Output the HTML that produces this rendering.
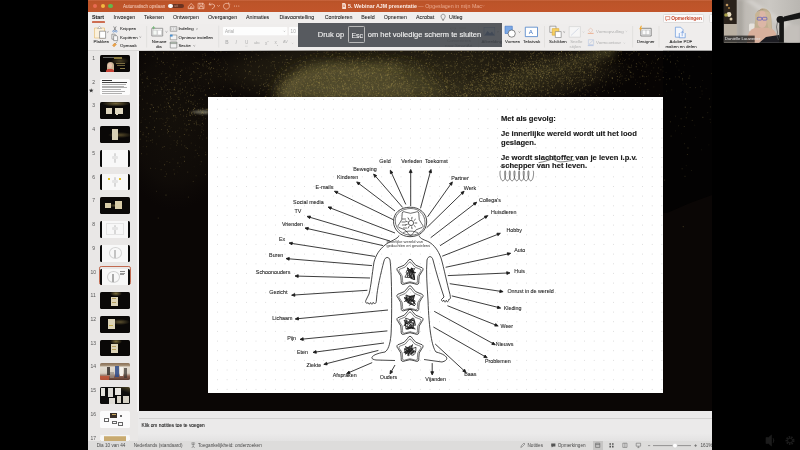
<!DOCTYPE html>
<html><head><meta charset="utf-8">
<style>
*{box-sizing:border-box;margin:0;padding:0}
html,body{width:800px;height:450px;overflow:hidden;background:#000;font-family:"Liberation Sans",sans-serif}
#root{position:absolute;left:0;top:0;width:800px;height:450px;overflow:hidden;will-change:transform;background:#000}
.a{position:absolute}
.t{position:absolute;white-space:nowrap;line-height:1}
svg{position:absolute;left:0;top:0;overflow:visible}
#title{left:88px;top:0;width:624px;height:12px;background:linear-gradient(#cd6a44 0,#b95328 1.3px,#bd5429 3px,#c1552b 100%)}
#tabs{left:88px;top:12px;width:624px;height:12px;background:#f0eeed}
#ribbon{left:88px;top:24px;width:624px;height:26.6px;background:#efedec;border-bottom:0.6px solid #d9d7d6}
#panel{left:88px;top:50.6px;width:49.5px;height:391px;background:#e9e7e6}
#canvas{left:139px;top:50.6px;width:573px;height:360.6px;background:#0a0605;overflow:hidden}
#notes{left:137.5px;top:411.2px;width:574.5px;height:30px;background:linear-gradient(#ebeaea 0,#ebeaea 75%,#e3e2e2 100%)}
#status{left:88px;top:441.2px;width:624px;height:8.8px;background:#dddcdb}
.tab{font-size:5.3px;color:#1c1c1c;top:15.3px;-webkit-text-stroke:0.06px #1c1c1c}
.rb{font-size:4.4px;color:#262626;-webkit-text-stroke:0.06px #262626}
.rg{font-size:4.4px;color:#b0b0b0}
.sb{font-size:4.65px;color:#4a4a4a;top:443.6px}
.thumb{position:absolute;left:100.2px;width:29.6px;height:16.8px;border-radius:1.6px;overflow:hidden}
.num{position:absolute;font-size:5px;color:#555}
</style></head><body><div id="root">
<!-- title bar -->
<div id="title" class="a"></div>
<div class="a" style="left:92.9px;top:3.8px;width:4.5px;height:4.5px;border-radius:50%;background:#e86b52"></div>
<div class="a" style="left:100.5px;top:3.8px;width:4.5px;height:4.5px;border-radius:50%;background:#f4b840"></div>
<div class="a" style="left:108.3px;top:3.8px;width:4.5px;height:4.5px;border-radius:50%;background:#62b84c"></div>
<div class="t" style="left:123px;top:5.1px;font-size:4.55px;color:#f6d2c2">Automatisch opslaan</div>
<div class="a" style="left:168px;top:3.7px;width:15.6px;height:4.8px;border-radius:2.4px;background:#6a3321"></div>
<div class="a" style="left:168.3px;top:3.95px;width:4.3px;height:4.3px;border-radius:50%;background:#fbfbfb"></div>
<div class="t" style="left:174.2px;top:4.7px;font-size:3.4px;color:#c89a88">uit</div>
<svg width="800" height="12" viewBox="0 0 800 12"><g fill="none" stroke="#f3c3ad" stroke-width="0.75" stroke-linejoin="round" stroke-linecap="round">
<path d="M188.6,6.3 L191.2,3.4 L193.8,6.3 L193.8,8.6 L188.6,8.6 Z M190.4,8.6 L190.4,6.9 Q191.2,6.2 192,6.9 L192,8.6"/>
<path d="M198.5,3.3 H203.3 L204,4 V8.7 H198.5 Z M199.8,3.3 V5.2 H202.5 V3.3 M199.6,8.7 V6.6 H203 V8.7"/>
<path d="M209.3,4.6 Q212.7,3 214.5,5 Q215.6,7.2 212.2,8.9 M209.3,4.6 L209.8,3.1 M209.3,4.6 L210.9,5"/>
<path d="M217.3,5.4 L218.5,6.4 L219.7,5.4" stroke-width="0.6"/>
<path d="M229.3,5.2 A3,3 0 1 1 228.4,3.9 M228.5,2.9 L228.6,4.1 L229.8,4.2"/>
</g><g fill="#f3c3ad"><circle cx="234.4" cy="6" r="0.55"/><circle cx="236.6" cy="6" r="0.55"/><circle cx="238.8" cy="6" r="0.55"/></g>
<path d="M342.2,3 H344.8 L346,4.2 V9 H342.2 Z" fill="#f6dccf"/><path d="M343,5.2 H345 M343,6.5 H345" stroke="#c65027" stroke-width="0.5"/>
</svg>
<div class="t" style="left:348px;top:4.2px;font-size:5.3px;color:#fbece6"><b>5. Webinar AJM presentatie</b><span style="color:#eaa98d"> — Opgeslagen in mijn Mac</span></div>
<svg width="800" height="12" viewBox="0 0 800 12"><path d="M482.3,5.3 L483.3,6.3 L484.3,5.3" fill="none" stroke="#e09a80" stroke-width="0.5"/></svg>

<!-- tabs -->
<div id="tabs" class="a"></div>
<div class="t tab" style="left:92px;font-weight:bold;color:#222">Start</div>
<div class="a" style="left:92px;top:21.4px;width:12.6px;height:1.2px;background:#cd6e52;border-radius:0.6px"></div>
<div class="t tab" style="left:113.5px">Invoegen</div>
<div class="t tab" style="left:144px">Tekenen</div>
<div class="t tab" style="left:173px">Ontwerpen</div>
<div class="t tab" style="left:208px">Overgangen</div>
<div class="t tab" style="left:246px">Animaties</div>
<div class="t tab" style="left:279.4px">Diavoorstelling</div>
<div class="t tab" style="left:324.7px">Controleren</div>
<div class="t tab" style="left:361.2px">Beeld</div>
<div class="t tab" style="left:383.7px">Opnemen</div>
<div class="t tab" style="left:416px">Acrobat</div>
<svg width="800" height="30" viewBox="0 0 800 30"><path d="M441.2,17.2 A2.1,2.1 0 1 1 445,17.2 Q444.3,18.3 444,19.4 H442.2 Q441.9,18.3 441.2,17.2 Z M442.3,20.3 H443.9" fill="none" stroke="#555" stroke-width="0.55"/></svg>
<div class="t tab" style="left:449px">Uitleg</div>
<div class="a" style="left:662.6px;top:14.2px;width:41.5px;height:8.4px;background:#fcfbfb;border:0.5px solid #dedcdb;border-radius:1.5px"></div>
<svg width="800" height="30" viewBox="0 0 800 30"><path d="M665.6,16.6 H669.8 V19.6 H667.5 L666.3,20.7 V19.6 H665.6 Z" fill="none" stroke="#c94a2c" stroke-width="0.55" stroke-linejoin="round"/></svg>
<div class="t" style="left:671.2px;top:16.8px;font-size:4.75px;color:#c64629;font-weight:bold">Opmerkingen</div>
<div class="a" style="left:708.6px;top:14.2px;width:5px;height:8.4px;background:#fcfbfb;border:0.5px solid #dedcdb;border-radius:1.5px"></div>

<!-- ribbon -->
<div id="ribbon" class="a"></div>
<svg width="800" height="52" viewBox="0 0 800 52">
<g stroke-width="0.6" stroke-linejoin="round">
<!-- paste -->
<path d="M94.5,28 H104.5 V38 H94.5 Z" fill="#fbf1dc" stroke="#e6b866"/>
<path d="M97.5,28.5 L99.5,26.3 L101.5,28.5 Z" fill="#fff" stroke="#999"/>
<path d="M99.6,31.2 H105.6 V38.3 H99.6 Z" fill="#fff" stroke="#6a6a6a"/>
<path d="M106.9,31.6 L107.8,32.4 L108.7,31.6" fill="none" stroke="#555" stroke-width="0.5"/>
<!-- scissors -->
<path d="M113.6,26.4 L115.9,30.5 M116.2,26.4 L113.9,30.5" fill="none" stroke="#555"/>
<circle cx="113.6" cy="31.3" r="0.9" fill="none" stroke="#4a7ec8"/><circle cx="116.2" cy="31.3" r="0.9" fill="none" stroke="#4a7ec8"/>
<!-- copy -->
<path d="M111.9,34.2 H115 L116,35.2 V39.2 H111.9 Z" fill="#f6f6f6" stroke="#6a6a6a"/>
<path d="M113.6,35.7 H116.6 L117.6,36.7 V40.6 H113.6 Z" fill="#f6f6f6" stroke="#6a6a6a"/>
<path d="M139.4,36.6 L140.3,37.4 L141.2,36.6" fill="none" stroke="#555" stroke-width="0.5"/>
<!-- brush -->
<path d="M112.6,45.3 L114.8,43 L116.3,44.5 L114,46.8 Z" fill="#eba447" stroke="#d98a30"/>
<path d="M115.3,43.5 L117.3,41.6" fill="none" stroke="#777"/>
<!-- separators -->
<path d="M146.6,26 V47.5 M218.7,25.7 V47.5 M544.5,26 V47.5 M632.6,26 V47.5 M659,26 V47.5" stroke="#d6d4d3" stroke-width="0.5"/>
<!-- nieuwe dia -->
<path d="M151.8,28.3 H162.7 V36 H151.8 Z" fill="#f5f5f5" stroke="#858585" stroke-width="0.8"/>
<path d="M153,30.2 H157 V35 H153 Z" fill="#f4f8f4" stroke="#aaa" stroke-width="0.4"/>
<path d="M157.6,30.2 H161.5 V35 H157.6 Z" fill="#fff" stroke="#aaa" stroke-width="0.4"/>
<path d="M153.6,26 V29.4 M152,27.7 H155.2" stroke="#67b36a" stroke-width="0.7"/>
<path d="M165.6,31.4 L166.5,32.2 L167.4,31.4" fill="none" stroke="#555" stroke-width="0.5"/>
<!-- indeling etc -->
<path d="M170.3,26.6 H176.8 V31.3 H170.3 Z" fill="#f4f4f4" stroke="#7a7a7a"/><path d="M171.4,27.8 H175.7 V30.2 H171.4 Z M173.5,27.8 V30.2" fill="none" stroke="#aaa" stroke-width="0.4"/>
<path d="M196,28.6 L196.9,29.4 L197.8,28.6" fill="none" stroke="#555" stroke-width="0.5"/>
<path d="M170.3,35 H176.8 V39.8 H170.3 Z" fill="#f4f4f4" stroke="#7a7a7a"/><path d="M170,34.6 H172.6 V36.6 H170 Z" fill="#4a90d0" stroke="none"/>
<path d="M170.3,42.2 H176.8 V48 H170.3 Z" fill="#f2f2f2" stroke="#7a7a7a"/><path d="M170.3,42.2 H176.8 V43.6 H170.3 Z" fill="#c6dcc3" stroke="#7a7a7a"/>
<path d="M193.4,45.4 L194.3,46.2 L195.2,45.4" fill="none" stroke="#555" stroke-width="0.5"/>
<!-- font -->
<rect x="223" y="27" width="64.3" height="8.2" rx="0.8" fill="#fdfdfd" stroke="none"/>
<rect x="288.9" y="27" width="10" height="8.2" rx="0.8" fill="#fdfdfd" stroke="none"/>
<path d="M283.6,30.8 L284.4,31.6 L285.2,30.8" fill="none" stroke="#999" stroke-width="0.5"/>
<path d="M291.8,42.8 L292.6,43.6 L293.4,42.8" fill="none" stroke="#bbb" stroke-width="0.5"/>
<path d="M245,46.2 H247.6" stroke="#bbb" stroke-width="0.4"/>
<!-- vormen -->
<path d="M505,26.2 H512.3 V33.5 H505 Z" fill="#7aa8e6" stroke="#3f74c4"/>
<circle cx="511.7" cy="33.6" r="3.6" fill="#fff" stroke="#555" stroke-width="0.7"/>
<path d="M518.6,31.6 L519.5,32.4 L520.4,31.6" fill="none" stroke="#555" stroke-width="0.5"/>
<path d="M525.3,27.2 H537.5 V36.6 H525.3 Z" fill="#fff" stroke="#4a80c8" stroke-width="0.8"/>
<!-- schikken -->
<path d="M549.8,26.2 H556 V32.4 H549.8 Z" fill="#f4f4f4" stroke="#777"/>
<path d="M552.2,28.6 H558.8 V35.2 H552.2 Z" fill="#f7cf60" stroke="#d6a838"/>
<path d="M555.3,31.6 H561.2 V37.5 H555.3 Z" fill="#fff" stroke="#777"/>
<path d="M563.3,31.6 L564.2,32.4 L565.1,31.6" fill="none" stroke="#555" stroke-width="0.5"/>
<path d="M569.2,26.6 H580.4 V37.2 H569.2 Z" fill="#f6f6f6" stroke="#cfcfcf"/>
<path d="M571,35.5 L578.6,28.4" stroke="#c8d0e0" stroke-width="0.7"/>
<path d="M582.6,31.6 L583.5,32.4 L584.4,31.6" fill="none" stroke="#c0c0c0" stroke-width="0.5"/>
<path d="M588.3,30.3 L590.6,28 L593,30.3 L590.6,32.6 Z" fill="none" stroke="#e4b09a" stroke-width="0.5"/>
<path d="M587.8,33.4 H593.6" stroke="#e8a27e" stroke-width="0.8"/>
<path d="M625.6,30.9 L626.4,31.6 L627.2,30.9 M623.6,42.7 L624.4,43.4 L625.2,42.7" fill="none" stroke="#c0c0c0" stroke-width="0.5"/>
<path d="M588.4,39.7 H593.6 V44.5 H588.4 Z" fill="none" stroke="#b0c0de" stroke-width="0.5"/>
<path d="M589.2,44 L593.2,40.2" stroke="#a8b8d8" stroke-width="0.5"/>
<path d="M587.8,45.6 H593.6" stroke="#a8bce0" stroke-width="0.8"/>
<!-- designer -->
<path d="M640.8,28.3 H651.2 V36 H640.8 Z" fill="#fafafa" stroke="#707070" stroke-width="0.8"/>
<path d="M642.2,30 H649.8 V34.6 H642.2 Z M646,30 V34.6" fill="none" stroke="#999" stroke-width="0.45"/>
<path d="M640.8,25.8 L639.2,29.2 L640.6,29.2 L639.6,31.6 L642.4,28 L641,28 L642,25.8 Z" fill="#f0a830" stroke="none"/>
<!-- adobe pdf -->
<path d="M675.4,27.2 H680.6 L683,29.6 V37.2 H675.4 Z" fill="#f4f7fd" stroke="#5d8fd8" stroke-width="0.65"/>
<path d="M679.3,33 V37.8 H685.2 V33" fill="#f4f7fd" stroke="#5d8fd8" stroke-width="0.65"/>
<path d="M682.2,36.2 V31.6 M680.9,32.8 L682.2,31.5 L683.5,32.8" fill="none" stroke="#5d8fd8" stroke-width="0.6"/>
</g></svg>
<div class="t rb" style="left:93.5px;top:39.8px">Plakken</div>
<div class="t rb" style="left:120px;top:27.2px">Knippen</div>
<div class="t rb" style="left:120px;top:35.8px">Kopiëren</div>
<div class="t rb" style="left:120px;top:44px">Opmaak</div>
<div class="t rb" style="left:151.8px;top:40.1px">Nieuwe</div>
<div class="t rb" style="left:155.9px;top:44.8px">dia</div>
<div class="t rb" style="left:178.4px;top:27.1px">Indeling</div>
<div class="t rb" style="left:178.4px;top:35.7px">Opnieuw instellen</div>
<div class="t rb" style="left:178.4px;top:44.1px">Sectie</div>
<div class="t rg" style="left:225px;top:29.7px;font-size:4.6px;color:#a8a8a8">Arial</div>
<div class="t rg" style="left:290.6px;top:29.7px;font-size:4.6px;color:#a8a8a8">10</div>
<div class="t rg" style="left:225.2px;top:41.3px;font-size:4.6px;font-weight:bold">B</div>
<div class="t rg" style="left:235.6px;top:41.3px;font-size:4.6px;font-style:italic">I</div>
<div class="t rg" style="left:245px;top:41.3px;font-size:4.6px">U</div>
<div class="t rg" style="left:254px;top:41.6px;font-size:3.8px">abc</div>
<div class="t rg" style="left:265px;top:41.3px;font-size:4.6px">x<sup style="font-size:2.5px">2</sup></div>
<div class="t rg" style="left:274.5px;top:41.3px;font-size:4.6px">x<sub style="font-size:2.5px">2</sub></div>
<div class="t rg" style="left:283px;top:41.3px;font-size:3.8px">AV</div>
<div class="t rb" style="left:505px;top:40.1px">Vormen</div>
<div class="t" style="left:528.8px;top:28.8px;font-size:6.2px;color:#3a70c0">A</div>
<div class="t rb" style="left:523px;top:40.1px">Tekstvak</div>
<div class="t rb" style="left:549px;top:40.1px">Schikken</div>
<div class="t rg" style="left:570.2px;top:40.1px">Snelle</div>
<div class="t rg" style="left:569.6px;top:44.8px">stijlen</div>
<div class="t rg" style="left:596px;top:29.6px">Vormopvulling</div>
<div class="t rg" style="left:596px;top:41.4px">Vormcontour</div>
<div class="t rb" style="left:637px;top:39.8px">Designer</div>
<div class="t rb" style="left:669.6px;top:39.8px">Adobe PDF</div>
<div class="t rb" style="left:665.4px;top:44.6px">maken en delen</div>

<!-- panel with thumbnails -->
<div id="panel" class="a"></div>
<div class="a" style="left:137.4px;top:50.6px;width:1.6px;height:361px;background:#f5f4f4"></div>
<div class="t num" style="left:92.3px;top:56.0px">1</div>
<div class="thumb" style="top:55.0px;height:16.8px;background:radial-gradient(ellipse 9px 4px at 20px 6px, rgba(150,130,70,0.45), rgba(0,0,0,0) 100%), #0a0807"><div class="a" style="left:2.5px;top:2.2px;width:11px;height:1.3px;background:#6a6a66"></div><div class="a" style="left:14px;top:2.2px;width:8px;height:1.6px;background:#8a7a40"></div><div class="a" style="left:6.5px;top:7px;width:7px;height:8.5px;border-radius:3.5px 3.5px 1px 1px;background:#c8b494"></div><div class="a" style="left:8px;top:8px;width:4px;height:5px;border-radius:2px;background:#e6c2ae"></div><div class="a" style="left:6px;top:14px;width:8px;height:2.8px;background:#c84438;border-radius:2.5px 2.5px 0 0"></div><div class="a" style="left:16px;top:7.5px;width:9px;height:0.8px;background:#7a6c40"></div><div class="a" style="left:17px;top:10px;width:8px;height:0.8px;background:#6a5e38"></div><div class="a" style="left:20px;top:12.5px;width:5px;height:0.8px;background:#8a7a48"></div></div>
<div class="t num" style="left:92.3px;top:79.7px">2</div>
<svg width="800" height="450" viewBox="0 0 800 450"><path d="M91.20,88.20 L91.79,89.79 L93.48,89.86 L92.15,90.91 L92.61,92.54 L91.20,91.60 L89.79,92.54 L90.25,90.91 L88.92,89.86 L90.61,89.79Z" fill="#333"/></svg>
<div class="thumb" style="top:78.7px;height:16.8px;background:#fcfcfc"><div class="a" style="left:2.2px;top:1.3px;width:10px;height:1.1px;background:#333"></div><div class="a" style="left:2.2px;top:3.2px;width:25px;height:1px;background:#444"></div><div class="a" style="left:2.2px;top:5.2px;width:24px;height:0.55px;background:#b0b0b0"></div><div class="a" style="left:2.2px;top:7.0px;width:22px;height:0.55px;background:#b0b0b0"></div><div class="a" style="left:2.2px;top:8.8px;width:25px;height:0.55px;background:#b0b0b0"></div><div class="a" style="left:2.2px;top:10.6px;width:19px;height:0.55px;background:#b0b0b0"></div><div class="a" style="left:2.2px;top:12.4px;width:23px;height:0.55px;background:#b0b0b0"></div><div class="a" style="left:2.2px;top:14.2px;width:20px;height:0.55px;background:#b0b0b0"></div></div>
<div class="t num" style="left:92.3px;top:103.4px">3</div>
<div class="thumb" style="top:102.4px;height:16.8px;background:radial-gradient(ellipse 14px 3px at 16px 1.5px, rgba(160,140,80,0.7), rgba(0,0,0,0) 100%), #0a0807"><div class="a" style="left:6px;top:5.5px;width:6px;height:6.5px;background:#ddd4bc"></div><div class="a" style="left:14.5px;top:6px;width:8px;height:5.5px;background:#e0d8c0"></div><div class="a" style="left:16px;top:11.5px;width:2px;height:1.5px;background:#e0d8c0"></div></div>
<div class="t num" style="left:92.3px;top:127.2px">4</div>
<div class="thumb" style="top:126.2px;height:16.8px;background:radial-gradient(ellipse 12px 3px at 20px 9px, rgba(150,130,70,0.55), rgba(0,0,0,0) 100%), #0a0807"><div class="a" style="left:12px;top:3px;width:6px;height:11px;background:#d8cfb4"></div></div>
<div class="t num" style="left:92.3px;top:150.9px">5</div>
<div class="thumb" style="top:149.9px;height:16.8px;background:#0a0a0a"><div class="a" style="left:2px;top:0;width:25.6px;height:16.8px;background:#f8f8f8"></div><div class="a" style="left:13.6px;top:3.5px;width:2.4px;height:10px;background:#d8d8d8;border-radius:1.2px"></div><div class="a" style="left:11.5px;top:6px;width:6.6px;height:3px;background:#e4e4e4;border-radius:1px"></div></div>
<div class="t num" style="left:92.3px;top:174.6px">6</div>
<div class="thumb" style="top:173.6px;height:16.8px;background:#0a0a0a"><div class="a" style="left:2px;top:0;width:25.6px;height:16.8px;background:#f8f8f8"></div><div class="a" style="left:13.6px;top:3.5px;width:2.4px;height:10px;background:#d8d8d8;border-radius:1.2px"></div><div class="a" style="left:11.5px;top:6px;width:6.6px;height:3px;background:#e4e4e4;border-radius:1px"></div><div class="a" style="left:8px;top:4px;width:2px;height:2px;background:#e0c030"></div><div class="a" style="left:19px;top:4px;width:2px;height:2px;background:#e0c030"></div></div>
<div class="t num" style="left:92.3px;top:198.3px">7</div>
<div class="thumb" style="top:197.3px;height:16.8px;background:radial-gradient(ellipse 8px 2px at 15px 8.5px, rgba(160,140,80,0.5), rgba(0,0,0,0) 100%), #0a0807"><div class="a" style="left:5px;top:5.5px;width:6px;height:5.5px;background:#d8cca8"></div><div class="a" style="left:15px;top:4px;width:7px;height:8px;background:#d8cca8"></div></div>
<div class="t num" style="left:92.3px;top:222.0px">8</div>
<div class="thumb" style="top:221.0px;height:16.8px;background:#0a0a0a"><div class="a" style="left:2px;top:0;width:25.6px;height:16.8px;background:#f8f8f8"></div><div class="a" style="left:13.6px;top:3.5px;width:2.4px;height:10px;background:#d8d8d8;border-radius:1.2px"></div><div class="a" style="left:11.5px;top:6px;width:6.6px;height:3px;background:#e4e4e4;border-radius:1px"></div><div class="a" style="left:6px;top:2px;width:18px;height:12px;border:0.5px solid #e4e4e4"></div></div>
<div class="t num" style="left:92.3px;top:245.8px">9</div>
<div class="thumb" style="top:244.8px;height:16.8px;background:#0a0a0a"><div class="a" style="left:2px;top:0;width:25.6px;height:16.8px;background:#f8f8f8"></div><div class="a" style="left:8.5px;top:2.5px;width:13px;height:12px;border-radius:50%;border:0.5px solid #d4d4d4"></div><div class="a" style="left:14.3px;top:5px;width:1.4px;height:8px;background:#c4c4c4"></div></div>
<div class="t num" style="left:90.6px;top:269.5px">10</div>
<div class="a" style="left:99px;top:266.3px;width:32px;height:19.2px;border:1.4px solid #c26a50;border-radius:2.2px"></div>
<div class="thumb" style="top:268.5px;height:16.8px;background:#0a0a0a"><div class="a" style="left:2px;top:0;width:25.6px;height:16.8px;background:#f8f8f8"></div><div class="a" style="left:6.5px;top:2.5px;width:13px;height:12px;border-radius:50%;border:0.5px solid #d0d0d0"></div><div class="a" style="left:12.3px;top:5px;width:1.3px;height:8px;background:#aaa"></div><div class="a" style="left:19.5px;top:2.5px;width:5px;height:0.8px;background:#888"></div><div class="a" style="left:19.5px;top:4px;width:5px;height:0.6px;background:#999"></div><div class="a" style="left:19.5px;top:5.3px;width:4px;height:0.6px;background:#999"></div></div>
<div class="t num" style="left:90.6px;top:293.2px">11</div>
<div class="thumb" style="top:292.2px;height:16.8px;background:radial-gradient(ellipse 6px 3px at 16px 1.5px, rgba(170,150,80,0.7), rgba(0,0,0,0) 100%), #0a0807"><div class="a" style="left:11px;top:4.5px;width:7px;height:9px;background:#ddd4b8"></div><div class="a" style="left:12px;top:6px;width:4px;height:0.8px;background:#b8a060"></div><div class="a" style="left:12px;top:9.5px;width:4px;height:0.8px;background:#b8a060"></div></div>
<div class="t num" style="left:90.6px;top:316.9px">12</div>
<div class="thumb" style="top:315.9px;height:16.8px;background:radial-gradient(ellipse 10px 3px at 20px 6px, rgba(160,140,80,0.55), rgba(0,0,0,0) 100%), #0a0807"><div class="a" style="left:8px;top:3px;width:7px;height:10px;background:#ddd4b8"></div><div class="a" style="left:9px;top:9px;width:4px;height:1px;background:#c8b050"></div></div>
<div class="t num" style="left:90.6px;top:340.6px">13</div>
<div class="thumb" style="top:339.6px;height:16.8px;background:radial-gradient(ellipse 6px 3px at 16px 1.5px, rgba(170,150,80,0.7), rgba(0,0,0,0) 100%), #0a0807"><div class="a" style="left:11px;top:4.5px;width:7px;height:9px;background:#ddd4b8"></div><div class="a" style="left:12px;top:6px;width:4px;height:0.8px;background:#b8a060"></div><div class="a" style="left:12px;top:9.5px;width:4px;height:0.8px;background:#b8a060"></div></div>
<div class="t num" style="left:90.6px;top:364.4px">14</div>
<div class="thumb" style="top:363.4px;height:16.8px;background:linear-gradient(180deg,#8a7058 0%,#a08a70 14%,#e4ddd2 24%,#d8d0c4 60%,#8a6050 78%,#5a3a30 100%)"><div class="a" style="left:7px;top:4px;width:3px;height:8px;background:#2a2420;opacity:0.8"></div><div class="a" style="left:15px;top:3px;width:4px;height:11px;background:#2e4a88;opacity:0.85"></div><div class="a" style="left:20px;top:4px;width:3px;height:9px;background:#f4f0ea"></div><div class="a" style="left:24px;top:5px;width:3px;height:10px;background:#3a3430;opacity:0.7"></div><div class="a" style="left:0;top:12.5px;width:9px;height:4.3px;background:#c8583a;opacity:0.8"></div><div class="a" style="left:10px;top:9px;width:4px;height:6px;background:#9a9088;opacity:0.7"></div></div>
<div class="t num" style="left:90.6px;top:388.1px">15</div>
<div class="thumb" style="top:387.1px;height:16.8px;background:linear-gradient(200deg,rgba(160,140,70,0.5) 0,rgba(0,0,0,0) 25%),#0c0c0c"><div class="a" style="left:0.5px;top:1px;width:4.5px;height:8px;background:#e4e2dc"></div><div class="a" style="left:8px;top:1px;width:4.5px;height:9px;background:#dcdad4"></div><div class="a" style="left:15px;top:1px;width:6px;height:6.5px;background:#e8e6e0"></div><div class="a" style="left:9px;top:11px;width:6px;height:5.5px;background:#e0ddd6"></div><div class="a" style="left:17px;top:9px;width:4px;height:7px;background:#d8d4c8"></div><div class="a" style="left:23px;top:9px;width:6px;height:7px;background:#d4d0c4"></div></div>
<div class="t num" style="left:90.6px;top:411.8px">16</div>
<div class="thumb" style="top:410.8px;height:16.8px;background:#fbfbfb"><div class="a" style="left:10px;top:2px;width:7px;height:5px;background:#3a3128"></div><div class="a" style="left:12px;top:3.5px;width:4px;height:1px;background:#c8a860"></div><div class="a" style="left:4px;top:7.5px;width:5px;height:4px;border:0.5px solid #666;background:#fff"></div><div class="a" style="left:12px;top:10px;width:5px;height:3px;border:0.5px solid #666"></div><div class="a" style="left:17.5px;top:11.5px;width:5px;height:3.5px;border:0.5px solid #666"></div><div class="a" style="left:20px;top:4px;width:2px;height:1.5px;border:0.5px solid #666"></div></div>
<div class="t num" style="left:90.6px;top:435.5px">17</div>
<div class="thumb" style="top:434.5px;height:6.7px;background:linear-gradient(180deg,#f4f4f4 0 12%,#d4bc8c 12% 30%,#e4d4b0 30% 40%,#c8aa70 40% 100%)"><div class="a" style="left:0;top:0;width:3.5px;height:17px;background:#f6f6f6"></div><div class="a" style="left:26px;top:0;width:3.6px;height:17px;background:#f6f6f6"></div></div>

<!-- canvas -->
<div id="canvas" class="a"></div>
<svg width="800" height="450" viewBox="0 0 800 450">
<defs>
<radialGradient id="gc"><stop offset="0" stop-color="#7a7048" stop-opacity="1"/><stop offset="0.78" stop-color="#645a3a" stop-opacity="0.95"/><stop offset="1" stop-color="#3a3320" stop-opacity="0"/></radialGradient>
<radialGradient id="gs"><stop offset="0" stop-color="#4e4830" stop-opacity="1"/><stop offset="1" stop-color="#3a3320" stop-opacity="0"/></radialGradient>
<radialGradient id="gb"><stop offset="0" stop-color="#2c2716" stop-opacity="1"/><stop offset="0.7" stop-color="#201b10" stop-opacity="0.8"/><stop offset="1" stop-color="#1a150c" stop-opacity="0"/></radialGradient>
<filter id="sb" x="-20%" y="-50%" width="140%" height="200%"><feGaussianBlur stdDeviation="0.8"/></filter>
<filter id="cb" x="-20%" y="-50%" width="140%" height="200%"><feGaussianBlur stdDeviation="7"/></filter>
<filter id="rb" x="-20%" y="-50%" width="140%" height="200%"><feGaussianBlur stdDeviation="4"/></filter>
<clipPath id="cc"><rect x="139" y="50.6" width="573" height="360.6"/></clipPath>
</defs>
<g clip-path="url(#cc)">
<path d="M663,50.6 H712 V195 L690,203 L667,213 H663 Z" fill="#030202"/><rect x="600" y="50.6" width="63" height="46.4" fill="#030202" opacity="0.5"/>
<ellipse cx="410" cy="72" rx="230" ry="38" fill="url(#gb)"/>
<ellipse cx="175" cy="120" rx="60" ry="90" fill="url(#gb)" opacity="0.3"/>
<ellipse cx="535" cy="72" rx="80" ry="16" fill="url(#gs)" transform="rotate(-14 535 72)" opacity="0.75"/>
<ellipse cx="470" cy="88" rx="55" ry="14" fill="url(#gs)" opacity="0.7"/>
<path d="M276,100 C278,80 292,66 322,64 L395,65 C425,67 438,82 446,100 Z" fill="#433c22" filter="url(#cb)"/>
<path d="M286,100 C290,82 302,70 330,68 L400,69" fill="none" stroke="#5a522e" stroke-width="8" filter="url(#rb)" opacity="0.8"/>
<path d="M455,92 C500,84 560,68 615,50" fill="none" stroke="#4e4828" stroke-width="10" filter="url(#rb)" opacity="0.8"/>
<ellipse cx="470" cy="96" rx="60" ry="9" fill="url(#gs)" opacity="0.6"/>
<ellipse cx="530" cy="80" rx="95" ry="24" fill="url(#gb)" transform="rotate(-10 530 80)" opacity="0.9"/>
<ellipse cx="345" cy="94" rx="80" ry="30" fill="url(#gc)" opacity="0.3"/>
<path d="M190,112 Q200,109.5 208.5,110.5 L208.5,114 Q200,114.5 190,112 Z" fill="#b0ae98" opacity="0.6" filter="url(#sb)"/>
<path d="M293.6 82.0h0M262.6 65.3h0M316.3 78.9h0M403.9 83.0h0M505.4 90.5h0M488.4 87.9h0M619.1 66.3h0M534.8 85.7h0M501.4 67.9h0M275.6 81.1h0M145.1 63.4h0M392.9 79.2h0M527.6 73.1h0M410.6 72.2h0M531.4 88.6h0M507.7 78.1h0M327.5 77.9h0M468.6 51.7h0M608.6 92.8h0M552.9 72.8h0M518.5 83.9h0M568.9 71.7h0M461.7 62.4h0M161.6 87.9h0M333.3 88.4h0M530.6 67.0h0M397.2 74.0h0M627.4 69.6h0M527.4 70.7h0M161.6 61.3h0M526.9 89.4h0M386.3 71.2h0M483.9 71.4h0M532.8 86.3h0M643.4 61.7h0M478.4 84.7h0M506.2 59.4h0M273.9 61.8h0M675.5 63.8h0M418.2 68.2h0M576.4 77.5h0M531.8 93.9h0M372.9 73.4h0M575.5 78.4h0M472.5 72.4h0M337.7 87.1h0M477.8 66.2h0M327.9 68.8h0M614.0 51.8h0M472.0 76.8h0M372.0 70.1h0M223.4 86.8h0M591.4 65.2h0M537.2 77.9h0M268.9 89.6h0M340.1 91.8h0M372.7 74.0h0M401.5 90.7h0M479.1 96.3h0M501.2 62.4h0M413.3 83.1h0M188.9 100.3h0M542.4 65.8h0M355.4 90.1h0M428.3 56.4h0M367.0 87.6h0M401.8 87.7h0M412.3 82.8h0M213.4 68.3h0M397.1 92.6h0M287.1 80.2h0M403.6 77.2h0M541.4 71.8h0M521.4 76.1h0M528.6 61.5h0M613.9 72.3h0M489.1 89.0h0M466.5 67.7h0M293.8 73.4h0M498.0 61.6h0M438.1 89.5h0M564.0 95.1h0M491.5 74.0h0M451.1 71.2h0M454.5 86.0h0M422.8 78.5h0M373.9 72.7h0M199.6 77.6h0M350.5 56.3h0M327.2 78.3h0M532.5 73.7h0M486.3 77.7h0M480.6 94.5h0M157.1 90.3h0M501.3 95.9h0M568.1 78.6h0M147.1 103.2h0M372.7 86.9h0M511.5 67.3h0M530.8 76.0h0M570.6 78.6h0M559.7 62.5h0M431.0 59.5h0M396.2 96.9h0M517.6 68.5h0M358.4 72.4h0M342.2 93.3h0M351.4 88.2h0M401.7 68.8h0M677.2 60.7h0M506.6 95.4h0M490.3 93.7h0M619.6 72.5h0M472.8 56.8h0M516.5 60.0h0M483.1 81.5h0M536.8 68.6h0M575.5 57.3h0M140.2 139.2h0M487.4 77.7h0M552.2 80.5h0M533.6 83.9h0M341.8 78.7h0M195.7 115.5h0M361.2 74.8h0M360.6 55.2h0M280.5 92.8h0M409.3 86.1h0M310.4 68.0h0M169.1 105.9h0M426.1 51.0h0M508.1 94.2h0M581.9 65.8h0M322.7 85.2h0M178.4 91.3h0M588.1 92.0h0M391.7 84.4h0M488.0 84.7h0M445.8 94.6h0M368.5 78.3h0M456.5 91.4h0M526.6 81.1h0M288.7 82.9h0M354.1 81.3h0M475.7 52.3h0M577.2 82.6h0M558.2 80.8h0M434.4 81.9h0M309.2 81.0h0M188.3 197.1h0M513.6 77.4h0M345.0 75.3h0M380.6 75.4h0M564.2 73.2h0M218.2 76.7h0M339.6 95.5h0M162.8 147.3h0M518.5 95.4h0M571.3 68.6h0M386.8 55.4h0M362.4 65.3h0M410.1 73.7h0M595.7 70.0h0M609.0 55.7h0M613.6 89.0h0M596.1 51.6h0M283.1 93.6h0M577.3 54.8h0M460.4 95.7h0M374.6 72.3h0M548.9 72.6h0M467.2 87.9h0M501.2 91.4h0M180.1 107.6h0M301.1 84.9h0M483.2 77.8h0M629.1 58.9h0M528.8 85.0h0M560.9 70.7h0M274.5 88.9h0M509.6 80.3h0M414.7 66.4h0M435.1 65.0h0M184.8 123.9h0M575.2 60.2h0M516.5 83.5h0M403.1 84.5h0M450.7 90.1h0M324.9 66.1h0M598.3 62.0h0M201.2 161.7h0M373.6 88.9h0M387.7 70.2h0M439.9 77.9h0M590.2 64.0h0M558.1 71.9h0M318.7 75.8h0M332.0 79.1h0M523.2 78.1h0M709.3 98.9h0M530.5 53.7h0M314.9 92.4h0M424.7 93.1h0M202.4 115.3h0M533.5 55.7h0M326.8 52.7h0M639.9 77.1h0M487.8 51.4h0M508.4 60.7h0M293.4 86.7h0M594.0 70.5h0M520.9 93.3h0M317.6 78.5h0M617.8 79.5h0M350.4 86.7h0M540.6 65.2h0M543.6 82.9h0M279.3 90.1h0M493.6 66.4h0M580.3 95.8h0M524.0 65.4h0M289.7 92.0h0M289.3 84.6h0M558.5 78.3h0M444.4 80.6h0M295.7 84.5h0M476.1 68.6h0M334.5 64.2h0M494.9 67.5h0M537.1 62.4h0M364.0 84.9h0M362.2 61.0h0M343.4 89.0h0M354.9 95.4h0M490.7 67.1h0M397.8 59.8h0M559.0 64.9h0M174.0 89.4h0M466.0 75.2h0M576.3 87.8h0M465.3 93.6h0M222.0 69.4h0M608.2 61.6h0M382.3 68.9h0M286.3 91.9h0M566.3 61.2h0M522.1 77.9h0M445.7 78.1h0M189.5 112.9h0M274.6 82.1h0M203.0 110.8h0M353.4 56.3h0M335.4 65.6h0M300.6 88.0h0M341.2 72.8h0M539.8 74.3h0M417.2 60.4h0M304.8 61.8h0M299.8 93.7h0M514.1 82.5h0M529.2 86.1h0M545.1 69.6h0M150.1 116.4h0M299.4 71.5h0M399.7 62.5h0M439.0 79.4h0M500.1 89.6h0M307.7 85.2h0M430.5 80.9h0M473.5 80.6h0M440.4 73.5h0M267.3 79.6h0M573.9 77.7h0M447.2 86.0h0M324.7 95.9h0M323.9 74.0h0M427.4 92.1h0M369.3 56.9h0M533.7 53.4h0M258.5 67.1h0M186.6 116.4h0M622.0 76.0h0M522.6 92.1h0M596.3 56.5h0M378.5 84.4h0M500.6 87.1h0M363.4 89.6h0M349.4 64.1h0M558.6 81.0h0M477.4 91.2h0M445.8 61.1h0M352.2 70.6h0M389.0 77.9h0M191.6 113.8h0M310.8 93.5h0M271.2 62.8h0M400.2 94.2h0M543.9 56.1h0M329.2 87.2h0M306.9 72.5h0M495.6 56.3h0M538.1 64.5h0M608.5 56.6h0M479.1 94.8h0M445.4 71.4h0M418.0 87.7h0M360.7 59.0h0M568.4 66.3h0M378.0 70.9h0M566.2 65.6h0M494.7 84.3h0M439.2 64.8h0M405.1 56.4h0M436.2 89.4h0M620.1 91.1h0M317.8 68.9h0M425.8 91.4h0M353.8 72.7h0M340.8 67.3h0M423.3 82.6h0M502.2 88.8h0M335.0 70.7h0M315.6 77.2h0M379.2 58.8h0M571.4 91.8h0M506.2 82.1h0M372.3 95.0h0M308.6 86.8h0M306.2 92.3h0M413.1 97.0h0M351.3 69.9h0M685.0 176.3h0M299.6 79.3h0M682.1 168.8h0M436.2 73.9h0M163.0 62.9h0M323.1 91.4h0M469.5 88.1h0M644.9 62.4h0M305.6 67.9h0M146.1 136.8h0M340.6 71.3h0M329.4 88.3h0M547.8 83.5h0M682.5 79.9h0M387.2 74.6h0M402.0 51.5h0M580.6 67.5h0M528.2 72.2h0M322.3 65.2h0M391.5 95.6h0M682.6 78.4h0M660.9 69.8h0M483.3 74.8h0M575.3 67.5h0M205.4 174.7h0M603.6 61.3h0M402.7 78.7h0M483.3 71.4h0M314.8 89.4h0M374.4 51.5h0M333.3 89.1h0M460.0 82.0h0M391.8 80.4h0M508.4 76.3h0M271.2 86.6h0M461.1 55.3h0M260.8 76.1h0M524.2 73.1h0M472.0 84.7h0M523.1 69.1h0M510.1 78.0h0M438.5 82.1h0M347.8 54.8h0M365.6 86.0h0M466.1 74.6h0M223.5 67.7h0M448.2 90.8h0M353.7 91.2h0M385.0 72.3h0M563.0 81.1h0M612.8 59.6h0M495.0 67.6h0M420.1 80.2h0M457.8 78.0h0M220.9 76.4h0M201.4 113.6h0M296.1 96.5h0M474.3 77.1h0M173.3 53.8h0M176.8 145.2h0M594.8 59.7h0M381.9 94.7h0M549.3 96.1h0M408.1 88.6h0M334.6 78.2h0M595.5 72.3h0M546.5 65.7h0M391.8 62.3h0M459.4 81.8h0M409.2 90.9h0M554.4 85.6h0M488.3 65.7h0M608.5 65.5h0M172.9 64.6h0M551.6 69.3h0M164.2 146.5h0M550.0 96.8h0M666.3 84.3h0M345.3 75.2h0M340.5 71.6h0M416.9 94.3h0M343.1 89.7h0M301.1 73.5h0M489.8 94.4h0M186.5 125.2h0M317.5 77.2h0M420.4 61.0h0M548.2 60.3h0M518.3 70.5h0M406.7 90.6h0M275.6 68.7h0M500.5 73.8h0M317.3 73.8h0M423.2 88.2h0M505.2 72.8h0M301.4 96.2h0M306.2 95.0h0M466.0 56.7h0M629.7 55.1h0M681.6 73.6h0M333.5 85.4h0M500.8 92.0h0M407.0 80.2h0M298.0 92.3h0M173.3 104.9h0M430.6 96.0h0M546.9 74.3h0M428.2 87.2h0M490.3 93.1h0M493.8 89.2h0M562.1 68.3h0M475.9 81.9h0M561.9 60.4h0M528.4 70.9h0M531.6 80.2h0M542.2 71.4h0M510.0 92.1h0M187.5 148.6h0M319.8 80.2h0M505.3 84.0h0M304.3 74.6h0M355.2 78.1h0M543.1 86.8h0M419.5 67.5h0M505.4 91.4h0M390.0 67.0h0M334.0 90.6h0M466.6 84.4h0M539.6 74.5h0M207.8 109.7h0M464.1 75.7h0M658.7 67.9h0M305.1 66.5h0M500.1 70.4h0M230.6 94.0h0M340.2 92.8h0M411.8 60.6h0M273.0 75.9h0M410.2 96.5h0M699.0 56.8h0M659.2 79.9h0M530.8 82.4h0M432.9 70.8h0M454.9 66.8h0M292.9 96.3h0M645.0 71.7h0M515.6 59.0h0M612.4 77.7h0M174.3 89.3h0M626.8 53.6h0M429.8 73.4h0M354.7 92.6h0M225.7 74.8h0M325.3 68.8h0M387.9 95.6h0M513.0 66.5h0M563.6 94.4h0M540.9 52.3h0M573.8 64.0h0M300.8 69.8h0M214.6 87.4h0M179.8 136.8h0M346.2 91.6h0M497.2 94.2h0M541.7 96.0h0M331.6 85.8h0M555.2 94.4h0M511.9 78.9h0M388.8 68.7h0M516.2 69.4h0M393.3 86.4h0M521.5 93.2h0M315.3 78.1h0M539.6 62.8h0M530.4 95.4h0M349.3 79.3h0M429.6 64.7h0M413.5 70.7h0M350.3 96.9h0M431.4 80.3h0M376.0 89.7h0M161.1 169.7h0M402.2 84.5h0M561.2 90.1h0M422.0 95.8h0M286.4 69.3h0M633.1 77.0h0M369.0 59.4h0M596.8 63.3h0M497.1 88.2h0M451.0 75.2h0M563.2 78.8h0M313.9 58.9h0M518.4 73.7h0M350.4 84.6h0M463.5 95.8h0M407.0 96.1h0M474.6 96.0h0M547.6 90.5h0M368.8 76.3h0M532.1 91.6h0M381.7 75.9h0M366.3 88.4h0M518.4 68.1h0M177.7 143.2h0M536.3 78.5h0M380.6 74.5h0M429.0 87.8h0M141.6 153.7h0M300.0 65.9h0M574.2 60.7h0M193.6 95.0h0M450.7 81.2h0M358.5 76.5h0M371.2 51.7h0M491.1 93.3h0M521.9 86.3h0M381.5 79.1h0M187.0 129.7h0M358.6 91.1h0M361.1 75.7h0M572.0 54.1h0M380.0 70.9h0M593.5 62.7h0M549.9 69.2h0M477.3 94.2h0M505.5 50.9h0M579.9 57.3h0M379.6 89.7h0M457.0 94.0h0M583.7 58.7h0M296.5 76.9h0M537.9 55.3h0M512.5 68.7h0M199.0 88.3h0M539.4 95.0h0M561.4 83.6h0M167.4 132.9h0M489.2 85.4h0M255.3 75.3h0M619.9 80.6h0M572.7 86.6h0M363.6 65.9h0M481.1 91.1h0M388.0 65.0h0M362.1 78.3h0M510.9 85.2h0M340.3 93.5h0M514.6 70.5h0M347.8 96.9h0M431.8 55.4h0M485.3 72.0h0M514.9 84.3h0M592.7 67.0h0M406.9 83.7h0M344.0 74.1h0M385.7 75.0h0M500.7 73.3h0M250.2 71.3h0M386.1 80.9h0M628.2 66.9h0M316.6 56.8h0M334.5 74.5h0M466.8 74.5h0M511.7 71.5h0M542.9 71.5h0M523.1 82.3h0M186.0 102.8h0M258.3 55.5h0M360.6 78.1h0M429.4 62.6h0M355.3 61.0h0M587.3 54.5h0M520.4 62.3h0M331.6 75.7h0M510.1 52.2h0M509.8 58.9h0M481.5 85.6h0M540.6 76.1h0M370.0 66.4h0M286.7 76.8h0M376.1 93.6h0M547.3 70.8h0M550.7 52.8h0M202.4 112.3h0M595.2 92.9h0M456.2 91.2h0M499.4 79.1h0M351.5 76.8h0M342.3 85.7h0M465.6 77.8h0M408.9 72.1h0M368.8 88.4h0M547.2 90.2h0M388.6 72.7h0M311.0 55.7h0M331.1 78.3h0M477.5 76.3h0M479.3 86.2h0M150.7 168.3h0M195.1 62.6h0M530.1 88.9h0M377.7 76.9h0M583.5 84.0h0M569.8 81.3h0M554.7 71.8h0M556.3 90.1h0M200.0 114.2h0M321.8 86.6h0M413.2 80.7h0M579.1 77.5h0M406.4 89.6h0M500.0 79.1h0M543.7 83.8h0M492.8 79.8h0M494.9 88.5h0M628.5 78.8h0M451.9 66.5h0M395.7 64.4h0M397.8 57.3h0M303.4 85.9h0M362.3 88.1h0M411.2 74.0h0M579.5 57.5h0M534.9 84.3h0M485.3 91.8h0M465.5 69.9h0M328.1 60.9h0M372.2 85.4h0M563.5 84.7h0M456.6 93.5h0M387.6 86.7h0M447.1 81.5h0M543.3 72.8h0M591.1 64.3h0M339.0 56.9h0M285.6 84.4h0M542.4 58.3h0M538.4 71.4h0M538.3 83.8h0M542.6 59.8h0M579.5 72.0h0M500.6 76.5h0M401.8 85.8h0M201.4 112.1h0M357.9 79.9h0M633.2 74.0h0M470.1 85.4h0M305.7 71.6h0M458.8 52.5h0M536.6 55.8h0M426.2 81.4h0M335.9 88.1h0M325.6 68.9h0M412.3 80.1h0M517.1 66.8h0M475.2 58.3h0M516.5 87.0h0M272.8 61.5h0M310.3 79.6h0M562.0 94.5h0M455.7 91.1h0M351.4 74.1h0M467.7 56.6h0M390.8 95.6h0M597.4 70.5h0M268.2 86.0h0M502.7 89.4h0M289.2 86.2h0M510.9 89.3h0M510.1 83.2h0M329.1 74.1h0M431.4 55.1h0M403.3 83.1h0M664.7 180.1h0M306.1 89.2h0M508.8 60.0h0M540.7 76.6h0M366.6 73.8h0M184.8 145.9h0M336.0 63.5h0M578.6 67.8h0M324.9 81.5h0M372.3 84.0h0M451.2 65.3h0M442.4 76.9h0M335.6 91.4h0M503.0 76.1h0M443.6 56.8h0M507.6 80.6h0M591.2 75.0h0M305.7 62.2h0M191.5 112.6h0M250.6 61.8h0M472.1 56.2h0M365.9 54.5h0M593.7 71.8h0M579.8 89.6h0M509.2 82.5h0M518.1 82.5h0M147.9 86.2h0M642.4 76.1h0M574.5 68.9h0M392.1 93.1h0M566.6 54.7h0M395.7 80.7h0M351.8 74.7h0M313.1 86.0h0M301.2 93.7h0M295.9 87.3h0M430.2 92.3h0M344.5 74.7h0M556.1 53.3h0M481.0 86.9h0M692.2 120.4h0M562.5 72.6h0M526.3 91.6h0M341.8 70.8h0M610.7 71.9h0M373.6 92.6h0M593.8 56.4h0M294.0 75.0h0M308.8 92.3h0M552.1 85.5h0M367.6 86.9h0M397.0 63.5h0M425.6 93.7h0M343.3 74.4h0M316.7 81.5h0M329.5 82.2h0M516.9 95.0h0M285.1 81.3h0M472.1 64.5h0M326.4 61.1h0M543.2 86.5h0M388.6 74.4h0M293.7 73.9h0M418.7 51.9h0M534.7 84.0h0M142.6 99.3h0M432.7 77.7h0M411.8 52.4h0M560.2 79.1h0M546.7 81.3h0M177.3 140.8h0M341.5 81.4h0M533.6 64.4h0M428.4 72.7h0M495.9 96.4h0M350.9 68.6h0M399.9 70.7h0M518.9 77.7h0M429.3 75.3h0M425.5 80.1h0M600.7 54.5h0M427.5 66.2h0M191.4 130.3h0M366.3 86.0h0M370.3 90.0h0M523.2 72.4h0M259.4 66.2h0M339.9 72.4h0M374.7 68.8h0M488.1 85.3h0M319.5 82.9h0M602.8 91.5h0M399.3 81.8h0M530.3 83.6h0M388.7 74.2h0M291.5 59.4h0M321.6 82.0h0M419.6 65.3h0M528.9 69.3h0M351.1 95.5h0M194.5 113.2h0M435.8 79.0h0M650.7 73.2h0M507.9 67.5h0M166.5 174.0h0M681.1 118.8h0M487.1 91.0h0M464.4 78.1h0M468.8 90.6h0M298.7 92.3h0M332.1 66.0h0M398.1 86.2h0M192.4 114.8h0M288.2 92.7h0M670.3 121.8h0M577.0 71.6h0M327.7 80.9h0M582.5 71.4h0M471.4 59.0h0M299.4 75.5h0M309.7 85.7h0" stroke="#a89654" stroke-opacity="0.5" stroke-width="0.7" stroke-linecap="round"/><path d="M360.3 77.4h0M491.9 77.3h0M428.9 57.5h0M452.9 78.1h0M565.9 64.7h0M429.7 95.5h0M687.5 59.3h0M373.3 81.9h0M500.9 57.0h0M446.4 61.6h0M403.7 74.7h0M173.5 64.3h0M547.8 53.4h0M320.1 70.5h0M638.5 55.5h0M414.4 87.7h0M519.0 72.2h0M510.7 79.2h0M485.7 87.7h0M389.1 77.9h0M227.5 68.0h0M629.5 70.7h0M235.7 90.3h0M387.0 94.2h0M349.0 72.3h0M579.4 63.7h0M357.0 67.7h0M326.1 85.7h0M320.3 62.2h0M563.1 61.6h0M514.6 96.0h0M502.4 73.7h0M417.6 68.4h0M686.2 165.7h0M326.2 80.5h0M412.2 67.4h0M519.9 87.1h0M456.4 86.8h0M378.3 78.3h0M386.9 90.7h0M459.9 75.6h0M520.7 81.5h0M486.5 77.8h0M513.9 91.7h0M452.9 54.7h0M691.4 170.5h0M580.7 60.6h0M474.5 81.9h0M313.3 92.6h0M382.4 76.3h0M475.6 95.9h0M532.1 68.4h0M552.3 79.6h0M474.6 93.7h0M161.2 73.5h0M352.4 69.7h0M516.4 89.0h0M287.9 80.0h0M519.0 64.2h0M410.6 64.5h0M508.1 88.0h0M455.1 67.3h0M479.7 92.9h0M535.9 74.3h0M541.6 58.4h0M333.7 88.3h0M527.1 73.3h0M461.4 95.7h0M442.3 94.1h0M472.4 90.7h0M513.9 87.2h0M507.0 78.6h0M296.9 86.0h0M399.6 72.9h0M484.4 67.4h0M310.4 66.8h0M700.2 57.7h0M423.2 77.3h0M367.4 68.5h0M391.5 85.1h0M528.5 67.4h0M583.9 80.0h0M330.9 74.6h0M571.7 67.1h0M170.5 68.3h0M346.8 80.1h0M369.6 65.5h0M403.7 82.9h0M367.9 88.7h0M333.8 81.1h0M429.0 91.7h0M498.8 77.6h0M361.0 88.4h0M392.7 58.8h0M312.1 57.7h0M357.7 86.4h0M499.4 81.9h0M470.4 53.5h0M329.6 67.9h0M486.5 79.7h0M414.2 77.8h0M439.4 89.6h0M191.0 74.5h0M655.5 80.5h0M242.3 81.9h0M162.0 50.8h0M287.4 94.4h0M531.1 73.6h0M425.4 93.5h0M360.5 77.7h0M252.1 51.5h0M332.9 93.7h0M480.4 85.2h0M202.2 120.6h0M262.9 90.5h0M154.0 111.9h0M298.2 81.1h0M585.2 92.6h0M424.9 93.2h0M309.2 94.6h0M586.4 56.9h0M508.7 89.5h0M203.4 117.8h0M220.2 62.6h0M280.9 95.0h0M617.6 80.6h0M524.0 88.0h0M548.7 59.5h0M506.9 71.1h0M304.0 91.6h0M430.8 57.7h0M611.4 67.1h0M505.3 64.8h0M417.1 73.8h0M582.7 68.8h0M573.3 64.2h0M586.3 57.4h0M490.9 95.4h0M463.1 71.4h0M420.1 87.6h0M390.9 85.3h0M445.6 76.4h0M604.5 74.3h0M441.1 82.1h0M501.4 76.3h0M386.6 70.5h0M275.3 88.9h0M371.3 75.5h0M387.7 93.2h0M323.7 67.7h0M343.6 89.1h0M548.1 81.4h0M368.2 85.3h0M626.7 75.5h0M590.6 58.7h0M299.2 72.6h0M341.7 62.8h0M430.1 63.5h0M464.0 96.0h0M318.9 86.5h0M380.7 68.6h0M366.6 57.5h0M478.8 82.6h0M263.4 85.1h0M374.7 94.3h0M567.0 57.9h0M393.9 54.5h0M653.9 86.9h0M532.7 64.2h0M513.0 63.4h0M401.6 83.5h0M608.5 77.1h0M502.1 67.9h0M552.0 91.7h0M492.1 54.5h0M508.0 73.3h0M565.6 52.4h0M356.5 54.3h0M250.9 62.1h0M374.9 72.4h0M482.6 75.8h0M410.3 67.3h0M190.2 75.6h0M395.3 57.4h0M258.5 72.1h0M615.2 63.6h0M394.7 66.6h0M521.3 94.0h0M585.1 95.1h0M362.2 67.9h0M302.6 72.3h0M320.1 74.6h0M686.5 84.4h0M558.4 92.4h0M340.3 82.0h0M496.5 78.8h0M368.9 87.0h0M678.2 61.4h0M212.8 59.3h0M354.5 72.7h0M163.2 123.7h0M527.2 85.0h0M380.5 63.9h0M619.7 86.2h0M551.2 77.6h0M234.1 66.0h0M403.0 75.4h0M370.7 90.2h0M311.5 60.1h0M332.0 83.7h0M226.2 52.6h0M467.1 51.7h0M407.2 80.6h0M385.2 71.9h0M472.8 66.3h0M444.2 92.0h0M569.0 69.3h0M599.5 67.2h0M414.7 58.7h0M663.0 71.1h0M472.3 60.7h0M414.4 85.5h0M541.0 75.5h0M416.4 96.3h0M508.2 96.4h0M398.7 77.0h0M361.5 65.2h0M409.1 67.4h0M412.6 95.0h0M414.1 77.2h0M369.8 63.2h0M589.9 59.6h0M349.2 94.9h0M555.9 83.4h0M471.7 83.3h0M518.8 90.4h0M553.4 73.5h0M595.5 88.8h0M326.6 88.3h0M575.6 67.8h0M375.5 61.7h0M493.3 79.5h0M483.7 71.3h0M639.7 62.8h0M380.9 58.2h0M266.8 59.4h0M513.6 67.8h0M432.8 83.6h0M317.0 68.8h0M398.3 61.3h0M294.3 62.2h0M509.0 54.6h0M490.8 81.4h0M348.6 89.8h0M536.4 76.0h0M568.8 94.0h0M505.6 84.2h0M155.3 168.6h0M567.1 67.0h0M358.0 55.8h0M156.0 66.0h0M431.7 51.0h0M666.1 72.6h0M437.8 51.1h0M389.8 85.2h0M468.2 83.0h0M373.2 86.4h0M351.3 73.2h0M248.3 72.2h0M516.3 68.7h0M336.4 82.1h0M343.6 70.8h0M516.2 96.2h0M484.0 81.4h0M558.6 71.7h0M509.3 90.6h0M518.3 54.5h0M571.8 69.8h0M510.5 95.2h0M401.0 87.8h0M418.6 72.4h0M419.1 91.5h0M512.1 71.3h0M174.1 140.5h0M301.5 81.3h0M510.7 86.0h0M339.1 71.2h0M360.9 83.9h0M523.0 84.8h0M646.0 67.0h0M261.4 84.0h0M314.3 76.9h0M432.3 62.4h0M403.7 79.9h0M391.7 61.1h0M351.2 86.1h0M489.1 59.1h0M583.8 76.8h0M630.5 54.3h0M450.2 94.2h0M348.2 60.4h0M549.9 70.7h0M675.7 130.9h0M488.9 85.8h0M381.1 62.4h0M578.1 59.4h0M304.6 77.4h0M581.1 65.1h0M389.7 87.7h0M491.6 84.9h0M332.1 61.0h0M345.4 66.9h0M207.0 72.3h0M554.9 52.2h0M531.8 64.9h0M345.1 94.5h0M334.0 87.0h0M531.3 87.1h0M594.1 57.8h0M513.3 67.3h0M526.3 69.5h0M433.4 66.5h0M471.2 73.7h0M281.3 75.0h0M372.8 96.1h0M448.1 87.7h0M483.9 55.5h0M347.8 69.7h0M170.1 148.2h0M304.0 81.0h0M451.6 95.8h0M388.2 71.6h0M532.4 77.0h0M337.1 70.1h0M572.8 92.9h0M177.2 65.2h0M301.5 92.7h0M552.6 67.8h0M518.4 67.8h0M216.5 61.8h0M499.6 57.9h0M384.6 89.9h0M532.1 70.3h0M412.7 63.0h0M497.4 81.1h0M141.0 122.7h0M274.7 67.8h0M169.9 74.8h0M572.0 71.3h0M502.2 78.6h0M575.1 68.3h0M513.4 64.1h0M290.9 76.1h0M218.0 63.5h0M500.5 66.8h0M208.6 83.8h0M252.4 61.2h0M469.0 88.5h0M316.0 78.1h0M538.7 87.2h0M568.4 74.8h0M503.2 91.2h0M470.9 71.1h0M333.2 67.1h0M526.3 69.1h0M176.8 117.8h0M518.0 53.4h0M168.1 51.9h0M441.0 88.2h0M686.7 56.0h0M486.4 72.5h0M481.8 82.4h0M431.4 82.8h0M520.1 66.7h0M538.3 63.2h0M562.5 79.2h0M509.3 94.6h0M422.9 93.1h0M538.5 80.3h0M510.6 75.2h0M454.8 68.9h0M528.4 50.9h0M531.9 74.3h0M567.3 69.9h0M415.1 76.1h0M182.0 82.5h0M493.3 87.2h0M414.8 72.2h0M530.9 76.0h0M412.4 96.1h0M589.6 72.5h0M451.2 80.0h0M378.1 56.8h0M519.2 96.6h0M493.5 73.7h0M476.5 79.8h0M231.5 75.5h0M479.0 73.2h0M380.9 73.7h0M317.6 66.5h0M402.1 66.9h0M542.7 59.0h0M430.4 93.4h0M205.5 152.3h0M388.3 94.8h0M679.0 70.1h0M427.6 71.1h0M364.1 61.5h0M542.0 54.8h0M450.4 61.4h0M336.1 52.1h0M392.4 58.4h0M320.0 73.0h0M296.1 81.9h0M574.8 58.8h0M153.1 112.0h0M401.6 68.2h0M442.8 86.5h0M577.8 62.9h0M580.1 88.5h0M427.7 72.4h0M432.5 81.1h0M309.5 90.7h0M569.5 80.9h0M471.3 60.8h0M519.2 70.4h0M200.0 85.8h0M590.5 77.9h0M339.1 86.0h0M478.7 82.1h0M164.9 102.0h0M677.5 57.3h0M557.4 58.8h0M534.9 68.6h0M541.0 92.1h0M502.3 83.8h0M353.4 65.2h0M431.8 88.2h0M335.2 88.7h0M503.3 86.1h0M486.8 76.3h0M396.7 74.5h0M334.6 81.2h0M559.8 80.5h0M421.4 92.5h0M457.8 87.1h0M373.1 71.6h0M204.3 74.4h0M581.3 72.0h0M504.2 91.8h0M559.4 93.3h0M507.6 73.3h0M421.7 93.5h0M440.1 68.6h0M351.8 91.5h0M543.3 70.4h0M327.1 71.7h0M385.4 86.5h0M310.7 94.9h0M314.2 68.8h0M564.5 93.4h0M164.6 64.5h0M576.1 80.1h0M530.7 82.4h0M452.6 95.5h0M528.9 59.1h0M562.4 69.7h0M313.7 67.8h0M569.6 64.4h0M340.0 65.1h0M539.8 88.8h0M288.2 63.1h0M446.2 91.1h0M540.6 70.6h0M535.9 70.2h0M154.6 120.9h0M343.7 63.5h0M439.9 96.2h0M329.7 91.1h0M532.5 71.1h0M542.7 85.7h0M361.8 82.2h0M648.3 75.9h0M410.1 88.1h0M540.2 69.7h0M667.1 59.9h0M511.2 89.4h0M531.7 76.7h0M327.7 65.7h0M501.8 56.5h0M488.7 89.0h0M198.4 63.1h0M357.8 93.5h0M338.8 78.6h0M521.3 71.0h0M558.6 74.4h0M345.3 90.7h0M200.3 90.1h0M637.2 82.5h0M507.6 68.0h0M400.1 76.0h0M590.6 60.5h0M353.8 80.6h0M516.0 59.8h0M381.5 84.2h0M560.4 67.9h0M378.2 93.2h0M564.1 76.5h0M533.7 91.0h0M518.7 59.9h0M538.7 70.7h0M506.1 83.2h0M580.8 69.5h0M355.6 65.4h0M585.9 65.5h0M162.0 73.3h0M541.8 69.8h0M523.5 87.1h0M298.4 81.4h0M280.6 85.0h0M563.3 50.8h0M601.4 68.7h0M336.2 61.6h0M355.9 94.5h0M371.7 77.1h0M609.8 53.6h0M286.8 75.4h0M487.1 96.7h0M516.2 75.7h0M407.9 87.5h0M486.3 81.0h0M522.0 96.9h0M567.2 60.6h0M345.8 83.7h0M529.2 72.9h0M499.1 89.4h0M552.9 82.5h0M297.5 87.0h0M418.9 77.1h0M243.6 87.6h0M356.4 66.7h0M311.9 70.1h0M373.7 84.6h0M526.7 68.2h0M531.2 84.4h0M315.9 55.7h0M477.6 81.8h0M652.2 61.1h0M553.9 78.5h0M576.9 63.7h0M493.0 93.8h0M519.0 78.1h0M536.4 72.1h0M495.6 76.3h0M179.2 97.7h0M637.8 69.5h0M392.1 76.0h0M513.5 76.4h0M275.8 83.5h0M516.8 93.0h0M694.8 125.2h0M522.4 67.6h0M378.8 82.0h0M326.5 68.9h0M550.1 70.3h0M467.9 87.9h0M363.5 75.1h0M679.5 77.5h0M349.4 89.0h0M362.4 79.0h0M578.0 60.2h0M522.6 67.5h0M487.4 88.4h0M314.1 65.6h0M379.6 64.3h0M554.0 74.9h0M573.7 84.4h0M376.2 64.0h0M196.1 150.1h0M412.1 86.0h0M308.1 74.0h0M290.1 88.6h0M597.7 67.6h0M383.3 94.0h0M407.4 93.8h0M529.5 95.8h0M439.3 90.7h0M464.2 56.5h0M345.6 64.4h0M495.7 87.4h0M177.8 130.7h0M371.4 75.6h0M439.0 84.5h0M308.2 83.3h0M623.6 67.0h0M197.0 106.7h0M549.6 72.1h0M641.1 58.5h0M323.5 82.6h0M395.0 64.5h0M159.2 118.9h0M560.5 69.6h0M579.6 80.1h0M162.3 111.6h0M311.4 91.1h0M287.1 73.3h0M515.9 82.3h0M152.6 142.3h0M300.0 87.5h0M158.1 77.4h0M334.6 75.1h0M175.7 60.3h0M514.1 77.1h0M193.1 104.3h0M410.6 70.1h0M506.2 92.0h0M575.9 61.9h0M441.1 66.2h0M557.9 68.4h0M622.7 60.8h0M301.1 83.0h0M359.1 74.0h0M646.5 54.2h0M567.7 87.7h0M554.3 64.0h0M501.6 71.4h0M336.1 59.8h0M467.3 96.1h0M426.6 63.3h0M390.9 84.2h0M388.9 83.7h0M426.7 51.6h0M282.8 61.3h0M320.7 74.6h0M364.4 92.5h0M410.8 92.9h0M438.3 82.0h0M710.7 122.3h0M230.3 79.7h0M274.3 61.6h0M408.8 58.1h0M596.0 63.3h0M396.0 86.8h0M170.0 75.9h0M283.6 74.2h0M572.0 57.7h0M574.1 64.3h0M388.0 64.2h0M469.2 65.8h0M289.4 82.9h0M489.6 78.1h0M512.9 82.4h0M514.7 79.9h0M407.7 69.5h0M508.1 88.2h0M501.2 68.7h0M378.7 86.6h0M559.6 61.0h0M514.3 94.8h0M395.9 77.0h0M530.8 83.8h0M203.8 104.7h0M318.0 87.6h0M325.1 68.4h0M369.4 83.6h0M490.0 64.7h0M175.4 120.0h0M366.4 92.1h0M483.9 93.4h0M416.9 88.5h0M239.1 76.9h0M553.0 80.7h0M330.3 57.0h0M522.5 66.5h0M393.4 73.4h0M521.3 69.6h0M369.2 65.8h0M537.3 58.3h0M202.1 115.6h0M169.7 66.9h0M567.1 83.5h0M600.0 54.4h0M408.4 92.0h0M363.5 86.1h0M480.7 71.1h0M541.3 58.6h0M446.5 86.9h0M183.1 156.4h0M211.1 80.7h0M330.3 61.0h0M440.6 93.7h0M448.4 86.9h0M558.0 65.8h0M210.2 62.4h0M413.9 93.8h0M568.2 62.9h0M341.6 57.6h0M613.1 51.1h0M467.0 81.1h0M315.9 76.4h0M287.4 96.1h0M353.7 94.3h0M503.1 95.1h0M479.4 85.0h0M511.2 72.2h0M615.1 59.9h0M470.4 85.3h0M244.3 64.5h0M174.4 87.9h0M512.5 67.5h0M571.6 66.4h0M529.7 70.5h0M525.5 62.1h0M410.7 71.1h0M384.7 82.3h0M477.2 81.0h0M216.8 72.3h0M174.4 60.4h0M501.0 88.1h0M660.5 79.8h0M610.9 60.7h0M416.5 87.5h0M580.0 62.5h0M503.6 77.5h0M162.9 119.2h0M438.9 73.0h0M374.2 96.5h0M593.4 51.6h0M332.8 93.1h0M314.7 95.3h0M419.2 85.6h0M516.4 60.6h0M527.3 60.8h0M575.7 71.6h0M379.8 83.8h0M518.6 55.5h0M439.6 73.5h0M360.9 85.7h0M350.4 84.3h0M527.3 85.1h0M466.2 93.9h0M356.3 79.0h0M480.3 86.8h0M346.9 94.6h0M482.2 58.6h0M327.4 88.9h0M424.1 88.4h0M287.8 86.0h0M272.1 81.1h0M194.8 92.2h0M460.6 96.5h0M532.2 71.6h0M413.5 96.3h0M516.7 63.3h0M210.9 57.8h0M398.0 58.4h0M347.0 84.4h0M604.1 72.9h0M179.2 128.0h0M517.5 83.5h0M559.1 79.6h0M198.2 135.4h0M567.6 73.2h0M556.9 52.2h0M481.8 90.1h0M188.4 135.2h0M194.2 114.4h0M386.2 77.9h0M308.7 93.4h0M484.6 68.6h0M452.7 92.6h0M462.7 69.3h0M299.1 88.5h0M294.3 76.6h0M539.8 71.9h0M235.5 69.4h0M197.5 80.1h0M471.4 87.9h0M504.1 87.9h0M350.9 96.4h0M511.9 92.5h0M378.1 93.5h0M455.3 68.4h0M551.0 62.6h0M200.9 91.5h0M526.7 53.9h0M167.3 120.6h0M602.2 80.4h0M583.6 59.2h0M252.9 75.3h0M180.1 83.0h0M266.9 76.2h0M353.5 73.8h0M444.3 93.2h0M265.5 96.1h0M202.3 56.2h0M687.8 92.5h0M502.1 89.6h0M344.2 72.2h0M532.0 63.3h0M510.1 51.1h0M258.5 60.2h0M438.7 87.2h0M405.5 81.3h0M616.4 84.9h0M166.2 112.2h0M163.6 91.5h0M455.8 87.7h0M406.7 92.4h0M477.2 96.5h0M560.8 55.9h0M329.6 94.6h0M427.5 59.1h0M438.2 93.2h0M532.7 79.3h0M644.6 76.8h0M372.8 62.6h0M386.4 78.0h0M393.0 94.9h0" stroke="#a89654" stroke-opacity="0.25" stroke-width="0.7" stroke-linecap="round"/><path d="M380.5 88.0h0M540.2 58.9h0M479.0 88.4h0M567.1 85.3h0M431.5 71.8h0M531.9 70.9h0M309.8 71.2h0M432.9 94.0h0M371.4 67.2h0M551.4 53.9h0M470.1 95.3h0M488.3 93.0h0M370.0 91.8h0M411.0 93.1h0M587.5 58.6h0M543.0 65.3h0M442.3 82.6h0M658.7 58.6h0M316.1 74.2h0M211.0 72.2h0M548.4 73.1h0M139.1 105.0h0M279.6 84.9h0M483.7 90.6h0M428.9 69.2h0M540.4 66.2h0M173.2 82.6h0M478.1 80.8h0M445.8 94.4h0M565.4 75.8h0M272.1 54.9h0M378.3 87.1h0M467.9 93.8h0M520.0 86.2h0M675.4 76.9h0M541.2 80.6h0M577.3 77.0h0M474.6 69.9h0M481.4 69.5h0M580.4 58.4h0M549.0 60.6h0M345.5 82.3h0M487.3 54.5h0M192.2 88.5h0M596.6 53.6h0M447.5 77.3h0M286.4 76.5h0M511.6 64.9h0M439.9 92.8h0M345.1 93.5h0M388.4 84.5h0M466.0 85.9h0M525.1 95.4h0M332.5 81.6h0M202.4 99.4h0M469.8 60.9h0M358.0 71.9h0M526.9 78.1h0M282.4 69.4h0M377.3 66.9h0M341.3 71.9h0M306.6 71.0h0M337.3 93.2h0M610.5 51.2h0M189.7 81.5h0M356.2 68.1h0M532.6 86.4h0M598.1 87.7h0M541.9 79.9h0M327.1 77.9h0M333.5 65.9h0M165.9 80.2h0M414.4 56.9h0M308.1 68.8h0M552.3 52.5h0M389.3 77.7h0M362.4 63.6h0M537.1 70.0h0M392.0 79.8h0M458.4 90.6h0M320.5 78.0h0M587.7 58.5h0M625.9 78.2h0M351.0 85.4h0M244.6 83.9h0M161.2 109.0h0M561.8 82.9h0M445.0 80.1h0M333.8 77.0h0M314.5 81.1h0M218.0 60.7h0M300.3 96.9h0M450.7 91.7h0M417.8 75.2h0M297.5 89.5h0M154.1 51.8h0M237.4 58.3h0M439.5 85.4h0M470.6 70.9h0M482.5 59.6h0M337.3 89.3h0M377.9 65.7h0M350.1 60.2h0M344.8 84.0h0M406.8 61.0h0M536.1 63.5h0M538.3 53.4h0M372.8 73.0h0M290.4 88.9h0M210.1 69.4h0M567.2 66.4h0M333.9 88.2h0M290.2 79.4h0M140.6 131.5h0M186.7 93.7h0M195.3 87.3h0M546.2 60.4h0M658.3 73.6h0M560.5 73.8h0M407.9 96.8h0M413.6 88.0h0M520.1 74.0h0M385.9 80.4h0M397.1 76.9h0M531.7 70.3h0M477.7 90.3h0M492.0 82.1h0M588.2 66.3h0M379.4 70.2h0M384.1 75.9h0M440.8 84.8h0M454.4 84.9h0M331.0 79.2h0M528.2 82.3h0M398.2 93.6h0M285.5 62.3h0M161.1 118.4h0M348.9 77.8h0M490.5 66.2h0M520.1 58.9h0M354.0 76.0h0M522.2 72.5h0M196.6 62.6h0M438.3 89.4h0M424.0 72.8h0M511.9 74.1h0M351.6 95.3h0M329.6 75.4h0M175.3 76.8h0M429.0 54.2h0M481.3 67.2h0M359.2 69.4h0M420.7 84.6h0M470.6 92.6h0M541.7 59.4h0M354.2 95.3h0M365.6 75.1h0M480.8 84.1h0M378.8 70.0h0M350.3 86.2h0M534.4 51.9h0M325.5 95.9h0M460.4 91.8h0M336.7 82.8h0M442.7 66.8h0M263.8 89.8h0M506.7 69.9h0M359.3 94.5h0M348.9 55.8h0M390.5 71.5h0M530.8 64.0h0M437.6 63.8h0M285.1 70.4h0M189.5 124.1h0M577.3 74.2h0M433.8 66.2h0M498.8 79.1h0M425.7 54.2h0M258.7 75.5h0M533.1 68.0h0M606.2 53.6h0M506.5 97.0h0M358.2 90.7h0M640.6 83.7h0M387.1 73.6h0M352.5 70.7h0M424.0 53.5h0M316.0 74.8h0M371.5 53.6h0M403.7 76.7h0M506.8 77.2h0M597.8 96.9h0M438.9 67.9h0M580.4 63.7h0M605.2 69.6h0M489.1 74.9h0M451.2 94.7h0M564.9 75.8h0M299.8 88.1h0M574.2 59.8h0M583.3 65.6h0M472.9 83.9h0M602.7 81.3h0M433.9 88.7h0M266.5 67.9h0M419.0 67.2h0M318.5 83.0h0M609.4 56.3h0M484.5 89.0h0M383.8 85.5h0M529.2 65.6h0M584.3 60.7h0M492.3 93.1h0M489.6 88.9h0M322.3 77.8h0M525.5 80.2h0M443.2 96.2h0M276.5 82.5h0M371.3 67.7h0M375.8 94.0h0M195.0 101.1h0M301.8 84.3h0M415.6 96.8h0M526.8 60.5h0M413.7 94.7h0M570.8 60.3h0M466.1 71.8h0M387.0 89.6h0M400.4 73.5h0M345.4 56.7h0M303.7 75.2h0M578.1 55.1h0M293.4 95.8h0M597.9 60.2h0M282.8 74.6h0M157.1 62.4h0M558.9 59.1h0M392.0 60.3h0M355.3 73.1h0M571.2 82.3h0M700.6 86.8h0M554.5 73.2h0M545.8 89.2h0M441.8 77.2h0M588.6 66.8h0M154.6 90.2h0M364.6 71.5h0M266.7 91.9h0M601.0 64.9h0M357.2 85.3h0M180.7 114.6h0M414.8 94.4h0M298.3 90.3h0M187.7 96.7h0M303.6 79.8h0M316.8 76.6h0M294.1 80.4h0M406.7 88.6h0M191.6 113.4h0M505.0 68.0h0M496.0 83.6h0M432.6 54.7h0M389.3 76.4h0M467.5 95.0h0M336.0 66.6h0M375.5 83.2h0M563.1 84.2h0M335.6 81.9h0M489.6 86.9h0M163.5 82.1h0M551.3 71.5h0M191.2 143.1h0M306.1 88.1h0M300.7 82.9h0M266.4 86.1h0M404.6 94.5h0M383.9 52.1h0M412.8 90.8h0M395.7 87.1h0M636.4 51.4h0M352.4 94.3h0M159.6 81.3h0M547.7 66.6h0M467.6 51.6h0M332.2 51.6h0M346.2 93.2h0M500.0 62.8h0M503.8 67.5h0M430.9 61.0h0M410.9 62.7h0M301.4 94.5h0M317.6 51.6h0M157.2 85.3h0M352.2 63.3h0M302.9 90.4h0M305.1 53.7h0M231.7 89.6h0M313.4 91.1h0M452.5 88.9h0M357.8 70.4h0M312.2 77.4h0M538.2 88.0h0M539.9 85.9h0M526.0 71.9h0M180.4 104.9h0M278.8 62.6h0M402.6 70.3h0M518.3 91.5h0M194.8 72.7h0M320.5 73.1h0M470.9 81.8h0M455.1 65.9h0M404.6 64.8h0M349.0 56.3h0M447.5 88.0h0M561.9 52.9h0M409.7 65.9h0M403.1 96.2h0M436.8 76.2h0M403.1 55.9h0M296.5 82.6h0M410.9 60.5h0M337.7 64.0h0M567.7 74.9h0M381.4 65.4h0M338.7 90.8h0M206.2 65.2h0M599.7 61.1h0M439.6 91.3h0M333.0 55.1h0M575.0 61.7h0M505.6 82.9h0M277.4 75.2h0M302.3 67.8h0M539.6 78.0h0M310.0 73.6h0M447.1 87.8h0M326.5 78.4h0M186.7 114.8h0M400.5 72.8h0M327.4 91.2h0M633.3 60.1h0M379.8 68.4h0M373.5 86.1h0M473.4 71.6h0M388.4 87.7h0M463.0 77.2h0M418.3 56.2h0M422.6 75.1h0M505.2 83.7h0M342.5 83.8h0M478.1 87.6h0M447.6 53.4h0M595.7 68.1h0M393.2 82.2h0M279.4 86.8h0M498.3 61.1h0M558.1 60.7h0M436.4 66.3h0M493.8 83.9h0M394.4 72.8h0M297.6 79.2h0M539.7 81.9h0M362.0 76.3h0M421.8 71.6h0M581.1 61.3h0M549.2 89.2h0M544.0 66.9h0M421.9 90.7h0M547.1 93.9h0M465.4 66.6h0M216.8 52.8h0M355.6 88.3h0M182.2 92.4h0M312.8 71.9h0M587.8 90.8h0M421.0 84.9h0M410.8 70.0h0M700.1 97.6h0M366.5 80.9h0M465.2 61.1h0M537.9 69.9h0M514.8 91.1h0M299.1 82.1h0M576.5 62.7h0M364.6 76.1h0M670.2 55.9h0M178.1 97.6h0M369.6 69.2h0M439.1 57.7h0M496.5 81.3h0M528.7 96.3h0M401.7 70.4h0M505.7 91.6h0M217.0 69.9h0M377.4 69.8h0M454.7 72.9h0M388.1 70.6h0M408.6 68.6h0M565.3 69.4h0M522.0 71.1h0M404.1 79.1h0M332.7 79.0h0M526.0 80.7h0M319.8 78.6h0M301.8 91.8h0M486.0 94.8h0M330.4 56.6h0M499.3 82.3h0M332.2 81.8h0M510.0 90.5h0M391.7 70.5h0M540.7 52.9h0M372.9 69.2h0M571.8 54.2h0M520.8 85.2h0M381.8 88.5h0M523.2 87.8h0M334.3 78.8h0M526.2 59.6h0M536.2 77.6h0M497.5 90.8h0M502.7 96.0h0M305.2 78.6h0M512.4 87.6h0M541.9 87.6h0M433.5 62.4h0M513.6 92.8h0M595.8 69.4h0M443.4 88.3h0M369.1 93.9h0M557.8 80.3h0M328.7 85.1h0M465.7 87.7h0M202.0 126.8h0M375.3 80.6h0M219.7 65.6h0M548.9 72.6h0M524.8 75.9h0M490.9 77.1h0M547.5 77.5h0M545.2 55.1h0M166.3 106.8h0M471.0 54.4h0M575.8 66.6h0M170.4 99.1h0M320.9 95.4h0M421.3 74.4h0M571.8 67.0h0M432.6 66.4h0M317.0 96.2h0M366.3 62.8h0M264.0 74.7h0M387.2 85.6h0M236.4 83.2h0M582.1 79.5h0M204.5 90.0h0M375.6 73.0h0M489.6 57.1h0M334.5 66.5h0M205.7 154.7h0M390.0 72.4h0M508.9 91.0h0M210.0 96.2h0M299.4 90.9h0M307.6 83.8h0M362.2 95.9h0M243.9 88.2h0M512.3 87.3h0M422.9 79.7h0M436.6 83.6h0M464.3 61.0h0M491.3 86.6h0M359.3 78.1h0M526.9 84.7h0M458.4 87.8h0M297.7 83.9h0M368.8 64.5h0M296.9 77.8h0M314.0 80.7h0M478.9 59.2h0M462.0 57.8h0M498.6 87.6h0M527.0 93.0h0M369.5 87.1h0M287.5 86.2h0M236.5 72.5h0M523.2 60.7h0M159.1 136.2h0M622.5 63.6h0M371.8 82.6h0M282.6 62.6h0M388.0 75.1h0M589.3 55.4h0M605.0 54.8h0M472.1 77.7h0M501.6 88.9h0M202.9 54.7h0M531.1 55.8h0M431.9 91.6h0M484.6 79.8h0M597.8 77.5h0M504.7 76.0h0M430.3 78.0h0M290.2 80.7h0M411.4 58.5h0M622.5 84.0h0M490.7 81.3h0M502.9 93.0h0M352.9 63.8h0M532.6 64.8h0M364.9 60.3h0M343.7 75.5h0M210.2 72.9h0M474.0 71.9h0M278.7 94.3h0M185.0 129.0h0M434.6 83.9h0M586.6 56.8h0M479.6 79.2h0M393.4 91.0h0M536.3 69.2h0M536.6 76.9h0M342.4 63.4h0M526.7 76.4h0M323.9 86.9h0M376.5 95.7h0M344.5 86.3h0M305.7 94.7h0M385.4 80.2h0M597.6 59.6h0M310.3 80.2h0M461.8 83.5h0M371.7 64.1h0M572.4 56.7h0M512.0 84.9h0M525.6 67.2h0M316.1 81.8h0M585.3 60.2h0M307.2 85.2h0M300.5 55.6h0M521.0 65.2h0M277.2 76.6h0M434.0 84.2h0M653.8 67.9h0M469.3 66.3h0M452.5 95.9h0M386.5 86.2h0M584.3 83.3h0M282.3 84.3h0M539.9 90.3h0M332.5 71.7h0M518.2 76.2h0M371.8 79.0h0M361.2 72.4h0M240.7 94.2h0M506.5 96.9h0M480.5 92.8h0M530.8 61.5h0M591.1 77.1h0M431.9 87.6h0M385.4 89.3h0M140.4 74.9h0M395.0 53.2h0M400.0 63.4h0M583.4 72.5h0M492.0 85.3h0M398.8 74.3h0M483.8 76.2h0M425.4 84.3h0M175.9 81.6h0M580.9 58.2h0M479.1 55.2h0M317.0 76.4h0M284.5 82.1h0M593.0 80.2h0M398.6 87.0h0M387.9 70.4h0M368.4 68.7h0M574.9 56.4h0M203.1 91.1h0M306.2 72.7h0M528.7 75.9h0M525.0 66.0h0M248.5 74.0h0M482.9 60.1h0M386.3 63.7h0M545.5 71.7h0M382.8 83.9h0M440.5 86.3h0M552.7 59.9h0M550.8 79.1h0M374.6 64.9h0M342.1 69.0h0M395.7 88.4h0M418.3 63.7h0M410.6 61.0h0M536.4 62.2h0M561.4 51.4h0M205.1 95.1h0M143.2 132.9h0M318.4 71.9h0M466.2 72.1h0M399.9 73.1h0M442.4 93.4h0M251.3 66.1h0M304.9 90.1h0M278.7 74.9h0M529.7 74.1h0M340.5 77.9h0M474.2 82.1h0M317.0 84.8h0M547.2 66.7h0M196.1 175.8h0M306.8 89.3h0M408.1 74.0h0M304.2 82.0h0M552.3 66.1h0M559.5 64.8h0M390.2 61.6h0M453.2 84.8h0M461.9 76.7h0M275.6 78.4h0M345.2 89.0h0M169.9 136.2h0M352.4 68.7h0M272.6 96.6h0M377.2 81.1h0M591.0 95.4h0M403.7 91.7h0M495.9 88.8h0M562.9 66.1h0M200.4 135.8h0M314.0 53.5h0M642.2 76.1h0M394.0 70.9h0M374.1 65.1h0M363.9 76.8h0M547.1 86.0h0M483.2 56.3h0M330.9 91.3h0M509.7 69.5h0M425.1 65.6h0M331.2 88.3h0M594.5 78.5h0M464.9 95.3h0M502.0 69.6h0M297.1 72.2h0M342.4 94.4h0M556.6 64.2h0M305.4 93.4h0M506.1 61.5h0M167.7 93.6h0M522.5 83.1h0M557.3 62.0h0M493.7 74.9h0M376.3 77.5h0M362.5 69.6h0M174.3 89.6h0M343.0 88.3h0M499.3 83.7h0M452.4 87.5h0M463.8 88.2h0M684.5 143.7h0M368.3 92.1h0M287.6 95.3h0M388.3 67.6h0M423.3 72.1h0M356.1 79.2h0M288.2 91.7h0M518.3 73.3h0M687.3 112.8h0M467.3 85.0h0M380.7 80.3h0M396.5 93.8h0M625.5 59.7h0M513.9 82.2h0M345.4 64.1h0M530.1 65.4h0M451.6 82.5h0M300.5 60.4h0M368.8 70.9h0M473.0 82.2h0M314.0 86.0h0M334.3 65.4h0M516.9 76.2h0M408.5 86.7h0M378.8 85.1h0M310.4 76.8h0M444.3 92.1h0M555.1 57.5h0M530.7 69.8h0M476.0 88.5h0M465.1 91.5h0M384.8 96.5h0M331.2 76.9h0M302.3 79.9h0M278.0 88.7h0M584.5 72.7h0M522.4 84.4h0M166.8 118.6h0M419.1 68.2h0M593.8 82.3h0M425.0 77.9h0M406.2 65.3h0M507.0 88.0h0M591.2 73.3h0M195.2 121.9h0M387.5 65.4h0M524.0 70.4h0M167.0 161.5h0M597.9 53.2h0M510.8 89.8h0M464.4 69.7h0M321.8 76.7h0M337.3 84.6h0M155.7 54.1h0M470.7 84.7h0M227.3 64.6h0M352.2 94.2h0M374.4 82.9h0M338.2 76.6h0M453.4 96.3h0M473.8 51.7h0M411.8 58.5h0M470.1 96.7h0M600.7 80.5h0M402.6 66.5h0M522.5 87.2h0M567.7 88.6h0M523.1 80.7h0M176.6 142.1h0M195.2 150.3h0M508.9 79.6h0M287.6 95.4h0M552.5 71.2h0M203.7 130.6h0M415.9 55.3h0M409.4 84.5h0M447.8 83.3h0M483.0 85.9h0M340.7 87.2h0M483.2 88.5h0M502.9 87.1h0M554.3 52.5h0M319.5 83.9h0M514.3 70.4h0M412.7 92.9h0M536.8 72.2h0M344.7 65.3h0M461.7 95.2h0M548.9 92.5h0M382.1 89.1h0M484.5 89.2h0M544.8 57.1h0M380.0 59.1h0M287.8 92.7h0M325.5 70.2h0M455.9 78.6h0M359.8 84.5h0M410.7 93.6h0M605.9 82.7h0M620.4 83.0h0M531.3 54.4h0M494.2 72.7h0M541.9 80.5h0M383.7 84.3h0M370.1 82.9h0M357.8 94.1h0M420.9 93.2h0M167.8 77.1h0M170.4 92.7h0M286.0 91.2h0M301.4 90.2h0M266.8 94.7h0M424.4 91.4h0M333.8 91.7h0M352.5 59.4h0M387.3 79.1h0M202.6 59.7h0M444.8 89.7h0M563.2 74.9h0M481.0 73.9h0M329.0 61.9h0M339.2 95.0h0M349.8 69.1h0M479.0 94.3h0M397.3 83.9h0M342.5 85.2h0M429.5 79.6h0M427.1 81.1h0M598.4 68.9h0M668.1 51.6h0M355.8 84.3h0M381.0 61.2h0M583.2 54.4h0M423.7 78.7h0M333.6 70.0h0M536.0 87.5h0M139.9 95.8h0M541.6 70.0h0M464.8 95.9h0M591.2 59.6h0M400.0 70.1h0M580.1 66.6h0M358.5 57.7h0M326.0 93.1h0M488.0 68.5h0M446.6 64.8h0M583.0 55.2h0M345.1 59.7h0M369.1 86.7h0M625.7 92.8h0M271.1 88.8h0M551.6 85.4h0M484.7 96.5h0M416.5 61.9h0M569.2 66.6h0M422.7 68.0h0M341.5 78.3h0M579.8 67.4h0M469.6 73.2h0M277.3 89.7h0M372.6 81.3h0M656.4 76.7h0M563.4 59.1h0M475.3 94.8h0M390.6 90.8h0M536.9 54.7h0M547.1 69.9h0M379.8 70.3h0M510.6 66.0h0M226.3 69.4h0M284.3 74.4h0M556.0 68.5h0M609.7 51.6h0M341.5 82.0h0M523.3 73.6h0M588.6 85.5h0M181.6 144.8h0M346.0 94.4h0M405.2 93.3h0M527.4 69.6h0M485.8 70.9h0M402.7 92.1h0M514.6 61.5h0M561.8 61.1h0M226.0 63.6h0M603.9 63.6h0M509.8 71.6h0" stroke="#a89654" stroke-opacity="0.35" stroke-width="0.7" stroke-linecap="round"/><path d="M316.8 82.2h0M583.4 78.0h0M542.4 86.8h0M211.2 73.4h0M418.8 94.0h0M162.8 71.5h0M340.0 80.1h0M401.7 73.3h0M201.2 88.6h0M480.3 78.9h0M527.4 79.1h0M187.3 83.8h0M375.7 52.5h0M342.9 56.4h0M293.3 90.5h0M367.9 51.0h0M547.2 92.5h0M503.4 70.3h0M432.1 83.7h0M343.5 89.0h0M394.9 70.5h0M291.1 72.2h0M388.7 92.2h0M388.6 95.2h0M514.4 54.7h0M589.7 60.5h0M371.2 91.2h0M447.0 86.8h0M479.8 62.7h0M546.5 61.0h0M474.3 82.3h0M342.4 59.4h0M628.6 54.9h0M567.3 65.8h0M471.6 71.7h0M635.6 79.9h0M332.9 75.3h0M512.4 79.7h0M383.6 78.5h0M459.0 86.1h0M427.9 59.3h0M515.7 65.5h0M143.1 146.4h0M374.4 81.8h0M399.8 94.4h0M683.0 83.9h0M305.1 91.5h0M356.0 82.1h0M520.6 75.4h0M356.1 85.7h0M375.0 61.1h0M483.4 60.3h0M436.4 95.9h0M430.7 95.7h0M311.4 80.3h0M295.1 90.5h0M307.4 88.3h0M500.0 72.8h0M373.3 65.9h0M155.1 85.2h0M481.8 91.5h0M182.6 80.2h0M418.4 68.8h0M455.4 95.7h0M341.1 71.2h0M198.7 82.9h0M206.8 61.8h0M555.3 81.2h0M488.2 56.0h0M169.7 126.5h0M497.1 79.1h0M544.5 67.2h0M424.3 90.6h0M191.6 88.4h0M504.4 68.2h0M325.2 89.1h0M571.4 68.4h0M532.2 65.1h0M385.6 94.4h0M294.7 83.6h0M329.7 62.9h0M631.4 67.5h0M542.8 62.1h0M472.6 69.2h0M404.2 78.0h0M306.8 85.9h0M370.1 55.5h0M359.3 83.9h0M178.9 108.9h0M327.6 90.6h0M523.2 83.9h0M334.7 76.6h0M621.7 53.2h0M378.4 82.8h0M525.6 82.5h0M427.4 80.6h0M441.1 90.3h0M579.2 86.0h0M171.4 98.5h0M598.8 54.3h0M609.9 60.1h0M314.0 87.6h0M591.5 50.8h0M489.4 62.7h0M537.1 70.2h0M235.0 86.0h0M569.8 87.6h0M583.5 69.4h0M600.1 64.2h0M244.5 69.7h0M320.8 85.6h0M365.5 96.7h0M368.5 55.2h0M322.8 87.1h0M176.2 67.2h0M438.2 92.6h0M384.0 93.7h0M514.3 57.8h0M593.7 64.6h0M532.6 87.0h0M666.3 91.1h0M365.1 65.4h0M142.7 117.6h0M493.0 76.8h0M562.1 92.4h0M611.5 60.3h0M160.7 86.9h0M378.9 80.6h0M462.0 78.2h0M207.4 111.1h0M196.8 90.4h0M317.5 81.6h0M464.6 63.1h0M541.1 62.1h0M524.7 59.9h0M369.7 53.4h0M366.6 63.2h0M487.7 50.8h0M372.7 73.7h0M203.5 134.3h0M189.8 67.9h0M501.0 78.6h0M526.3 65.1h0M537.7 96.2h0M337.1 78.0h0M450.0 86.9h0M517.6 72.5h0M511.4 83.5h0M542.9 69.0h0M658.5 76.3h0M376.1 62.2h0M523.1 85.7h0M336.9 90.6h0M318.1 68.9h0M298.1 81.5h0M408.4 84.5h0M619.0 86.9h0M352.8 62.6h0M595.0 55.5h0M492.3 82.5h0M500.1 76.6h0M554.8 58.7h0M590.1 57.5h0M475.6 79.9h0M359.0 60.6h0M569.4 75.8h0M626.9 64.2h0M375.0 72.6h0M321.6 66.7h0M523.4 51.0h0M409.2 64.3h0M390.6 73.2h0M540.8 76.5h0M438.4 72.3h0M557.5 64.9h0M168.9 118.5h0M367.1 67.8h0M199.4 147.1h0M301.8 83.7h0M507.0 86.5h0M387.5 79.7h0M582.6 63.1h0M567.6 65.4h0M181.8 57.1h0M156.5 89.8h0M494.0 77.7h0M515.8 74.5h0M421.8 66.1h0M365.2 74.9h0M564.0 64.3h0M521.4 84.9h0M490.9 77.7h0M477.9 73.7h0M547.5 74.5h0M463.5 86.1h0M631.7 66.4h0M401.9 72.9h0M603.7 73.5h0M345.4 63.8h0M397.4 94.3h0M536.5 60.1h0M303.5 69.3h0M684.7 65.2h0M593.6 79.8h0M199.9 103.6h0M201.1 110.9h0M639.6 87.2h0M573.0 77.3h0M561.2 72.0h0M480.0 74.6h0M449.6 97.0h0M317.7 86.9h0M430.8 90.9h0M566.2 59.1h0M387.7 77.4h0M521.8 73.6h0M544.5 80.0h0M586.2 66.5h0M321.6 88.3h0M445.4 68.4h0M363.0 56.6h0M367.6 85.1h0M442.6 72.6h0M225.1 79.1h0M409.8 86.2h0M398.8 55.7h0M555.4 67.9h0M282.6 81.2h0M559.5 53.7h0M436.5 96.9h0M286.3 89.2h0M167.1 62.5h0M319.0 81.9h0M426.3 79.9h0M546.8 69.1h0M498.2 78.9h0M349.5 78.2h0M497.0 68.8h0M457.4 63.8h0M160.5 105.3h0M524.5 69.8h0M358.2 76.4h0M484.9 90.4h0M266.9 66.9h0M418.6 51.7h0M399.5 56.3h0M463.6 61.8h0M424.5 92.3h0M468.3 93.0h0M378.8 76.9h0M300.8 61.7h0M437.0 88.5h0M193.6 90.4h0M445.4 81.2h0M399.1 84.1h0M422.1 58.1h0M434.1 73.9h0M322.4 63.3h0M520.0 74.9h0M485.2 91.4h0M383.7 71.3h0M552.3 72.3h0M389.5 76.5h0M449.7 62.9h0M573.9 91.0h0M619.7 69.6h0M525.3 52.6h0M293.2 85.4h0M608.1 68.3h0M522.6 79.0h0M256.9 78.1h0M348.7 94.5h0M275.1 82.3h0M581.0 64.9h0M408.0 95.9h0M602.9 85.2h0M352.8 89.6h0M286.7 75.2h0M410.1 64.5h0M510.0 74.2h0M469.3 88.7h0M314.0 77.9h0M437.4 66.5h0M523.1 69.2h0M589.3 53.0h0M474.8 87.8h0M538.6 73.4h0M224.3 60.0h0M310.7 74.8h0M370.0 95.1h0M457.3 76.0h0M506.6 76.3h0M388.7 66.9h0M364.8 77.8h0M170.0 128.9h0M180.3 157.2h0M573.2 64.6h0M146.9 154.1h0M548.5 93.3h0M559.6 63.8h0M456.6 78.3h0M501.4 68.4h0M145.2 119.3h0M311.9 95.2h0M625.8 78.9h0M573.7 68.4h0M364.9 80.1h0M432.2 71.8h0M380.7 87.6h0M284.3 73.1h0M564.9 56.9h0M638.8 62.0h0M569.7 54.3h0M465.6 71.1h0M589.5 65.2h0M541.9 89.1h0M438.4 78.0h0M329.0 83.1h0M388.3 94.2h0M424.1 89.5h0M529.0 69.4h0M512.9 73.2h0M496.8 83.2h0M281.0 67.1h0M495.1 91.7h0M500.5 59.0h0M264.1 52.7h0M456.3 81.4h0M347.4 74.3h0M376.3 94.4h0M369.6 91.4h0M510.8 66.8h0M380.1 63.0h0M506.6 75.4h0M388.0 87.2h0M434.1 80.7h0M569.4 63.0h0M373.8 91.6h0M273.6 95.4h0M469.0 81.8h0M478.8 68.7h0M564.7 58.9h0M304.3 90.7h0M268.0 89.5h0M511.5 86.1h0M468.7 71.6h0M503.5 53.4h0M666.8 79.3h0M708.9 144.9h0M618.4 52.7h0M303.3 57.1h0M264.9 96.5h0M580.5 75.8h0M302.2 76.6h0M378.4 74.1h0M455.2 56.2h0M370.9 94.1h0M397.8 83.3h0M318.2 61.5h0M525.8 77.9h0M432.3 87.9h0M264.4 72.3h0M471.8 94.7h0M421.3 92.5h0M337.5 94.9h0M298.1 88.3h0M203.7 113.2h0M393.2 94.2h0M406.6 88.7h0M488.5 82.3h0M526.5 87.1h0M503.7 92.1h0M295.3 95.0h0M156.5 79.7h0M362.9 87.1h0M519.6 68.3h0M246.9 85.2h0M406.6 86.1h0M165.1 125.7h0M393.8 88.0h0M532.8 67.9h0M370.4 92.6h0M369.0 70.5h0M546.0 84.0h0M600.5 61.0h0M499.5 96.0h0M244.4 96.3h0M357.1 61.2h0M491.4 91.7h0M580.6 67.7h0M538.7 60.6h0M381.5 69.4h0M332.0 61.7h0M222.0 89.2h0M508.0 78.2h0M428.9 74.6h0M599.6 83.5h0M377.7 95.6h0M407.1 86.7h0M149.5 122.8h0M397.6 74.8h0M172.4 113.9h0M541.0 68.3h0M547.5 72.2h0M371.3 93.1h0M251.0 72.5h0M547.7 77.4h0M167.8 119.1h0M293.4 74.8h0M695.5 137.4h0M376.7 56.7h0M389.8 79.3h0M393.8 93.8h0M532.3 82.4h0M488.8 61.2h0M436.3 61.5h0M592.3 60.7h0M486.5 53.2h0M408.6 70.4h0M624.6 78.7h0M492.6 85.4h0M328.6 80.5h0M152.7 94.8h0M272.8 64.3h0M284.0 71.7h0M406.4 57.6h0M599.0 68.9h0M471.4 79.2h0M391.3 71.1h0M487.1 82.1h0M467.6 87.3h0M144.6 87.2h0M338.1 94.8h0M176.9 74.3h0M549.4 75.7h0M335.0 96.3h0M590.4 67.7h0M403.9 58.7h0M375.6 69.9h0M623.2 58.4h0M291.6 91.0h0M342.5 85.2h0M554.3 86.5h0M314.4 76.3h0M331.3 91.6h0M338.8 87.4h0M435.2 90.0h0M589.3 80.8h0M318.8 95.8h0M554.4 69.5h0M569.4 63.3h0M497.3 83.0h0M407.7 67.0h0M449.9 68.1h0M265.7 92.1h0M502.9 57.4h0M194.9 157.0h0M444.3 89.5h0M281.4 92.0h0M431.8 56.7h0M214.3 71.4h0M482.7 74.6h0M514.8 73.5h0M470.7 63.8h0M331.4 80.7h0M275.2 68.9h0M374.9 82.6h0M544.4 70.6h0M628.1 66.0h0M454.9 75.1h0M346.4 76.5h0M510.3 91.4h0M201.1 97.9h0M532.1 82.1h0M185.5 68.2h0M559.7 63.0h0M461.6 94.0h0M701.6 149.8h0M284.7 79.0h0M686.1 83.6h0M362.7 95.6h0M517.7 94.6h0M397.0 61.0h0M241.4 84.9h0M614.2 69.2h0M292.5 83.1h0M463.7 72.8h0M616.5 51.8h0M153.1 78.4h0M387.3 93.9h0M325.6 82.1h0M607.5 69.6h0M173.0 159.0h0M655.1 77.1h0M306.0 77.7h0M574.0 73.0h0M467.4 95.1h0M544.1 69.5h0M165.0 95.3h0M546.0 91.4h0M290.8 68.4h0M416.2 64.0h0M567.1 87.9h0M610.7 55.0h0M501.4 59.4h0M673.3 54.0h0M194.9 130.2h0M517.5 61.5h0M368.5 73.9h0M341.8 69.5h0M561.7 51.4h0M488.7 62.0h0M434.4 64.1h0M339.6 78.0h0M499.3 83.0h0M313.3 90.8h0M567.0 50.7h0M206.7 66.9h0M516.8 75.5h0M589.0 63.1h0M514.1 62.9h0M706.1 88.7h0M516.9 67.6h0M438.7 82.7h0M584.1 75.4h0M396.2 62.2h0M300.3 62.6h0M337.1 57.5h0M515.6 68.2h0M320.3 87.5h0M207.5 66.5h0M290.6 95.6h0M378.5 93.9h0M141.2 120.9h0M515.5 56.9h0M207.6 112.1h0M160.7 104.6h0M553.7 72.6h0M462.3 80.8h0M555.0 79.5h0M186.7 72.5h0M537.1 55.6h0M150.4 109.8h0M491.2 77.6h0M413.6 82.1h0M446.8 71.0h0M401.3 77.9h0M504.7 68.5h0M161.5 74.2h0M378.2 56.5h0M412.0 54.4h0M344.7 89.7h0M444.9 92.1h0M542.3 78.6h0M426.6 83.8h0M426.8 84.7h0M375.3 58.5h0M302.5 62.6h0M545.6 67.3h0M454.4 89.6h0M159.3 64.4h0M150.4 116.4h0M561.9 53.8h0M337.4 92.2h0M166.2 104.0h0M423.4 87.3h0M405.9 86.3h0M203.9 86.7h0M451.9 92.4h0M249.8 90.2h0M525.4 80.6h0M644.1 63.8h0M252.3 88.4h0M178.6 108.3h0M467.1 92.3h0M382.0 87.7h0M392.2 63.0h0M485.3 70.6h0M561.5 62.4h0M354.3 67.7h0M189.8 135.1h0M368.7 81.4h0M527.3 56.2h0M533.3 83.9h0M403.9 77.5h0M403.2 71.7h0M520.4 57.8h0M190.5 91.7h0M538.8 65.2h0M245.5 62.2h0M298.0 82.3h0M541.2 65.6h0M420.1 89.8h0M317.4 88.3h0M394.1 95.5h0M486.7 73.0h0M492.8 61.3h0M313.0 94.5h0M560.9 74.1h0M481.3 75.5h0M323.1 57.6h0M653.2 62.7h0M551.2 68.5h0M510.7 78.4h0M159.4 79.5h0M507.9 81.7h0M404.3 56.7h0M189.5 120.7h0M367.5 84.4h0M382.8 85.5h0M326.1 51.6h0M686.4 91.7h0M333.6 78.2h0M363.2 56.8h0M570.9 69.9h0M571.9 52.3h0M475.4 92.5h0M386.0 66.5h0M305.7 61.5h0M378.2 81.3h0M515.1 90.3h0M492.0 83.3h0M501.9 95.2h0M197.3 85.1h0M416.4 54.9h0M321.2 87.4h0M505.1 72.9h0M355.0 94.4h0M478.7 78.6h0M326.7 85.9h0M529.6 94.1h0M269.0 79.2h0M430.6 96.0h0M365.0 65.6h0M581.0 91.5h0M153.1 118.1h0M175.5 117.2h0M529.9 64.2h0M323.3 75.3h0M382.7 94.6h0M530.8 70.4h0M513.7 88.3h0M500.8 71.2h0M422.0 79.1h0M445.3 78.9h0M306.4 73.5h0M391.3 84.7h0M167.2 117.4h0M294.1 91.3h0M295.1 71.9h0M393.4 90.3h0M292.0 93.8h0M475.0 83.8h0M387.8 81.9h0M500.8 66.0h0M271.9 89.5h0M576.4 90.0h0M243.5 96.0h0M413.8 89.0h0M585.1 79.9h0M400.2 80.8h0M334.9 73.6h0M455.0 88.9h0M610.2 80.9h0M554.4 55.3h0M436.7 64.5h0M509.6 78.9h0M583.2 77.4h0M581.4 58.6h0M359.7 88.7h0M522.9 96.6h0M201.4 75.8h0M498.3 83.2h0M305.6 90.3h0M547.3 59.0h0M377.0 61.6h0M572.9 74.3h0M314.1 92.8h0M385.2 82.4h0M408.5 89.8h0M321.9 74.9h0M421.3 59.5h0M364.7 74.5h0M385.1 69.2h0M338.4 90.4h0M570.6 62.4h0M340.6 76.2h0M401.8 83.4h0M536.6 63.0h0M357.9 66.1h0M335.2 81.2h0M545.5 61.6h0M487.6 88.5h0M608.4 55.7h0M195.5 145.3h0M531.0 78.3h0M534.1 52.3h0M538.9 74.7h0M435.8 65.2h0M536.1 57.0h0M228.5 76.2h0M404.9 83.8h0M197.0 113.0h0M324.6 78.0h0M443.8 90.1h0M365.3 89.3h0M169.1 100.5h0M329.1 84.0h0M420.8 95.3h0M570.0 95.9h0M382.9 72.2h0M496.6 85.7h0M394.6 91.2h0M350.4 77.2h0M177.8 73.3h0M429.4 84.1h0M540.2 65.0h0M302.2 77.2h0M508.1 82.0h0M572.2 58.8h0M413.3 86.5h0M511.3 90.9h0M382.7 56.8h0M559.0 73.9h0M192.5 63.5h0M424.4 65.5h0M569.1 77.8h0M148.8 141.1h0M536.5 68.9h0M544.3 58.4h0M517.8 84.5h0M589.1 57.6h0M257.0 55.1h0M194.4 57.7h0M288.5 74.8h0M564.9 77.2h0M543.0 73.2h0M405.8 95.9h0M535.6 61.9h0M220.8 89.6h0M448.4 62.0h0M609.6 72.4h0M532.3 69.7h0M477.1 78.9h0M600.8 63.7h0M318.1 89.5h0M493.7 90.9h0M428.3 63.7h0M597.4 70.3h0M439.3 71.7h0M534.2 74.2h0M524.4 87.0h0M347.1 67.8h0M333.2 66.8h0M258.3 94.8h0M336.9 50.6h0M226.9 95.5h0M447.2 93.5h0M324.6 93.9h0M478.8 82.9h0M440.2 68.7h0M333.2 66.6h0M527.2 55.9h0M494.3 74.0h0M483.7 89.3h0M621.5 51.9h0M702.3 80.6h0M202.4 139.2h0M517.6 66.0h0M542.5 62.2h0M660.3 57.3h0M391.3 57.1h0M410.8 85.3h0M354.6 95.1h0M496.7 93.3h0M541.8 67.4h0M487.5 95.8h0M600.9 89.1h0M617.6 81.5h0M355.4 88.8h0M193.0 121.8h0M511.1 79.2h0M550.9 78.4h0M250.7 74.5h0M549.7 70.2h0M646.5 65.9h0M555.3 67.5h0M310.2 85.8h0M347.5 80.1h0M311.1 81.1h0M481.7 72.7h0M557.3 73.5h0M377.5 84.3h0M595.4 73.9h0M203.9 59.5h0M546.5 67.4h0M676.8 66.9h0M273.6 94.4h0M398.5 92.8h0M484.9 89.0h0M397.5 88.3h0M423.3 91.3h0M156.7 143.7h0M328.3 79.0h0M629.1 79.3h0M194.2 85.2h0M293.5 83.8h0M489.4 77.0h0M395.4 53.0h0M604.5 51.3h0M564.5 67.2h0M489.1 80.7h0M408.9 82.4h0M590.5 90.6h0M189.7 111.4h0M461.8 74.3h0M200.5 107.9h0M435.4 81.8h0M323.5 80.0h0M344.8 90.0h0M497.7 54.7h0M500.1 76.7h0M702.1 94.1h0M335.4 86.0h0M394.9 92.1h0M540.4 78.9h0" stroke="#a89654" stroke-opacity="0.15" stroke-width="1.0" stroke-linecap="round"/><path d="M362.6 82.3h0M531.6 57.0h0M646.7 76.6h0M547.7 93.3h0M564.1 80.7h0M366.1 83.2h0M578.0 71.1h0M150.8 140.6h0M586.1 89.9h0M513.5 85.6h0M266.0 96.5h0M369.3 82.7h0M521.3 84.9h0M350.8 64.4h0M576.1 56.9h0M486.8 65.1h0M456.8 54.0h0M205.7 112.9h0M472.6 90.0h0M208.6 63.5h0M388.6 86.6h0M501.4 77.2h0M466.3 95.0h0M387.9 82.3h0M201.3 132.1h0M364.1 91.3h0M596.4 62.3h0M536.5 68.6h0M472.0 84.4h0M330.9 76.2h0M248.1 88.0h0M453.2 83.7h0M535.8 89.1h0M342.3 86.8h0M505.2 87.6h0M342.4 86.3h0M519.6 87.4h0M446.1 96.7h0M206.8 138.0h0M199.4 64.4h0M468.1 59.6h0M357.8 67.6h0M555.3 71.5h0M469.2 58.4h0M420.5 72.0h0M497.9 52.2h0M285.5 82.2h0M510.0 76.8h0M193.6 64.1h0M259.3 91.3h0M324.8 74.9h0M174.5 174.0h0M399.8 68.5h0M360.6 72.4h0M498.5 89.4h0M539.1 86.7h0M506.7 77.1h0M531.3 74.7h0M552.0 92.3h0M559.7 78.7h0M368.1 56.9h0M497.2 54.0h0M490.3 75.6h0M198.1 110.1h0M548.0 70.8h0M615.8 71.1h0M368.0 92.2h0M476.8 86.3h0M328.5 79.9h0M320.1 67.5h0M383.8 58.2h0M517.2 75.1h0M562.3 76.5h0M538.5 65.9h0M530.6 74.1h0M318.5 75.8h0M561.2 68.2h0M405.2 70.8h0M577.6 52.9h0M506.7 96.9h0M344.3 94.8h0M387.0 85.4h0M332.6 76.5h0M416.2 84.7h0M429.1 96.3h0M391.5 58.8h0M303.5 86.4h0M390.9 94.8h0M446.8 79.5h0M164.7 107.3h0M665.0 56.0h0M331.6 90.1h0M575.1 59.8h0M345.4 92.5h0M460.9 54.6h0M461.5 51.5h0M314.9 93.4h0M475.0 86.6h0M286.8 88.4h0M358.6 70.1h0M562.2 68.1h0M309.5 66.8h0M279.3 80.5h0M559.4 66.6h0M403.8 90.2h0M180.7 71.5h0M493.5 93.1h0M255.4 61.7h0M434.6 83.2h0M557.3 63.6h0M514.6 62.2h0M396.4 65.9h0M446.3 67.5h0M334.8 81.2h0M578.7 62.0h0M381.2 78.0h0M534.4 67.0h0M594.8 92.4h0M690.1 87.5h0M406.2 92.5h0M455.1 63.8h0M333.5 81.6h0M391.8 96.1h0M465.8 86.0h0M345.0 68.1h0M446.6 94.2h0M497.4 75.3h0M500.9 87.2h0M289.1 63.5h0M585.6 57.7h0M511.0 75.7h0M442.8 90.2h0M416.7 83.1h0M533.8 63.6h0M374.7 96.8h0M382.3 91.8h0M349.6 67.5h0M296.1 65.6h0M611.2 61.8h0M397.6 84.4h0M600.9 71.4h0M278.5 89.8h0M509.2 76.6h0M582.9 93.8h0M314.6 94.7h0M200.0 125.1h0M513.8 89.1h0M671.1 136.1h0M357.0 63.0h0M686.2 117.8h0M405.1 77.4h0M419.0 67.1h0M412.2 91.9h0M363.3 84.9h0M176.1 94.4h0M327.4 95.2h0M513.2 77.0h0M301.0 71.3h0M341.5 65.8h0M310.1 82.6h0M689.8 75.9h0M314.3 92.1h0M466.4 79.5h0M316.6 93.2h0M539.3 60.3h0M180.1 84.1h0M534.4 86.8h0M520.9 68.4h0M363.2 67.9h0M442.4 89.5h0M631.1 77.1h0M464.2 89.0h0M284.2 77.3h0M165.9 73.4h0M447.2 80.7h0M516.9 89.5h0M563.9 66.1h0M163.3 62.4h0M403.2 69.8h0M309.6 93.2h0M340.9 72.3h0M282.8 50.6h0M529.0 88.4h0M585.6 64.4h0M371.8 72.9h0M499.6 76.4h0M430.3 90.4h0M349.9 89.1h0M493.6 69.2h0M482.2 83.1h0M380.1 62.5h0M501.9 80.6h0M460.8 92.6h0M156.4 118.7h0M484.1 96.8h0M314.6 85.0h0M604.1 90.5h0M293.3 74.0h0M570.3 72.1h0M403.7 78.3h0M353.8 70.6h0M606.9 55.4h0M510.5 73.2h0M492.6 74.8h0M376.3 91.5h0M317.9 53.6h0M513.4 92.2h0M327.9 52.0h0M519.6 86.2h0M687.3 154.5h0M300.8 92.1h0M422.3 65.8h0M290.8 67.2h0M311.8 84.4h0M200.9 72.8h0M574.9 62.3h0M457.2 80.1h0M451.0 84.6h0M398.3 68.5h0M269.6 74.9h0M491.4 76.8h0M588.1 77.8h0M313.4 82.8h0M259.4 93.8h0M517.1 88.7h0M451.6 84.6h0M198.9 155.6h0M573.7 91.8h0M284.2 89.9h0M155.4 131.9h0M292.3 84.2h0M357.1 60.4h0M453.5 80.5h0M300.2 90.3h0M710.3 106.9h0M425.9 60.1h0M368.8 58.6h0M513.4 95.9h0M536.8 72.7h0M358.6 58.5h0M365.4 82.2h0M568.6 52.9h0M190.9 78.8h0M402.0 57.3h0M502.5 80.5h0M499.1 83.5h0M584.8 64.4h0M319.3 78.6h0M440.8 69.8h0M322.6 65.7h0M492.2 80.5h0M589.9 66.2h0M510.6 75.5h0M359.5 52.8h0M534.3 86.2h0M191.9 78.4h0M591.0 67.1h0M396.5 68.7h0M285.5 56.0h0M536.0 75.6h0M540.1 70.2h0M225.6 80.0h0M203.2 66.0h0M504.0 94.0h0M527.3 76.1h0M519.8 86.6h0M331.7 64.9h0M328.4 67.9h0M564.3 72.7h0M277.6 94.2h0M305.7 64.0h0M500.9 55.9h0M435.5 83.7h0M385.2 75.7h0M599.6 52.1h0M375.6 77.8h0M283.3 82.4h0M316.3 75.4h0M381.9 95.3h0M372.0 67.8h0M319.1 77.9h0M436.7 72.9h0M464.5 86.8h0M288.6 73.7h0M311.9 84.9h0M273.1 71.6h0M504.6 67.8h0M157.1 111.7h0M545.9 59.7h0M409.2 92.7h0M431.4 91.1h0M480.8 95.2h0M479.4 89.4h0M455.2 73.7h0M401.8 84.6h0M546.7 78.5h0M482.1 73.2h0M323.5 87.7h0M307.0 88.4h0M492.9 74.8h0M453.1 79.9h0M463.8 89.6h0M288.4 93.8h0M382.9 91.0h0M515.9 74.7h0M210.7 79.2h0M505.1 91.8h0M449.7 75.1h0M367.5 82.0h0M298.2 61.6h0M445.8 79.1h0M280.4 55.5h0M423.1 77.2h0M354.8 82.6h0M283.3 84.8h0M339.1 78.3h0M447.5 82.3h0M365.6 75.9h0M192.2 112.1h0M390.8 74.7h0M493.5 74.7h0M544.2 65.6h0M514.2 74.2h0M455.4 50.7h0M369.8 69.6h0M265.5 96.4h0M373.6 70.6h0M175.3 94.6h0M425.9 55.6h0M667.3 59.2h0M286.2 88.5h0M572.3 72.5h0M295.2 87.1h0M499.9 85.0h0M554.1 93.2h0M532.3 86.5h0M295.4 95.9h0M500.9 65.9h0M388.4 59.5h0M421.2 75.4h0M483.3 77.9h0M180.0 77.4h0M362.0 72.1h0M582.2 60.2h0M353.7 83.3h0M276.2 86.1h0M465.7 83.2h0M657.6 73.1h0M474.3 66.3h0M537.9 57.9h0M549.3 64.9h0M363.8 90.8h0M528.1 72.7h0M472.6 87.9h0M152.3 139.9h0M597.0 90.2h0M285.2 96.8h0M454.7 54.2h0M412.7 67.6h0M394.2 86.9h0M391.3 64.4h0M210.7 68.8h0M285.4 85.0h0M277.9 87.9h0M473.3 61.6h0M635.5 84.5h0M613.5 88.4h0M362.8 89.9h0M632.1 53.3h0M586.0 73.5h0M509.8 74.8h0M531.4 58.5h0M426.0 87.5h0M560.3 93.6h0M388.3 87.6h0M510.8 70.6h0M343.0 63.8h0M338.6 86.2h0M679.1 76.7h0M570.6 55.7h0M573.3 71.2h0M643.3 95.4h0M502.5 90.4h0M543.7 67.8h0M316.0 96.0h0M522.4 94.9h0M190.5 120.4h0M480.0 75.9h0M385.6 63.4h0M500.5 78.4h0M408.6 69.6h0M276.1 92.3h0M453.4 92.7h0M620.9 63.7h0M348.0 89.2h0M265.0 83.4h0M321.5 78.8h0M294.4 92.5h0M562.9 78.4h0M480.4 73.0h0M420.7 69.5h0M334.0 66.0h0M557.2 71.5h0M464.0 76.7h0M458.3 71.3h0M203.0 64.0h0M570.0 51.4h0M165.1 176.6h0M577.3 56.9h0M547.1 55.8h0M522.6 83.0h0M522.0 86.8h0M393.9 90.3h0M524.5 65.4h0M300.4 64.8h0M343.7 80.4h0M378.7 85.5h0M197.2 63.2h0M359.9 83.4h0M412.9 91.6h0M443.0 91.0h0M559.0 64.2h0M557.1 74.8h0M572.2 80.1h0M503.2 64.9h0M566.5 79.8h0M617.3 76.6h0M394.7 89.2h0M529.1 58.5h0M363.3 84.6h0M451.9 87.7h0M312.5 65.0h0M531.2 70.8h0M584.6 86.3h0M391.4 74.0h0M432.5 94.5h0M540.4 74.2h0M492.4 77.5h0M481.9 60.3h0M326.3 76.1h0M466.4 88.5h0M526.3 67.4h0M496.8 75.2h0M642.4 66.2h0M347.7 75.2h0M488.4 64.7h0M423.7 90.1h0M431.9 88.6h0M308.6 78.4h0M358.1 72.0h0M495.2 68.8h0M498.0 93.7h0M515.6 87.0h0M610.4 64.0h0M556.6 64.8h0M357.4 63.4h0M472.0 90.5h0M362.2 83.9h0M293.9 74.3h0M421.9 53.7h0M528.5 74.0h0M558.4 82.0h0M294.0 72.8h0M435.2 56.3h0M198.0 68.5h0M460.6 67.3h0M593.5 54.9h0M502.2 63.5h0M386.6 62.3h0M508.7 67.5h0M639.0 53.5h0M431.1 89.2h0M326.3 65.5h0M530.7 56.6h0M330.9 88.3h0M421.6 92.5h0M204.7 61.9h0M503.9 79.3h0M469.9 93.5h0M300.4 91.5h0M556.1 83.0h0M522.6 75.9h0M586.9 67.8h0M366.4 58.0h0M596.3 95.4h0M266.2 82.3h0M391.4 84.9h0M176.3 83.2h0M241.8 86.3h0M337.3 71.2h0M503.8 84.3h0M358.5 73.8h0M183.3 62.3h0M595.2 70.0h0M562.1 63.0h0M472.7 74.0h0M324.2 78.2h0M220.9 51.8h0M519.1 95.1h0M291.6 82.0h0M196.6 124.8h0M362.3 87.6h0M584.5 61.6h0M198.7 109.7h0M526.6 89.4h0M557.7 70.7h0M494.3 87.2h0M372.9 58.5h0M547.5 89.1h0M576.0 61.2h0M454.1 88.7h0M347.7 77.8h0M467.2 86.7h0M533.2 72.4h0M284.5 64.3h0M317.3 96.3h0M570.1 80.6h0M513.4 84.7h0M546.5 67.2h0M496.8 77.9h0M528.7 89.9h0M158.2 218.1h0M339.7 87.2h0M377.1 56.0h0M595.2 76.9h0M487.9 65.3h0M323.3 71.0h0M165.1 125.6h0M421.9 89.8h0M316.0 71.7h0M514.3 76.1h0M529.2 51.2h0M369.6 92.8h0M493.8 73.9h0M538.9 75.0h0M354.1 78.7h0M484.3 57.8h0M189.6 115.0h0M480.3 60.1h0M440.4 86.4h0M423.3 87.3h0M526.7 84.2h0M324.0 74.1h0M289.8 79.6h0M569.1 69.8h0M362.7 94.9h0M663.5 58.4h0M324.2 69.4h0M395.0 94.6h0M466.6 59.7h0M589.0 62.1h0M401.5 76.9h0M431.2 67.9h0M283.7 91.3h0M341.3 75.0h0M587.8 61.5h0M297.5 74.6h0M304.9 66.5h0M507.0 93.4h0M197.5 103.8h0M431.0 51.5h0M605.7 85.0h0M545.4 77.8h0M421.1 70.5h0M403.8 81.3h0M554.1 58.6h0M462.5 75.0h0M359.3 81.9h0M519.6 82.4h0M382.9 95.7h0M344.7 81.9h0M383.0 55.3h0M176.3 102.5h0M193.2 181.4h0M245.7 55.3h0M556.3 76.7h0M348.5 70.3h0M422.3 81.8h0M572.1 55.0h0M354.7 67.2h0M550.5 88.0h0M295.8 78.6h0M434.4 65.0h0M168.0 102.4h0M509.1 92.6h0M349.1 62.7h0M336.0 52.9h0M388.4 64.6h0M570.4 67.8h0M561.7 81.0h0M395.6 76.2h0M472.8 70.0h0M146.7 146.7h0M519.8 83.4h0M393.7 77.2h0M590.9 75.7h0M684.2 126.5h0M486.4 90.3h0M488.0 82.3h0M282.7 83.5h0M337.6 68.1h0M526.2 71.5h0M405.1 61.5h0M407.6 56.9h0M545.5 60.4h0M434.6 73.0h0M193.0 104.3h0M430.2 71.4h0M165.9 122.6h0M508.7 91.3h0M237.2 66.6h0M306.4 87.0h0M590.5 85.0h0M523.3 77.1h0M543.2 86.5h0M390.5 63.9h0M167.7 89.5h0M152.9 56.4h0M532.9 87.8h0M391.9 69.1h0M440.8 73.9h0M312.8 60.3h0M514.9 76.9h0M388.2 55.9h0M322.0 83.3h0M351.3 63.8h0M521.9 68.1h0M301.6 90.9h0M412.5 83.2h0M585.5 64.0h0M361.5 75.6h0M365.0 80.5h0M520.1 80.5h0M659.6 94.6h0M352.2 60.5h0M536.0 82.9h0M522.4 79.1h0M530.4 56.9h0M295.5 89.0h0M559.4 63.6h0M360.7 74.1h0M481.4 64.7h0M185.6 87.1h0M600.2 79.5h0M393.4 85.5h0M326.2 61.4h0M239.1 96.9h0M331.8 71.1h0M365.8 59.8h0M509.5 83.5h0M426.2 53.2h0M567.2 63.8h0M529.7 74.7h0M413.1 67.9h0M200.8 77.4h0M303.7 74.0h0M539.2 69.3h0M359.2 82.3h0M518.9 82.1h0M406.2 79.4h0M468.1 70.7h0M522.3 69.9h0M381.5 70.6h0M490.8 53.6h0M307.9 92.2h0M484.9 77.3h0M366.5 83.0h0M376.8 83.8h0M514.4 62.5h0M350.0 52.6h0M295.5 89.1h0M296.7 80.1h0M447.1 64.9h0M468.0 89.0h0M481.3 85.3h0M582.2 88.3h0M318.5 82.5h0M356.2 82.5h0M631.6 65.2h0M482.8 81.6h0M356.9 72.5h0M430.0 95.1h0M500.5 64.0h0M571.1 60.2h0M581.3 77.4h0M482.4 52.6h0M219.0 74.4h0M286.2 59.7h0M440.6 94.8h0M542.5 63.7h0M158.1 106.7h0M188.7 120.5h0M414.2 60.9h0M564.8 66.0h0M554.8 79.8h0M326.7 65.9h0M541.9 71.2h0M380.3 58.3h0M425.6 83.7h0M450.2 77.6h0M595.2 66.5h0M431.0 77.3h0M274.4 65.0h0M431.1 88.7h0M344.3 84.6h0M421.4 65.7h0M560.5 81.1h0M184.6 157.0h0M380.1 54.8h0M310.8 55.0h0M166.4 77.6h0M552.5 87.2h0M638.9 54.7h0M422.7 88.2h0M334.8 94.1h0M462.9 69.1h0M239.8 53.6h0M195.6 105.6h0M457.8 93.8h0M568.3 63.9h0M612.7 58.1h0M150.6 83.4h0M180.1 90.9h0M529.0 63.3h0M477.0 95.3h0M283.5 85.0h0M516.5 86.8h0M352.9 76.7h0M541.4 91.7h0M486.5 71.6h0M286.3 70.4h0M584.9 79.5h0M348.2 90.5h0M333.5 73.3h0M169.2 126.3h0M538.2 85.6h0M294.1 78.1h0M457.8 57.8h0M302.7 90.4h0M258.5 71.2h0M522.5 88.6h0M620.1 76.2h0M430.7 88.7h0M542.2 77.6h0M422.4 87.1h0M342.5 75.3h0M526.4 87.7h0M561.6 56.4h0M424.6 67.8h0M582.6 87.3h0M324.1 52.3h0M401.2 83.2h0M244.5 78.7h0M647.9 89.7h0M513.1 80.4h0M315.0 82.0h0M695.7 87.7h0M380.8 74.2h0M399.0 75.9h0M245.3 77.6h0M175.2 115.8h0M481.1 85.0h0M558.0 57.1h0M571.8 80.7h0M183.7 116.1h0M305.7 83.6h0M520.1 57.4h0M427.7 92.4h0M549.5 55.0h0M378.1 93.4h0M463.7 82.6h0M146.8 140.9h0M176.6 72.9h0M588.4 75.2h0M187.8 172.1h0M533.8 52.7h0M547.7 81.6h0M505.5 84.2h0M559.9 61.5h0M466.6 88.5h0M512.5 81.0h0M408.7 65.9h0M555.5 84.2h0M402.1 77.2h0" stroke="#a89654" stroke-opacity="0.35" stroke-width="1.0" stroke-linecap="round"/><path d="M338.7 80.4h0M534.9 74.4h0M501.4 83.0h0M383.5 83.2h0M428.0 84.7h0M284.0 93.3h0M166.0 195.1h0M514.6 61.1h0M511.1 93.5h0M365.3 63.7h0M502.1 72.5h0M470.5 89.1h0M202.7 112.3h0M388.9 68.5h0M636.3 63.7h0M278.7 96.1h0M388.8 86.1h0M477.6 88.8h0M181.9 70.2h0M376.8 95.6h0M323.2 84.2h0M564.5 63.3h0M187.6 110.3h0M506.3 81.6h0M572.4 59.4h0M245.6 71.0h0M407.6 83.4h0M485.6 80.3h0M539.4 80.2h0M251.4 57.1h0M429.1 54.4h0M172.1 109.8h0M326.1 64.7h0M570.2 77.7h0M338.3 75.3h0M471.3 94.4h0M515.2 69.7h0M386.1 75.1h0M320.2 96.9h0M322.9 69.3h0M309.2 88.9h0M611.2 62.6h0M561.4 51.6h0M556.2 94.0h0M565.6 53.8h0M365.0 91.7h0M318.8 82.8h0M510.6 65.6h0M169.7 106.5h0M426.7 63.2h0M260.0 85.4h0M523.1 69.6h0M308.1 85.5h0M407.5 81.5h0M319.2 76.3h0M527.5 76.9h0M326.1 71.1h0M394.6 84.9h0M446.5 65.4h0M513.8 67.5h0M272.2 75.3h0M454.6 72.2h0M585.1 94.8h0M345.3 94.1h0M468.8 56.5h0M388.3 68.1h0M350.9 70.7h0M566.6 77.3h0M322.5 91.2h0M382.0 61.2h0M192.3 95.5h0M398.5 95.1h0M476.1 89.5h0M415.0 51.8h0M407.7 74.1h0M461.1 51.0h0M483.7 87.9h0M525.5 89.7h0M346.7 75.1h0M506.3 84.6h0M284.8 83.1h0M490.3 90.0h0M391.8 68.6h0M589.9 64.6h0M322.1 89.4h0M393.7 59.7h0M601.4 77.7h0M594.9 66.8h0M303.8 61.5h0M487.6 71.7h0M389.0 87.0h0M552.8 87.8h0M433.7 75.3h0M457.2 59.2h0M670.6 62.0h0M417.1 80.3h0M506.2 72.2h0M590.2 65.8h0M231.4 95.9h0M392.6 91.4h0M336.7 91.7h0M153.6 107.5h0M463.8 80.8h0M509.4 52.1h0M401.8 72.6h0M196.5 123.0h0M393.9 82.2h0M401.2 96.5h0M494.6 94.6h0M626.1 80.5h0M321.6 69.5h0M200.4 110.2h0M494.3 78.8h0M278.1 77.1h0M331.0 95.5h0M392.4 83.5h0M442.3 75.2h0M506.4 88.6h0M170.1 107.7h0M528.4 87.9h0M264.8 86.4h0M499.3 75.2h0M553.9 61.1h0M209.8 64.0h0M412.4 90.7h0M511.8 81.6h0M318.3 72.5h0M381.8 80.2h0M291.9 81.4h0M369.9 72.2h0M298.3 79.6h0M340.7 71.4h0M526.3 90.3h0M205.7 55.2h0M491.9 94.7h0M323.1 68.8h0M400.9 51.6h0M179.8 111.2h0M311.3 90.3h0M388.4 63.6h0M349.6 73.3h0M468.5 84.4h0M431.8 89.6h0M205.5 73.7h0M381.7 77.0h0M207.2 109.1h0M526.8 70.7h0M522.5 62.8h0M326.0 71.6h0M491.6 81.8h0M472.1 55.3h0M592.6 78.5h0M440.9 72.5h0M480.9 61.7h0M546.9 74.7h0M514.9 67.8h0M530.2 89.7h0M629.2 67.3h0M169.9 89.7h0M511.3 73.9h0M365.3 85.4h0M442.8 91.8h0M483.2 70.3h0M164.7 164.8h0M497.9 73.8h0M404.6 90.9h0M222.3 97.0h0M465.0 96.7h0M513.6 92.9h0M585.7 84.1h0M313.6 76.7h0M395.3 80.8h0M549.1 69.9h0M324.1 56.1h0M345.9 85.0h0M529.3 62.1h0M588.5 75.3h0M545.5 94.9h0M565.2 67.9h0M445.5 86.4h0M444.5 55.9h0M257.0 92.8h0M378.5 57.7h0M339.0 94.3h0M401.5 63.9h0M353.2 69.4h0M362.2 91.0h0M407.1 85.5h0M372.6 89.2h0M356.3 67.7h0M285.3 70.1h0M512.1 69.0h0M381.8 77.6h0M147.2 78.7h0M457.8 72.7h0M142.7 82.7h0M685.2 107.2h0M584.1 73.8h0M485.0 78.0h0M345.4 66.9h0M371.9 86.6h0M318.0 87.4h0M328.0 95.0h0M366.4 64.7h0M414.3 80.9h0M689.0 78.2h0M313.3 79.8h0M482.3 87.3h0M301.5 96.2h0M487.5 95.1h0M310.5 90.8h0M352.8 62.1h0M513.9 84.5h0M620.9 51.1h0M532.7 78.4h0M492.4 82.1h0M483.1 75.3h0M191.0 101.6h0M583.7 67.1h0M429.9 75.9h0M277.2 86.2h0M389.9 87.8h0M451.0 89.7h0M572.6 80.0h0M309.1 77.3h0M569.5 83.7h0M542.5 78.0h0M497.9 91.3h0M421.9 80.7h0M342.2 68.6h0M281.3 92.7h0M368.5 94.9h0M346.2 96.2h0M554.2 75.3h0M332.0 55.6h0M592.3 79.6h0M483.9 79.2h0M569.3 54.5h0M517.9 76.9h0M582.1 80.3h0M186.1 147.8h0M332.7 54.4h0M475.5 65.9h0M372.7 87.5h0M337.3 85.7h0M362.1 92.3h0M447.8 67.4h0M494.0 89.2h0M206.2 109.3h0M384.7 96.2h0M526.1 68.6h0M364.1 79.8h0M385.3 84.9h0M343.9 94.0h0M334.0 71.8h0M490.0 88.0h0M333.1 96.1h0M480.7 89.7h0M446.5 89.8h0M570.7 58.0h0M540.0 72.3h0M559.6 68.3h0M445.4 72.5h0M361.8 94.2h0M548.5 74.1h0M495.1 74.0h0M502.8 78.5h0M354.8 84.5h0M471.6 89.2h0M560.0 78.0h0M594.1 66.0h0M254.3 85.9h0M396.3 76.4h0M415.0 87.6h0M297.2 67.9h0M290.9 94.9h0M556.5 75.0h0M657.6 59.8h0M516.1 54.0h0M544.6 60.7h0M424.0 95.3h0M339.2 53.6h0M504.9 87.4h0M246.5 58.9h0M448.9 95.5h0M300.6 93.1h0M327.4 69.9h0M292.0 67.9h0M341.2 96.2h0M495.0 81.6h0M628.9 79.7h0M539.4 67.7h0M561.8 86.1h0M630.1 72.0h0M330.2 93.1h0M285.8 91.0h0M543.4 75.4h0M422.7 77.8h0M495.6 80.8h0M485.4 71.0h0M358.3 70.6h0M432.1 94.0h0M423.9 52.6h0M495.2 86.7h0M619.5 61.4h0M185.1 81.4h0M357.5 58.3h0M543.0 90.4h0M283.8 74.7h0M590.8 72.2h0M505.7 90.6h0M371.3 84.7h0M574.4 83.4h0M456.7 65.4h0M546.6 71.9h0M230.2 88.7h0M502.7 73.6h0M155.6 111.2h0M341.1 96.6h0M521.3 87.1h0M183.3 110.6h0M541.1 90.4h0M602.4 87.1h0M429.3 87.8h0M179.0 99.4h0M584.1 71.6h0M683.2 226.7h0M244.5 59.1h0M339.8 78.3h0M447.0 78.0h0M569.8 63.8h0M573.1 61.9h0M464.8 89.9h0M347.0 87.9h0M514.1 74.3h0M372.8 73.4h0M359.4 74.9h0M575.5 88.4h0M431.1 73.0h0M296.0 94.8h0M323.0 84.5h0M466.7 95.4h0M397.0 90.1h0M184.4 161.3h0M391.3 83.6h0M512.9 86.5h0M513.5 64.6h0M273.7 95.2h0M418.1 61.9h0M388.9 58.3h0M343.4 88.2h0M168.4 131.4h0M574.9 90.3h0M618.4 55.7h0M367.9 79.4h0M329.3 73.1h0M486.3 57.9h0M447.9 80.3h0M567.4 83.4h0M391.4 85.1h0M505.1 90.5h0M368.9 93.3h0M194.2 123.7h0M362.6 85.9h0M396.6 60.2h0M513.8 83.3h0M493.0 59.8h0M345.3 53.8h0M150.2 108.6h0M396.0 65.6h0M549.4 72.6h0M549.1 67.9h0M535.5 68.6h0M542.9 73.5h0M478.0 88.4h0M583.3 81.0h0M348.6 87.3h0M268.8 85.2h0M495.1 74.1h0M491.9 89.7h0M417.7 80.1h0M563.4 71.5h0M163.7 52.9h0M512.1 63.5h0M373.9 67.6h0M596.8 67.6h0M468.5 65.8h0M354.5 73.8h0M355.7 80.4h0M386.1 79.5h0M355.2 90.1h0M496.3 77.3h0M332.2 95.8h0M591.0 64.2h0M368.1 61.5h0M612.0 70.9h0M466.3 94.9h0M386.9 92.2h0M425.0 96.3h0M301.8 65.1h0M495.9 90.2h0M344.6 83.9h0M356.0 92.2h0M410.0 88.7h0M534.5 66.6h0M188.9 124.3h0M359.5 91.5h0M457.6 95.4h0M496.0 80.2h0M446.9 88.2h0M453.7 86.1h0M533.6 64.6h0M466.5 96.8h0M530.3 64.4h0M379.7 62.1h0M451.3 53.4h0M319.9 90.9h0M148.7 133.8h0M403.9 88.6h0M314.9 60.6h0M530.9 73.3h0M513.2 81.8h0M384.0 88.7h0M511.1 87.2h0M471.7 51.8h0M327.5 64.9h0M290.5 59.6h0M395.9 71.8h0M424.0 78.6h0M363.7 89.8h0M433.0 79.5h0M496.8 88.9h0M193.6 109.5h0M366.7 74.9h0M507.6 84.1h0M518.4 70.9h0M372.8 87.4h0M190.3 115.4h0M378.5 89.0h0M647.6 54.5h0M432.3 78.0h0M484.8 74.3h0M419.6 72.4h0M335.3 89.2h0M571.1 74.8h0M361.9 61.4h0M509.8 95.8h0M333.6 91.1h0M202.8 108.7h0M446.6 86.5h0M194.4 108.3h0M502.7 57.3h0M487.9 69.1h0M569.1 79.7h0M605.5 62.8h0M330.8 84.7h0M399.4 83.6h0M562.1 69.4h0M344.5 59.4h0M464.2 93.6h0M471.1 85.0h0M170.4 96.9h0M389.2 78.8h0M501.2 85.3h0M438.0 82.1h0M367.9 82.2h0M597.6 55.1h0M516.4 80.1h0M411.8 68.8h0M319.1 85.5h0M373.0 58.8h0M549.4 61.3h0M340.5 62.2h0M636.2 66.7h0M542.1 53.0h0M391.2 86.3h0M470.3 82.0h0M497.8 64.5h0M395.3 83.7h0M446.3 82.2h0M428.4 73.6h0M426.3 50.7h0M415.3 96.0h0M585.9 85.4h0M349.3 80.6h0M505.4 80.6h0M535.8 92.7h0M387.2 75.4h0M315.4 85.3h0M575.0 74.0h0M433.0 69.8h0M408.8 90.7h0M558.5 94.7h0M526.9 67.9h0M446.3 87.6h0M473.0 80.7h0M210.8 62.7h0M355.7 68.7h0M345.8 88.1h0M311.1 80.9h0M533.3 71.9h0M290.1 75.5h0M363.2 72.2h0M634.0 51.4h0M423.1 71.3h0M529.8 91.7h0M560.2 70.7h0M443.2 62.3h0M482.1 61.1h0M326.3 96.4h0M348.1 88.6h0M390.5 67.8h0M566.4 55.6h0M206.6 61.4h0M344.0 71.1h0M176.1 79.8h0M524.1 62.1h0M253.0 79.9h0M543.4 55.0h0M492.5 88.6h0M167.4 129.9h0M444.7 81.4h0M532.9 61.6h0M312.3 84.6h0M188.5 101.7h0M328.1 54.4h0M326.7 87.3h0M663.2 77.6h0M669.8 78.8h0M552.3 73.1h0M566.2 58.2h0M434.0 72.2h0M327.0 76.4h0M365.8 70.9h0M343.6 58.1h0M214.0 94.4h0M528.2 67.0h0M356.8 75.1h0M307.6 83.2h0M413.1 89.7h0M323.8 93.2h0M205.9 95.0h0M572.0 71.6h0M395.1 72.4h0M477.1 74.4h0M536.0 82.5h0M314.5 79.4h0M387.0 88.6h0M382.3 94.8h0M306.7 58.1h0M409.6 62.0h0M547.3 66.1h0M145.0 72.0h0M285.8 80.3h0M576.8 63.3h0M168.6 103.4h0M545.4 62.2h0M480.4 90.3h0M410.5 74.9h0M433.4 81.9h0M426.0 63.6h0M475.8 77.2h0M577.0 67.0h0M485.2 72.9h0M422.8 94.0h0M456.7 61.6h0M424.3 51.4h0M509.7 92.9h0M319.5 82.9h0M386.7 93.8h0M354.7 68.1h0M584.2 72.1h0M279.4 76.0h0M492.7 58.9h0M275.0 80.2h0M534.2 87.8h0M562.6 83.1h0M352.1 81.7h0M474.6 90.4h0M465.1 93.5h0M571.7 84.1h0M480.6 80.5h0M579.9 90.3h0M177.9 163.0h0M368.6 77.3h0M216.4 93.6h0M605.6 52.4h0M539.1 53.9h0M291.2 57.2h0M146.3 127.7h0M567.9 65.0h0M154.5 127.3h0M448.3 72.6h0M324.4 87.6h0M339.1 58.3h0M462.9 94.3h0M208.5 83.1h0M192.5 80.8h0M522.0 68.8h0M416.4 64.1h0M286.7 66.3h0M387.8 75.8h0M580.1 71.2h0M404.8 81.8h0M520.6 84.5h0M340.5 73.6h0M384.0 88.0h0M297.8 66.9h0M368.7 74.3h0M523.9 94.9h0M509.0 73.3h0M357.3 66.7h0M378.7 93.1h0M536.3 89.3h0M372.6 67.9h0M440.9 90.5h0M232.6 91.7h0M567.3 62.8h0M511.3 84.7h0M568.2 77.1h0M487.3 78.4h0M532.2 53.7h0M400.4 87.7h0M486.6 78.8h0M327.2 87.1h0M324.1 88.6h0M282.1 87.3h0M334.0 77.7h0M493.5 79.2h0M507.9 94.4h0M354.3 65.9h0M287.2 62.5h0M591.6 80.7h0M352.8 84.1h0M558.4 58.7h0M405.8 71.8h0M531.6 77.3h0M279.1 88.3h0M330.2 73.8h0M442.0 89.2h0M511.3 75.1h0M507.1 78.6h0M313.4 70.2h0M658.4 58.8h0M193.8 71.7h0M151.2 104.7h0M202.3 123.3h0M536.8 69.9h0M400.8 85.9h0M510.7 63.0h0M439.2 74.9h0M612.5 78.6h0M327.3 89.0h0M606.2 81.6h0M352.5 61.3h0M450.2 65.9h0M488.1 78.3h0M516.0 64.3h0M316.6 69.8h0M398.0 92.2h0M548.1 85.2h0M331.4 73.1h0M364.3 75.1h0M514.8 68.4h0M493.4 96.3h0M608.6 75.2h0M552.4 69.4h0M540.9 76.6h0M525.6 92.1h0M173.8 115.6h0M162.0 89.4h0M415.8 87.6h0M323.0 66.1h0M394.0 81.3h0M365.5 69.8h0M157.3 59.0h0M472.3 85.2h0M267.3 84.9h0M532.8 68.3h0M525.8 84.3h0M166.9 98.8h0M287.1 59.6h0M357.2 93.5h0M346.3 94.9h0M579.9 59.3h0M543.6 66.3h0M464.7 85.5h0M211.4 67.7h0M294.3 93.6h0M486.9 85.6h0M339.0 70.0h0M281.6 74.2h0M577.4 56.1h0M249.8 89.8h0M319.6 92.3h0M153.1 129.6h0M372.6 89.0h0M385.3 53.7h0M371.0 65.2h0M332.4 87.5h0M294.5 93.4h0M297.4 95.3h0M368.2 95.0h0M489.1 90.3h0M182.4 89.2h0M402.3 77.3h0M249.4 71.6h0M310.3 64.7h0M500.3 66.9h0M614.8 91.5h0M579.2 51.4h0M509.5 78.1h0M397.7 93.6h0M180.7 75.5h0M492.9 68.2h0M630.9 72.5h0M381.9 60.2h0M380.0 80.1h0M518.3 92.5h0M315.7 75.2h0M419.0 94.8h0M536.4 72.2h0M296.4 82.9h0M389.7 69.0h0M283.8 89.4h0M248.0 65.0h0M279.3 72.2h0M549.4 76.2h0M377.4 86.9h0M376.9 68.5h0M488.6 63.2h0M341.2 58.9h0M453.4 73.6h0M483.8 51.3h0M544.2 73.7h0M482.4 89.2h0M208.9 68.2h0M573.5 64.0h0M486.8 69.2h0M376.7 78.8h0M171.6 82.4h0M190.6 95.0h0M353.3 69.3h0M399.1 78.6h0M437.2 84.0h0M486.8 81.5h0M576.5 54.9h0M596.0 59.2h0M325.5 73.5h0M542.1 77.7h0M688.0 148.0h0M547.9 66.1h0M345.4 83.6h0M357.2 82.3h0M612.0 78.0h0M466.9 95.9h0M558.4 54.3h0M492.8 60.2h0M209.5 88.4h0M175.7 132.0h0M188.4 108.3h0M263.6 84.3h0M280.7 81.0h0M214.4 59.2h0M523.6 70.8h0M302.8 84.7h0M548.1 93.0h0M459.8 95.5h0M320.3 77.8h0M305.0 78.0h0M298.7 72.5h0M145.3 54.7h0M383.8 85.4h0M184.3 134.5h0M525.3 62.8h0M155.1 78.5h0M594.9 69.0h0M143.0 134.7h0M360.9 77.1h0M493.5 76.8h0M359.0 73.8h0M354.7 88.8h0M463.9 94.5h0M438.0 65.7h0M343.7 86.1h0M597.6 57.4h0M335.1 79.4h0M376.8 79.2h0M411.5 56.7h0M439.7 91.7h0M348.6 80.8h0M491.9 96.4h0M515.6 92.9h0M359.8 70.2h0M555.4 60.2h0M558.9 53.3h0M702.9 117.3h0M279.2 78.0h0M580.7 69.2h0M490.0 94.4h0M472.8 85.2h0M645.7 83.8h0M183.5 109.8h0M299.0 96.3h0M327.8 72.8h0M563.0 73.8h0M553.5 71.7h0M407.7 95.7h0M559.8 53.1h0" stroke="#a89654" stroke-opacity="0.5" stroke-width="1.0" stroke-linecap="round"/><path d="M619.5 77.4h0M382.2 78.2h0M368.5 69.3h0M174.9 87.3h0M191.9 102.9h0M560.1 58.8h0M678.7 125.8h0M474.6 75.6h0M374.3 76.8h0M334.0 91.4h0M321.2 83.9h0M335.2 83.3h0M357.6 80.2h0M376.2 91.7h0M343.1 86.4h0M477.5 78.4h0M402.7 79.1h0M308.5 87.9h0M186.4 100.3h0M392.0 75.2h0M433.3 90.3h0M561.5 60.2h0M431.5 94.7h0M330.9 69.1h0M488.0 92.2h0M607.8 91.0h0M597.7 67.8h0M524.7 67.5h0M539.5 85.3h0M544.1 83.1h0M589.1 67.9h0M506.2 89.8h0M439.7 57.5h0M675.4 116.2h0M335.1 92.4h0M414.1 71.8h0M358.9 51.4h0M401.1 78.5h0M373.0 66.9h0M197.6 153.4h0M526.3 77.9h0M570.6 82.3h0M546.8 76.7h0M436.0 61.1h0M515.3 78.4h0M410.7 93.6h0M545.7 80.5h0M459.5 89.0h0M539.2 82.7h0M559.8 56.8h0M587.0 61.0h0M429.6 86.1h0M355.6 64.5h0M296.4 82.4h0M584.6 72.5h0M385.1 68.8h0M521.2 64.3h0M529.7 78.8h0M548.7 90.7h0M586.4 50.9h0M499.3 73.3h0M509.7 60.8h0M546.3 68.5h0M354.3 74.4h0M447.3 91.6h0M410.5 75.3h0M291.2 92.7h0M457.5 63.6h0M205.0 53.7h0M395.3 67.6h0M551.6 61.7h0M291.8 83.0h0M326.9 96.1h0M603.3 57.6h0M400.0 70.3h0M536.3 62.5h0M276.5 70.5h0M496.3 90.3h0M287.7 84.5h0M202.0 129.2h0M499.9 82.5h0M288.7 75.3h0M494.5 84.3h0M407.7 89.3h0M166.1 85.4h0M520.6 77.5h0M471.6 64.9h0M294.6 90.6h0M316.7 55.5h0M225.2 73.7h0M342.3 76.7h0M548.7 82.5h0M472.7 87.4h0M592.7 69.5h0M449.2 81.0h0M526.6 76.1h0M464.5 52.2h0M349.4 60.2h0M305.5 77.0h0M184.8 90.8h0M379.7 92.7h0M182.9 51.1h0M299.6 60.7h0M498.1 88.6h0M575.4 65.6h0M582.8 58.2h0M393.7 74.7h0M582.0 63.4h0M592.9 67.5h0M478.9 52.0h0M509.7 62.9h0M651.4 63.3h0M365.7 76.5h0M213.8 68.4h0M323.9 70.0h0M583.6 79.5h0M579.7 74.6h0M325.7 96.3h0M186.1 55.2h0M371.3 80.2h0M339.8 92.9h0M296.4 92.9h0M644.7 83.8h0M584.2 54.7h0M510.9 88.5h0M324.0 73.0h0M397.6 91.3h0M165.5 78.0h0M339.5 73.7h0M172.3 131.6h0M543.8 62.3h0M293.5 84.7h0M454.3 82.9h0M203.2 113.0h0M344.9 93.8h0M358.1 67.7h0M173.3 65.8h0M380.0 73.7h0M156.6 191.3h0M343.4 80.9h0M586.2 77.0h0M630.3 67.6h0M527.4 76.8h0M191.3 74.0h0M571.7 81.6h0M306.1 90.8h0M345.9 52.8h0M655.6 63.3h0M385.2 66.0h0M503.6 54.4h0M203.3 124.7h0M591.2 69.1h0M327.2 81.8h0M362.7 53.2h0M168.9 82.0h0M331.9 84.6h0M480.4 91.3h0M596.9 59.4h0M384.2 66.8h0M438.0 92.1h0M307.7 86.0h0M203.7 113.3h0M399.7 67.3h0M462.1 74.4h0M332.9 59.8h0M420.5 93.7h0M260.5 88.5h0M306.6 70.9h0M226.9 73.9h0M559.8 69.2h0M416.2 96.6h0M516.1 81.0h0M476.2 79.1h0M512.1 77.8h0M319.4 84.1h0M409.8 95.0h0M578.1 77.9h0M559.9 74.2h0M543.8 71.4h0M513.2 92.9h0M429.9 96.9h0M564.6 78.0h0M405.4 65.9h0M489.9 95.0h0M410.6 77.1h0M351.1 87.3h0M420.1 77.3h0M356.3 94.3h0M274.8 66.5h0M527.0 62.4h0M346.5 77.9h0M589.5 85.2h0M446.8 53.6h0M521.2 67.8h0M533.9 82.1h0M539.2 79.4h0M277.5 92.4h0M466.9 67.2h0M420.1 68.5h0M532.9 68.9h0M364.6 88.3h0M482.2 85.7h0M436.5 80.4h0M378.7 69.0h0M556.6 56.0h0M437.8 70.5h0M548.9 86.7h0M541.6 81.0h0M424.5 87.4h0M201.1 75.8h0M175.8 57.5h0M412.0 91.1h0M155.2 93.6h0M424.5 84.3h0M327.2 87.1h0M376.2 65.8h0M390.8 61.7h0M513.2 92.0h0M617.2 76.5h0M296.0 72.4h0M407.6 90.9h0M386.3 92.2h0M380.1 90.7h0M567.5 89.5h0M558.0 81.3h0M435.2 87.3h0M384.3 64.0h0M568.3 82.0h0M711.6 73.6h0M377.9 75.1h0M364.5 76.6h0M567.0 76.6h0M456.6 54.6h0M416.6 75.8h0M542.7 84.0h0M306.3 95.1h0M336.7 67.5h0M209.5 67.2h0M483.0 79.8h0M525.0 88.4h0M395.0 74.3h0M559.2 80.2h0M281.9 88.6h0M193.6 111.2h0M376.2 83.6h0M559.2 56.0h0M340.0 83.4h0M436.2 79.7h0M428.6 69.0h0M351.1 74.3h0M202.9 110.6h0M366.1 77.6h0M411.8 95.7h0M334.5 95.1h0M331.4 86.7h0M541.5 53.5h0M595.2 72.3h0M497.8 58.5h0M368.8 59.7h0M324.3 95.4h0M202.8 108.0h0M557.6 61.4h0M142.3 73.4h0M539.7 84.2h0M152.6 105.0h0M377.0 77.3h0M387.5 74.3h0M520.7 74.2h0M449.5 80.9h0M442.3 68.2h0M600.3 72.1h0M596.4 64.6h0M428.7 88.9h0M483.4 59.3h0M438.5 91.9h0M516.0 70.9h0M256.1 54.1h0M440.8 80.4h0M643.1 76.1h0M507.2 86.3h0M392.9 85.0h0M335.1 95.3h0M555.1 76.3h0M578.9 71.5h0M326.1 53.3h0M595.7 65.4h0M329.0 95.4h0M489.5 74.2h0M468.3 92.2h0M588.5 72.2h0M360.7 87.1h0M561.1 60.7h0M552.8 68.5h0M335.7 72.6h0M619.4 51.4h0M526.8 85.6h0M455.2 62.9h0M338.8 61.2h0M359.7 83.2h0M414.5 62.4h0M266.8 74.4h0M576.1 64.9h0M169.8 162.5h0M293.5 96.3h0M306.0 56.3h0M184.8 97.9h0M491.9 90.7h0M523.6 83.3h0M306.4 73.2h0M356.9 59.6h0M516.0 72.3h0M306.2 76.7h0M502.6 91.1h0M386.6 82.8h0M410.4 83.8h0M363.2 85.3h0M335.3 90.9h0M509.3 83.6h0M525.3 64.7h0M567.6 93.9h0M531.3 58.4h0M516.7 83.3h0M181.3 141.0h0M369.7 53.8h0M512.4 96.1h0M314.1 86.6h0M393.6 81.1h0M165.2 84.9h0M339.8 56.2h0M193.8 103.0h0M465.8 92.5h0M512.1 74.8h0M397.2 58.8h0M551.0 76.0h0M395.0 57.5h0M491.7 83.2h0M405.1 88.6h0M519.0 76.3h0M285.9 82.4h0M575.9 57.3h0M422.8 68.8h0M519.3 90.7h0M427.3 94.4h0M488.4 54.4h0M314.1 89.9h0M455.3 85.4h0M422.2 84.8h0M194.9 108.3h0M646.6 64.7h0M225.8 62.0h0M584.0 76.9h0M358.0 71.2h0M545.2 89.0h0M541.1 61.9h0M397.3 72.2h0M390.1 86.5h0M534.1 90.3h0M391.0 88.1h0M472.9 72.1h0M544.8 59.8h0M317.6 93.4h0M641.5 70.6h0M329.3 66.5h0M524.2 63.1h0M690.8 107.7h0M214.8 51.5h0M433.2 83.9h0M561.5 66.6h0M556.3 59.1h0M513.8 59.4h0M317.8 82.2h0M471.3 83.7h0M533.9 80.4h0M524.7 81.3h0M493.7 73.9h0M187.2 92.6h0M425.5 96.2h0M462.9 63.5h0M528.9 64.3h0M556.9 73.8h0M510.9 94.0h0M279.7 82.8h0M333.9 70.9h0M561.3 69.5h0M199.8 138.1h0M515.8 73.3h0M510.0 95.1h0M304.2 69.7h0M520.4 86.1h0M463.6 71.9h0M581.8 64.2h0M498.9 62.8h0M387.1 87.8h0M578.6 65.3h0M447.6 95.3h0M526.3 65.9h0M580.5 73.3h0M394.2 59.2h0M422.6 89.7h0M445.1 83.6h0M574.9 61.0h0M400.5 86.4h0M486.8 93.8h0M483.9 71.6h0M513.9 97.0h0M281.2 78.2h0M304.0 81.3h0M386.6 87.9h0M525.9 88.5h0M333.1 90.7h0M212.6 82.0h0M158.6 107.6h0M640.8 63.8h0M433.9 95.7h0M341.6 81.3h0M534.0 58.8h0M375.0 75.2h0M485.2 71.0h0M399.7 85.1h0M387.5 59.3h0M604.3 63.9h0M206.0 79.6h0M584.7 64.7h0M466.7 71.0h0M531.5 72.5h0M550.4 69.9h0M516.9 64.7h0M548.6 78.9h0M312.2 83.4h0M197.7 68.3h0M518.7 95.4h0M333.7 87.7h0M525.2 96.5h0M475.8 86.9h0M265.9 80.1h0M572.4 69.3h0M484.2 73.3h0M493.3 83.0h0M507.6 96.9h0M477.7 89.9h0M428.7 84.3h0M583.0 61.0h0M329.1 92.7h0M281.4 68.4h0M492.6 53.6h0M211.6 75.6h0M421.5 65.3h0M624.4 60.6h0M281.4 76.3h0M394.8 92.5h0M332.4 93.8h0M524.5 91.9h0M481.9 88.3h0M382.4 89.9h0M422.5 75.2h0M198.8 111.3h0M544.4 52.3h0M374.5 69.3h0M370.1 75.7h0M225.5 70.6h0M337.6 56.4h0M574.8 74.6h0M521.4 76.7h0M218.6 59.3h0M320.1 81.9h0M566.9 77.9h0M585.6 58.9h0M493.6 83.4h0M541.2 74.9h0M273.7 91.8h0M367.0 74.4h0M474.7 91.2h0M369.6 73.6h0M535.1 61.6h0M465.5 88.1h0M477.3 89.8h0M305.2 91.8h0M538.2 94.8h0M356.4 75.3h0M363.3 87.4h0M518.6 92.1h0M313.4 79.4h0M413.8 69.7h0M591.5 70.0h0M269.9 76.7h0M498.9 92.9h0M384.7 68.4h0M305.1 63.1h0M702.0 91.0h0M442.9 73.7h0M551.9 64.6h0M426.2 80.4h0M205.6 94.7h0M683.8 72.0h0M516.3 84.6h0M334.6 95.8h0M530.9 78.3h0M147.4 127.9h0M319.6 82.2h0M563.3 67.5h0M405.7 74.3h0M333.8 58.7h0M431.0 86.8h0M530.0 72.5h0M426.4 95.3h0M335.5 92.8h0M485.5 65.0h0M362.3 61.6h0M303.9 74.5h0M482.7 69.5h0M513.2 85.1h0M372.3 72.2h0M529.7 72.3h0M463.2 88.2h0M401.5 78.2h0M540.3 61.4h0M164.3 86.9h0M457.3 71.9h0M618.6 60.3h0M445.7 86.7h0M326.3 92.8h0M567.6 87.7h0M299.4 64.7h0M558.6 58.9h0M457.6 64.9h0M550.8 81.5h0M414.6 69.3h0M378.5 69.8h0M399.0 86.0h0M582.3 69.7h0M630.8 75.7h0M535.1 77.8h0M413.7 73.9h0M663.0 67.1h0M495.3 95.7h0M367.8 90.4h0M533.2 74.5h0M507.3 87.2h0M313.7 93.8h0M345.0 89.4h0M453.8 83.4h0M309.7 85.1h0M654.9 50.7h0M420.1 50.8h0M425.3 76.5h0M439.9 94.4h0M518.4 91.3h0M358.4 96.9h0M437.5 96.8h0M333.1 78.2h0M358.2 80.5h0M400.6 62.7h0M179.7 166.6h0M548.3 83.3h0M388.4 70.4h0M571.2 54.8h0M174.9 90.2h0M598.2 61.8h0M377.3 51.9h0M442.4 79.6h0M433.0 68.8h0M375.6 81.4h0M411.2 57.8h0M552.1 87.0h0M189.9 79.8h0M475.0 71.5h0M549.3 86.9h0M202.4 65.1h0M579.5 67.8h0M207.5 73.7h0M442.9 79.2h0M601.9 68.9h0M143.7 109.2h0M332.2 93.0h0M416.9 65.7h0M404.7 72.8h0M301.1 96.0h0M291.6 96.7h0M399.4 78.7h0M522.0 84.0h0M408.8 85.2h0M342.7 57.6h0M578.5 82.4h0M364.7 60.7h0M469.9 91.7h0M536.8 92.7h0M590.4 75.1h0M385.2 84.1h0M518.4 64.3h0M510.5 87.5h0M362.9 63.5h0M352.5 91.2h0M428.7 84.5h0M279.8 88.9h0M452.1 74.5h0M259.7 93.2h0M354.6 75.9h0M428.5 53.7h0M381.4 77.0h0M373.3 67.5h0M538.8 70.3h0M268.9 83.4h0M685.6 98.9h0M186.2 130.8h0M368.1 74.0h0M337.5 81.5h0M570.2 92.5h0M366.9 64.1h0M376.7 73.4h0M194.6 87.0h0M387.2 74.7h0M235.0 91.5h0M405.0 64.9h0M491.4 85.5h0M444.3 65.0h0M393.1 68.8h0M400.1 83.3h0M395.3 84.9h0M339.0 78.0h0M536.1 70.4h0M381.1 80.9h0M411.2 85.9h0M406.3 77.4h0M478.6 91.6h0M543.7 76.9h0M614.6 61.1h0M389.3 81.9h0M554.5 57.9h0M600.3 57.0h0M710.1 119.3h0M305.5 76.6h0M542.3 96.7h0M436.0 65.9h0M312.8 64.1h0M342.7 72.0h0M463.2 65.2h0M370.2 94.0h0M412.0 92.1h0M411.9 86.9h0M546.6 78.7h0M339.8 78.7h0M592.9 57.4h0M306.2 70.6h0M518.9 87.0h0M281.8 85.9h0M526.9 75.9h0M619.0 63.7h0M362.4 96.1h0M578.5 68.8h0M519.6 83.0h0M620.3 59.2h0M166.7 109.7h0M621.6 54.5h0M301.0 77.3h0M499.2 94.7h0M291.8 84.5h0M544.6 73.0h0M358.8 58.8h0M157.3 58.0h0M572.0 65.1h0M561.5 78.1h0M566.8 78.8h0M395.0 85.1h0M515.7 88.2h0M515.3 77.3h0M493.0 64.6h0M552.9 83.7h0M341.1 89.7h0M339.1 64.0h0M503.7 72.3h0M445.3 65.0h0M546.7 60.7h0M540.5 65.1h0M261.1 78.5h0M553.1 64.4h0M329.0 81.1h0M199.3 99.6h0M514.2 80.3h0M366.8 82.6h0M458.4 91.4h0M616.5 73.4h0M412.1 95.4h0M373.1 76.7h0M557.7 81.3h0M173.6 104.7h0M479.1 82.6h0M180.0 88.9h0M456.0 86.7h0M442.5 96.1h0M496.2 67.6h0M142.0 79.3h0M281.6 81.0h0M261.6 59.3h0M389.8 74.3h0M275.3 57.6h0M388.7 94.7h0M526.5 56.8h0M282.7 89.6h0M580.9 70.2h0M303.9 81.0h0M422.1 87.1h0M320.1 59.9h0M504.7 96.0h0M551.5 60.1h0M260.6 50.8h0M469.8 66.6h0M575.1 63.6h0M472.9 93.3h0M374.2 79.3h0M481.1 93.3h0M180.7 93.8h0M370.0 76.2h0M454.3 61.7h0M559.1 93.1h0M347.8 76.1h0M511.4 81.1h0M431.0 92.1h0M198.0 124.5h0M508.7 81.9h0M480.1 55.8h0M144.6 91.2h0M496.1 73.5h0M305.4 88.1h0M515.1 82.5h0M321.6 84.6h0M318.9 63.5h0M337.4 87.0h0M456.2 69.9h0M205.9 154.8h0M655.6 55.9h0M436.6 80.6h0M414.2 65.1h0M370.4 89.8h0M511.8 96.2h0M161.5 129.5h0M454.8 87.5h0M354.8 62.1h0M256.1 79.8h0M620.7 74.4h0M510.9 84.7h0M427.1 59.5h0M465.9 96.9h0M325.8 57.3h0M591.9 65.1h0M479.8 84.7h0M394.4 77.3h0M571.9 62.2h0M528.3 67.8h0M387.1 75.2h0M173.4 116.1h0M173.9 169.8h0M291.4 91.6h0M536.6 60.3h0M356.0 86.4h0M516.1 91.0h0M437.9 59.7h0M331.0 67.9h0M338.7 64.9h0M431.2 94.5h0M525.2 67.7h0M571.8 55.1h0M337.1 58.0h0M707.8 112.7h0M502.5 78.1h0M354.7 72.2h0M540.3 50.6h0M472.1 82.7h0M452.2 84.7h0M518.4 77.9h0M415.0 90.7h0M311.6 85.1h0M338.2 60.7h0M574.3 66.0h0M399.4 78.6h0M285.0 92.6h0M502.0 94.2h0M671.8 89.9h0M538.6 72.1h0M585.8 79.9h0M329.9 85.9h0M356.9 79.4h0M582.4 57.9h0M580.0 70.5h0M146.7 78.1h0M602.5 75.7h0M313.4 83.7h0M300.9 74.2h0M558.4 67.4h0M518.5 94.9h0M526.0 64.4h0M455.1 66.8h0M205.4 118.7h0M473.8 81.9h0M612.4 83.0h0M578.7 95.0h0M340.9 56.6h0M536.8 83.1h0M404.9 81.4h0M592.6 69.6h0M147.5 76.9h0M380.2 93.8h0M569.3 73.0h0M367.5 86.5h0M271.0 65.9h0M536.0 74.5h0M392.7 84.0h0M327.1 63.0h0M358.3 73.7h0M479.5 71.6h0M358.9 76.7h0M346.9 88.5h0M484.8 88.1h0M428.8 81.9h0M196.5 121.0h0M366.1 96.8h0M516.4 63.4h0M301.8 69.0h0M387.7 66.1h0" stroke="#a89654" stroke-opacity="0.25" stroke-width="1.0" stroke-linecap="round"/><path d="M389.3 93.1h0M550.7 67.6h0M476.0 94.6h0M340.0 74.8h0M411.8 87.0h0M529.5 66.7h0M321.8 82.1h0M294.7 81.1h0M444.1 87.7h0M516.0 85.4h0M622.5 57.7h0M401.0 79.2h0M482.1 79.3h0M259.5 89.7h0M349.5 78.1h0M651.4 70.6h0M376.6 72.5h0M321.9 96.4h0M468.7 94.1h0M544.1 65.0h0M542.9 68.2h0M486.1 64.5h0M319.8 66.7h0M411.9 77.0h0M624.1 72.3h0M552.0 56.6h0M253.9 76.0h0M446.2 77.6h0M506.5 80.2h0M499.2 81.1h0M566.3 70.5h0M477.8 66.1h0M375.1 62.2h0M148.7 137.5h0M507.4 92.9h0M510.3 81.9h0M475.5 61.4h0M593.0 81.9h0M622.8 70.5h0M394.9 92.7h0M447.4 61.6h0M541.5 86.5h0M398.5 85.6h0M648.0 65.5h0M564.2 65.7h0M379.9 96.9h0M552.1 75.3h0M497.8 75.4h0M560.7 82.5h0M562.6 62.6h0M545.0 53.4h0M328.1 86.3h0M444.2 83.7h0M556.4 60.7h0M515.5 60.0h0M321.6 56.2h0M478.6 80.0h0M361.3 72.3h0M267.5 52.7h0M197.0 74.3h0M186.4 92.9h0M558.7 96.7h0M197.7 79.3h0M508.0 85.7h0M390.2 86.6h0M686.8 114.8h0M448.0 64.4h0M603.6 52.2h0M374.0 79.6h0M525.9 76.8h0M334.9 93.6h0M299.9 90.8h0M193.3 56.4h0M408.4 95.3h0M350.0 70.1h0M385.1 73.4h0M190.3 82.2h0M321.0 86.8h0M250.7 65.7h0M187.7 70.9h0M548.5 70.8h0M644.0 57.9h0M345.0 88.9h0M481.1 76.9h0M253.2 50.8h0M341.3 78.6h0M460.9 59.3h0M467.4 91.9h0M518.4 90.4h0M297.6 58.7h0M557.7 68.8h0M547.2 73.0h0M414.2 55.1h0M472.2 96.3h0M340.0 88.2h0M371.8 60.7h0M513.8 85.7h0M469.0 62.1h0M182.9 72.9h0M223.0 58.9h0M536.8 78.2h0M572.2 71.1h0M500.0 51.7h0M518.3 61.9h0M327.7 63.3h0M358.4 80.3h0M409.0 80.1h0M551.5 77.6h0M343.5 67.1h0M416.8 69.8h0M390.4 85.4h0M332.3 71.9h0M276.9 78.4h0M316.3 69.5h0M166.3 121.8h0M396.0 84.8h0M542.0 86.0h0M381.3 90.0h0M577.5 62.6h0M411.8 94.7h0M141.2 122.6h0M560.5 87.5h0M535.2 67.7h0M373.9 70.3h0M274.9 64.8h0M388.8 75.8h0M372.2 79.8h0M447.8 80.1h0M284.9 78.8h0M631.3 53.1h0M555.6 68.0h0M259.7 93.6h0M386.4 62.8h0M156.5 144.7h0M544.7 54.4h0M604.4 89.1h0M457.3 70.0h0M369.1 87.6h0M495.8 87.5h0M361.1 72.0h0M334.3 73.7h0M531.1 64.3h0M441.2 92.5h0M285.2 82.6h0M383.1 74.5h0M473.8 93.7h0M623.2 54.8h0M324.2 75.2h0M166.2 53.8h0M281.6 73.5h0M455.7 76.2h0M140.4 90.6h0M203.5 115.8h0M305.5 91.5h0M167.6 54.2h0M201.4 115.8h0M440.6 70.1h0M540.5 64.8h0M562.7 80.8h0M347.4 68.3h0M401.3 61.0h0M463.8 57.1h0M465.0 81.1h0M353.6 58.4h0M528.7 66.9h0M313.0 68.1h0M385.1 95.6h0M308.0 77.9h0M222.3 57.1h0M476.6 86.7h0M559.6 59.8h0M500.6 81.5h0M312.9 85.9h0M401.4 91.4h0M286.2 89.1h0M311.9 62.9h0M306.5 80.1h0M331.8 95.1h0M430.6 72.7h0M483.9 70.6h0M526.1 74.8h0M375.1 81.8h0M431.9 83.9h0M417.7 78.4h0M336.2 90.3h0M321.1 93.6h0M567.1 56.0h0M329.1 59.6h0M549.4 59.0h0M621.5 79.1h0M205.6 108.0h0M562.7 96.8h0M389.7 90.9h0M556.4 68.6h0M463.9 79.5h0M409.0 93.5h0M199.1 118.2h0M437.0 86.8h0M275.4 87.4h0M316.9 63.3h0M522.1 82.7h0M354.2 82.7h0M547.4 89.7h0M196.1 69.0h0M552.8 75.5h0M375.4 91.9h0M502.5 63.3h0M534.7 66.7h0M357.4 71.9h0M532.5 55.0h0M354.8 70.7h0M182.7 107.2h0M640.2 56.4h0M492.3 83.4h0M411.6 75.6h0M611.8 60.7h0M297.5 81.1h0M431.2 96.9h0M382.8 81.1h0M522.2 80.9h0M539.4 76.3h0M431.4 88.1h0M531.3 81.8h0M396.7 83.1h0M522.5 86.6h0M325.3 75.3h0M174.4 94.9h0M575.5 65.2h0M491.0 89.8h0M607.7 70.4h0M404.1 67.0h0M330.9 70.0h0M439.7 95.5h0M453.6 61.3h0M577.3 65.3h0M362.7 96.6h0M364.2 78.8h0M387.4 68.8h0M365.7 72.0h0M171.1 127.6h0M399.5 76.9h0M323.3 56.3h0M424.3 91.5h0M397.7 62.5h0M338.4 69.9h0M579.9 76.2h0M407.4 86.4h0M526.5 79.5h0M493.2 95.1h0M648.7 79.8h0M468.9 94.0h0M582.4 79.3h0M561.8 69.0h0M392.6 70.0h0M562.5 87.9h0M311.7 87.1h0M429.6 84.0h0M297.6 84.9h0M390.4 87.6h0M294.5 86.1h0M268.8 61.2h0M390.3 74.4h0M326.3 80.9h0M414.3 72.4h0M528.1 73.8h0M525.1 83.9h0M501.1 71.1h0M351.8 57.9h0M325.2 88.0h0M400.8 96.6h0M402.0 65.1h0M357.0 90.1h0M503.2 68.7h0M510.0 96.7h0M391.8 78.8h0M576.1 93.0h0M512.5 79.7h0M449.5 85.8h0M354.9 78.5h0M288.3 78.8h0M392.8 62.5h0M152.1 106.1h0M512.5 90.6h0M531.3 78.5h0M468.5 92.1h0M534.0 81.4h0M342.2 90.0h0M512.1 55.9h0M359.1 83.7h0M200.2 164.5h0M169.1 109.7h0M309.3 73.2h0M146.1 126.3h0M468.8 51.9h0M342.6 96.4h0M162.6 95.3h0M630.8 76.8h0M394.5 90.6h0M403.0 70.1h0M423.7 96.6h0M507.7 91.7h0M307.1 94.1h0M611.7 59.4h0M185.2 118.4h0M335.0 82.6h0M454.6 87.7h0M578.1 60.9h0M365.9 91.4h0M324.9 88.7h0M161.8 149.2h0M379.2 59.7h0M476.7 74.6h0M412.1 94.4h0M349.6 84.0h0M389.8 62.7h0M176.5 96.2h0M377.9 56.1h0M148.3 79.4h0M177.0 166.8h0M383.4 53.6h0M434.0 60.0h0M542.9 95.0h0M373.5 90.8h0M579.1 62.7h0M341.8 79.5h0M489.8 80.0h0M467.2 69.2h0M194.7 111.8h0M535.4 65.4h0M166.9 124.6h0M217.1 92.0h0M559.2 81.7h0M277.4 89.6h0M432.4 58.6h0M527.3 72.4h0M570.3 66.5h0M524.9 53.2h0M203.6 119.2h0M366.9 89.6h0M519.1 52.1h0M358.8 72.2h0M363.7 60.7h0M420.9 81.4h0M339.6 70.5h0M262.4 90.0h0M425.5 85.0h0M706.9 54.8h0M412.8 94.2h0M407.9 78.0h0M296.3 87.4h0M595.1 65.5h0M478.5 95.8h0M315.9 70.5h0M505.0 60.6h0M187.5 92.2h0M486.3 64.2h0M274.2 57.2h0M520.1 63.5h0M337.9 59.1h0M507.6 69.3h0M466.7 78.3h0M401.5 89.6h0M353.6 64.4h0M561.2 59.2h0M353.7 74.7h0M401.8 94.6h0M193.9 107.6h0M497.7 77.0h0M401.4 80.1h0M540.7 73.7h0M286.7 78.3h0M351.0 91.7h0M555.3 92.9h0M552.2 70.3h0M189.9 69.2h0M470.3 90.4h0M491.1 74.4h0M501.0 89.7h0M328.4 72.9h0M200.8 98.1h0M545.9 51.1h0M474.8 78.0h0M385.1 90.9h0M190.2 116.1h0M350.8 67.9h0M367.4 87.0h0M397.4 90.5h0M400.7 71.2h0M612.0 51.0h0M392.6 94.0h0M578.8 93.9h0M389.4 93.8h0M443.5 82.4h0M286.8 64.2h0M379.2 74.0h0M181.8 128.8h0M344.6 72.0h0M349.3 62.5h0M407.0 82.9h0M593.7 60.5h0M523.6 72.3h0M395.2 87.0h0M406.7 78.1h0M305.9 64.4h0M567.2 58.3h0M483.8 69.6h0M446.2 85.5h0M624.5 90.4h0M425.5 93.6h0M332.8 66.4h0M460.0 91.3h0M476.2 54.9h0M323.5 85.8h0M353.2 92.5h0M455.0 96.2h0M501.5 93.3h0M414.2 64.7h0M427.7 66.3h0M554.9 74.7h0M362.9 70.2h0M369.7 87.8h0M548.2 69.4h0M276.0 76.7h0M466.5 86.5h0M426.4 70.0h0M190.1 127.4h0M375.4 84.3h0M493.7 79.3h0M537.4 83.4h0M539.8 86.9h0M478.7 81.4h0M353.2 77.2h0M561.9 54.5h0M580.2 79.6h0M464.2 89.3h0M519.0 92.2h0M521.5 80.4h0M361.0 87.3h0M482.9 52.5h0M669.6 56.5h0M554.6 87.9h0M567.0 65.6h0M602.1 68.3h0M375.0 93.8h0M408.0 62.3h0M560.3 57.3h0M520.8 63.4h0M342.5 88.9h0M418.0 67.0h0M644.1 86.0h0M476.9 78.5h0M520.1 93.9h0M476.5 76.4h0M556.7 72.3h0M558.0 60.4h0M292.5 55.3h0M445.0 60.2h0M354.2 79.5h0M460.3 72.5h0M428.4 83.5h0M552.6 64.7h0M187.8 114.0h0M643.4 76.2h0M493.5 73.2h0M591.0 67.8h0M618.9 57.7h0M519.9 71.3h0M569.5 70.5h0M554.6 64.3h0M496.5 86.8h0M398.7 77.2h0M476.7 76.5h0M402.9 77.5h0M514.5 82.9h0M573.8 64.2h0M516.9 77.2h0M454.9 65.1h0M328.8 83.9h0M193.2 83.8h0M346.6 85.2h0M335.6 66.1h0M168.6 126.4h0M632.5 61.7h0M288.1 62.2h0M351.0 84.8h0M493.0 93.0h0M573.2 75.5h0M489.9 95.3h0M502.9 52.9h0M445.2 81.2h0M374.1 88.7h0M556.4 91.8h0M372.1 76.6h0M490.2 76.3h0M284.0 59.4h0M595.6 71.5h0M579.6 66.9h0M353.7 57.6h0M443.6 92.6h0M628.8 65.1h0M512.1 58.7h0M522.0 53.0h0M190.8 111.5h0M648.5 81.7h0M571.8 83.8h0M202.0 147.9h0M543.2 72.1h0M383.0 78.1h0M425.4 83.7h0M501.4 81.0h0M349.6 57.2h0M479.1 59.2h0M315.0 71.8h0M355.8 64.5h0M415.1 57.3h0M621.2 73.7h0M509.3 90.7h0M398.5 94.8h0M427.1 66.7h0M470.8 87.1h0M323.1 95.8h0M159.1 74.8h0M271.8 95.4h0M515.2 85.7h0M505.2 87.3h0M340.8 64.3h0M504.2 80.5h0M510.4 91.6h0M560.4 53.4h0M356.9 64.6h0M468.4 67.8h0M505.8 59.7h0M472.4 80.4h0M282.9 92.8h0M475.2 87.2h0M177.9 57.1h0M445.8 84.3h0M478.4 75.8h0M504.6 81.5h0M475.5 89.3h0M615.8 83.7h0M547.9 77.9h0M334.4 70.6h0M479.9 51.8h0M397.5 54.7h0M328.3 87.5h0M476.2 79.6h0M517.0 74.3h0M513.3 80.5h0M501.6 60.4h0M601.2 56.6h0M583.5 75.6h0M540.2 89.1h0M579.3 91.3h0M387.4 87.9h0M390.7 86.0h0M514.3 95.0h0M370.1 52.2h0M194.6 111.8h0M388.2 73.8h0M333.2 91.1h0M574.7 93.2h0M342.6 69.0h0M602.0 79.7h0M598.5 57.0h0M323.0 80.4h0M396.9 62.3h0M588.4 69.1h0M524.5 63.2h0M266.2 86.8h0M381.3 77.4h0M314.9 92.7h0M178.2 96.9h0M616.1 69.7h0M337.1 59.0h0M387.9 80.9h0M193.1 108.0h0M337.5 92.5h0M397.3 63.4h0M458.3 89.9h0M513.1 92.8h0M190.5 103.4h0M430.4 59.6h0M376.7 68.8h0M541.5 69.8h0M163.8 107.8h0M411.3 93.6h0M346.5 74.8h0M314.8 71.3h0M173.4 121.2h0M344.5 74.6h0M332.3 73.4h0M569.3 81.0h0M422.8 95.7h0M482.4 53.5h0M553.0 88.6h0M311.7 74.5h0M440.8 55.7h0M408.0 88.8h0M416.3 77.9h0M348.6 91.8h0M547.5 56.9h0M321.3 76.3h0M181.6 163.1h0M420.1 68.2h0M550.1 65.8h0M550.3 90.9h0M230.8 77.9h0M376.6 69.5h0M295.1 69.7h0M568.4 96.8h0M285.8 79.8h0M338.6 67.0h0M392.4 70.4h0M343.7 54.4h0M681.6 133.7h0M536.3 55.1h0M356.7 96.4h0M338.5 64.3h0M486.9 83.0h0M240.2 94.1h0M378.1 82.7h0M180.5 53.0h0M362.5 72.6h0M542.0 93.1h0M386.5 72.4h0M503.0 93.2h0M528.3 96.2h0M368.2 87.5h0M561.5 76.4h0M350.9 60.1h0M294.7 74.0h0M325.5 75.8h0M424.6 88.5h0M492.6 76.7h0M383.5 74.4h0M444.9 91.8h0M325.7 96.5h0M410.9 85.1h0M326.2 93.4h0M534.4 70.7h0M492.4 87.4h0M364.0 78.7h0M330.6 66.0h0M594.4 69.1h0M435.5 87.9h0M395.1 95.3h0M584.2 61.2h0M410.1 71.8h0M502.0 95.7h0M620.9 52.4h0M171.0 144.5h0M693.0 66.2h0M369.3 90.0h0M284.5 62.5h0M313.6 93.2h0M605.5 70.6h0M385.0 55.3h0M596.5 77.2h0M460.7 82.6h0M475.7 93.1h0M476.1 74.3h0M518.1 57.2h0M276.6 95.5h0M284.7 81.6h0M274.7 87.0h0M447.3 88.0h0M391.2 73.5h0M344.5 64.3h0M552.5 77.6h0M386.8 88.3h0M500.8 89.4h0M445.4 70.6h0M517.7 73.0h0M298.9 96.3h0M575.7 71.4h0M601.6 74.6h0M322.6 97.0h0M473.6 71.7h0M422.6 79.5h0M194.1 166.8h0M306.9 76.1h0M502.0 52.6h0M183.3 120.4h0M330.8 57.5h0M175.9 151.4h0M409.7 91.6h0M369.2 94.7h0M563.0 86.8h0M540.6 73.7h0M426.9 66.6h0M363.6 96.3h0M352.6 64.0h0M564.0 64.5h0M354.4 65.4h0M570.3 73.3h0M163.1 134.2h0M159.9 161.2h0M236.2 54.3h0M290.1 86.0h0M564.2 69.8h0M463.8 74.4h0M460.1 60.6h0M365.0 70.6h0M536.3 51.6h0M342.9 81.8h0M411.3 70.5h0M464.4 57.1h0M440.9 70.7h0M550.6 65.0h0M278.9 88.0h0M363.7 70.7h0M340.4 96.6h0M304.1 91.4h0M583.1 86.4h0M399.9 86.9h0M578.5 80.5h0M518.8 67.3h0M278.6 93.6h0M566.4 77.8h0M279.5 67.0h0M480.2 69.5h0M563.4 62.0h0M564.4 70.6h0M450.0 73.0h0M537.0 64.5h0M355.1 72.0h0M418.9 85.5h0M428.0 67.5h0M193.9 72.8h0M504.7 50.8h0M516.2 66.5h0M177.9 172.1h0M436.3 62.0h0M173.9 99.3h0M542.0 74.9h0M438.9 92.1h0M558.6 65.7h0M378.7 87.8h0M195.3 67.2h0M296.1 69.1h0M198.8 118.1h0M461.1 88.4h0M467.8 85.0h0M436.9 73.9h0M369.5 69.4h0M313.1 73.1h0M316.5 80.3h0M358.3 73.0h0M165.7 171.4h0M637.0 64.5h0M335.7 94.2h0M604.2 61.2h0M328.5 67.8h0M509.1 77.8h0M470.3 56.5h0M604.3 77.2h0M383.8 85.9h0M362.2 80.7h0M571.1 59.5h0M485.5 64.4h0M428.6 84.8h0M369.7 66.6h0M446.8 92.7h0M511.6 68.5h0M465.3 79.5h0M359.2 96.2h0M536.8 67.7h0" stroke="#a89654" stroke-opacity="0.15" stroke-width="0.7" stroke-linecap="round"/>
</g>
</svg>
<div class="a" style="left:208.2px;top:97px;width:454.8px;height:296px;background:#fff"></div>
<svg width="800" height="450" viewBox="0 0 800 450">
<path d="M217.4,99.5h0.01 M217.4,109.2h0.01 M217.4,118.8h0.01 M217.4,128.5h0.01 M217.4,138.1h0.01 M217.4,147.8h0.01 M217.4,157.5h0.01 M217.4,167.1h0.01 M217.4,176.8h0.01 M217.4,186.5h0.01 M217.4,196.1h0.01 M217.4,205.8h0.01 M217.4,215.4h0.01 M217.4,225.1h0.01 M217.4,234.8h0.01 M217.4,244.4h0.01 M217.4,254.1h0.01 M217.4,263.8h0.01 M217.4,273.4h0.01 M217.4,283.1h0.01 M217.4,292.7h0.01 M217.4,302.4h0.01 M217.4,312.1h0.01 M217.4,321.7h0.01 M217.4,331.4h0.01 M217.4,341.1h0.01 M217.4,350.7h0.01 M217.4,360.4h0.01 M217.4,370.0h0.01 M217.4,379.7h0.01 M217.4,389.4h0.01 M227.1,99.5h0.01 M227.1,109.2h0.01 M227.1,118.8h0.01 M227.1,128.5h0.01 M227.1,138.1h0.01 M227.1,147.8h0.01 M227.1,157.5h0.01 M227.1,167.1h0.01 M227.1,176.8h0.01 M227.1,186.5h0.01 M227.1,196.1h0.01 M227.1,205.8h0.01 M227.1,215.4h0.01 M227.1,225.1h0.01 M227.1,234.8h0.01 M227.1,244.4h0.01 M227.1,254.1h0.01 M227.1,263.8h0.01 M227.1,273.4h0.01 M227.1,283.1h0.01 M227.1,292.7h0.01 M227.1,302.4h0.01 M227.1,312.1h0.01 M227.1,321.7h0.01 M227.1,331.4h0.01 M227.1,341.1h0.01 M227.1,350.7h0.01 M227.1,360.4h0.01 M227.1,370.0h0.01 M227.1,379.7h0.01 M227.1,389.4h0.01 M236.7,99.5h0.01 M236.7,109.2h0.01 M236.7,118.8h0.01 M236.7,128.5h0.01 M236.7,138.1h0.01 M236.7,147.8h0.01 M236.7,157.5h0.01 M236.7,167.1h0.01 M236.7,176.8h0.01 M236.7,186.5h0.01 M236.7,196.1h0.01 M236.7,205.8h0.01 M236.7,215.4h0.01 M236.7,225.1h0.01 M236.7,234.8h0.01 M236.7,244.4h0.01 M236.7,254.1h0.01 M236.7,263.8h0.01 M236.7,273.4h0.01 M236.7,283.1h0.01 M236.7,292.7h0.01 M236.7,302.4h0.01 M236.7,312.1h0.01 M236.7,321.7h0.01 M236.7,331.4h0.01 M236.7,341.1h0.01 M236.7,350.7h0.01 M236.7,360.4h0.01 M236.7,370.0h0.01 M236.7,379.7h0.01 M236.7,389.4h0.01 M246.4,99.5h0.01 M246.4,109.2h0.01 M246.4,118.8h0.01 M246.4,128.5h0.01 M246.4,138.1h0.01 M246.4,147.8h0.01 M246.4,157.5h0.01 M246.4,167.1h0.01 M246.4,176.8h0.01 M246.4,186.5h0.01 M246.4,196.1h0.01 M246.4,205.8h0.01 M246.4,215.4h0.01 M246.4,225.1h0.01 M246.4,234.8h0.01 M246.4,244.4h0.01 M246.4,254.1h0.01 M246.4,263.8h0.01 M246.4,273.4h0.01 M246.4,283.1h0.01 M246.4,292.7h0.01 M246.4,302.4h0.01 M246.4,312.1h0.01 M246.4,321.7h0.01 M246.4,331.4h0.01 M246.4,341.1h0.01 M246.4,350.7h0.01 M246.4,360.4h0.01 M246.4,370.0h0.01 M246.4,379.7h0.01 M246.4,389.4h0.01 M256.0,99.5h0.01 M256.0,109.2h0.01 M256.0,118.8h0.01 M256.0,128.5h0.01 M256.0,138.1h0.01 M256.0,147.8h0.01 M256.0,157.5h0.01 M256.0,167.1h0.01 M256.0,176.8h0.01 M256.0,186.5h0.01 M256.0,196.1h0.01 M256.0,205.8h0.01 M256.0,215.4h0.01 M256.0,225.1h0.01 M256.0,234.8h0.01 M256.0,244.4h0.01 M256.0,254.1h0.01 M256.0,263.8h0.01 M256.0,273.4h0.01 M256.0,283.1h0.01 M256.0,292.7h0.01 M256.0,302.4h0.01 M256.0,312.1h0.01 M256.0,321.7h0.01 M256.0,331.4h0.01 M256.0,341.1h0.01 M256.0,350.7h0.01 M256.0,360.4h0.01 M256.0,370.0h0.01 M256.0,379.7h0.01 M256.0,389.4h0.01 M265.7,99.5h0.01 M265.7,109.2h0.01 M265.7,118.8h0.01 M265.7,128.5h0.01 M265.7,138.1h0.01 M265.7,147.8h0.01 M265.7,157.5h0.01 M265.7,167.1h0.01 M265.7,176.8h0.01 M265.7,186.5h0.01 M265.7,196.1h0.01 M265.7,205.8h0.01 M265.7,215.4h0.01 M265.7,225.1h0.01 M265.7,234.8h0.01 M265.7,244.4h0.01 M265.7,254.1h0.01 M265.7,263.8h0.01 M265.7,273.4h0.01 M265.7,283.1h0.01 M265.7,292.7h0.01 M265.7,302.4h0.01 M265.7,312.1h0.01 M265.7,321.7h0.01 M265.7,331.4h0.01 M265.7,341.1h0.01 M265.7,350.7h0.01 M265.7,360.4h0.01 M265.7,370.0h0.01 M265.7,379.7h0.01 M265.7,389.4h0.01 M275.4,99.5h0.01 M275.4,109.2h0.01 M275.4,118.8h0.01 M275.4,128.5h0.01 M275.4,138.1h0.01 M275.4,147.8h0.01 M275.4,157.5h0.01 M275.4,167.1h0.01 M275.4,176.8h0.01 M275.4,186.5h0.01 M275.4,196.1h0.01 M275.4,205.8h0.01 M275.4,215.4h0.01 M275.4,225.1h0.01 M275.4,234.8h0.01 M275.4,244.4h0.01 M275.4,254.1h0.01 M275.4,263.8h0.01 M275.4,273.4h0.01 M275.4,283.1h0.01 M275.4,292.7h0.01 M275.4,302.4h0.01 M275.4,312.1h0.01 M275.4,321.7h0.01 M275.4,331.4h0.01 M275.4,341.1h0.01 M275.4,350.7h0.01 M275.4,360.4h0.01 M275.4,370.0h0.01 M275.4,379.7h0.01 M275.4,389.4h0.01 M285.0,99.5h0.01 M285.0,109.2h0.01 M285.0,118.8h0.01 M285.0,128.5h0.01 M285.0,138.1h0.01 M285.0,147.8h0.01 M285.0,157.5h0.01 M285.0,167.1h0.01 M285.0,176.8h0.01 M285.0,186.5h0.01 M285.0,196.1h0.01 M285.0,205.8h0.01 M285.0,215.4h0.01 M285.0,225.1h0.01 M285.0,234.8h0.01 M285.0,244.4h0.01 M285.0,254.1h0.01 M285.0,263.8h0.01 M285.0,273.4h0.01 M285.0,283.1h0.01 M285.0,292.7h0.01 M285.0,302.4h0.01 M285.0,312.1h0.01 M285.0,321.7h0.01 M285.0,331.4h0.01 M285.0,341.1h0.01 M285.0,350.7h0.01 M285.0,360.4h0.01 M285.0,370.0h0.01 M285.0,379.7h0.01 M285.0,389.4h0.01 M294.7,99.5h0.01 M294.7,109.2h0.01 M294.7,118.8h0.01 M294.7,128.5h0.01 M294.7,138.1h0.01 M294.7,147.8h0.01 M294.7,157.5h0.01 M294.7,167.1h0.01 M294.7,176.8h0.01 M294.7,186.5h0.01 M294.7,196.1h0.01 M294.7,205.8h0.01 M294.7,215.4h0.01 M294.7,225.1h0.01 M294.7,234.8h0.01 M294.7,244.4h0.01 M294.7,254.1h0.01 M294.7,263.8h0.01 M294.7,273.4h0.01 M294.7,283.1h0.01 M294.7,292.7h0.01 M294.7,302.4h0.01 M294.7,312.1h0.01 M294.7,321.7h0.01 M294.7,331.4h0.01 M294.7,341.1h0.01 M294.7,350.7h0.01 M294.7,360.4h0.01 M294.7,370.0h0.01 M294.7,379.7h0.01 M294.7,389.4h0.01 M304.4,99.5h0.01 M304.4,109.2h0.01 M304.4,118.8h0.01 M304.4,128.5h0.01 M304.4,138.1h0.01 M304.4,147.8h0.01 M304.4,157.5h0.01 M304.4,167.1h0.01 M304.4,176.8h0.01 M304.4,186.5h0.01 M304.4,196.1h0.01 M304.4,205.8h0.01 M304.4,215.4h0.01 M304.4,225.1h0.01 M304.4,234.8h0.01 M304.4,244.4h0.01 M304.4,254.1h0.01 M304.4,263.8h0.01 M304.4,273.4h0.01 M304.4,283.1h0.01 M304.4,292.7h0.01 M304.4,302.4h0.01 M304.4,312.1h0.01 M304.4,321.7h0.01 M304.4,331.4h0.01 M304.4,341.1h0.01 M304.4,350.7h0.01 M304.4,360.4h0.01 M304.4,370.0h0.01 M304.4,379.7h0.01 M304.4,389.4h0.01 M314.0,99.5h0.01 M314.0,109.2h0.01 M314.0,118.8h0.01 M314.0,128.5h0.01 M314.0,138.1h0.01 M314.0,147.8h0.01 M314.0,157.5h0.01 M314.0,167.1h0.01 M314.0,176.8h0.01 M314.0,186.5h0.01 M314.0,196.1h0.01 M314.0,205.8h0.01 M314.0,215.4h0.01 M314.0,225.1h0.01 M314.0,234.8h0.01 M314.0,244.4h0.01 M314.0,254.1h0.01 M314.0,263.8h0.01 M314.0,273.4h0.01 M314.0,283.1h0.01 M314.0,292.7h0.01 M314.0,302.4h0.01 M314.0,312.1h0.01 M314.0,321.7h0.01 M314.0,331.4h0.01 M314.0,341.1h0.01 M314.0,350.7h0.01 M314.0,360.4h0.01 M314.0,370.0h0.01 M314.0,379.7h0.01 M314.0,389.4h0.01 M323.7,99.5h0.01 M323.7,109.2h0.01 M323.7,118.8h0.01 M323.7,128.5h0.01 M323.7,138.1h0.01 M323.7,147.8h0.01 M323.7,157.5h0.01 M323.7,167.1h0.01 M323.7,176.8h0.01 M323.7,186.5h0.01 M323.7,196.1h0.01 M323.7,205.8h0.01 M323.7,215.4h0.01 M323.7,225.1h0.01 M323.7,234.8h0.01 M323.7,244.4h0.01 M323.7,254.1h0.01 M323.7,263.8h0.01 M323.7,273.4h0.01 M323.7,283.1h0.01 M323.7,292.7h0.01 M323.7,302.4h0.01 M323.7,312.1h0.01 M323.7,321.7h0.01 M323.7,331.4h0.01 M323.7,341.1h0.01 M323.7,350.7h0.01 M323.7,360.4h0.01 M323.7,370.0h0.01 M323.7,379.7h0.01 M323.7,389.4h0.01 M333.3,99.5h0.01 M333.3,109.2h0.01 M333.3,118.8h0.01 M333.3,128.5h0.01 M333.3,138.1h0.01 M333.3,147.8h0.01 M333.3,157.5h0.01 M333.3,167.1h0.01 M333.3,176.8h0.01 M333.3,186.5h0.01 M333.3,196.1h0.01 M333.3,205.8h0.01 M333.3,215.4h0.01 M333.3,225.1h0.01 M333.3,234.8h0.01 M333.3,244.4h0.01 M333.3,254.1h0.01 M333.3,263.8h0.01 M333.3,273.4h0.01 M333.3,283.1h0.01 M333.3,292.7h0.01 M333.3,302.4h0.01 M333.3,312.1h0.01 M333.3,321.7h0.01 M333.3,331.4h0.01 M333.3,341.1h0.01 M333.3,350.7h0.01 M333.3,360.4h0.01 M333.3,370.0h0.01 M333.3,379.7h0.01 M333.3,389.4h0.01 M343.0,99.5h0.01 M343.0,109.2h0.01 M343.0,118.8h0.01 M343.0,128.5h0.01 M343.0,138.1h0.01 M343.0,147.8h0.01 M343.0,157.5h0.01 M343.0,167.1h0.01 M343.0,176.8h0.01 M343.0,186.5h0.01 M343.0,196.1h0.01 M343.0,205.8h0.01 M343.0,215.4h0.01 M343.0,225.1h0.01 M343.0,234.8h0.01 M343.0,244.4h0.01 M343.0,254.1h0.01 M343.0,263.8h0.01 M343.0,273.4h0.01 M343.0,283.1h0.01 M343.0,292.7h0.01 M343.0,302.4h0.01 M343.0,312.1h0.01 M343.0,321.7h0.01 M343.0,331.4h0.01 M343.0,341.1h0.01 M343.0,350.7h0.01 M343.0,360.4h0.01 M343.0,370.0h0.01 M343.0,379.7h0.01 M343.0,389.4h0.01 M352.7,99.5h0.01 M352.7,109.2h0.01 M352.7,118.8h0.01 M352.7,128.5h0.01 M352.7,138.1h0.01 M352.7,147.8h0.01 M352.7,157.5h0.01 M352.7,167.1h0.01 M352.7,176.8h0.01 M352.7,186.5h0.01 M352.7,196.1h0.01 M352.7,205.8h0.01 M352.7,215.4h0.01 M352.7,225.1h0.01 M352.7,234.8h0.01 M352.7,244.4h0.01 M352.7,254.1h0.01 M352.7,263.8h0.01 M352.7,273.4h0.01 M352.7,283.1h0.01 M352.7,292.7h0.01 M352.7,302.4h0.01 M352.7,312.1h0.01 M352.7,321.7h0.01 M352.7,331.4h0.01 M352.7,341.1h0.01 M352.7,350.7h0.01 M352.7,360.4h0.01 M352.7,370.0h0.01 M352.7,379.7h0.01 M352.7,389.4h0.01 M362.3,99.5h0.01 M362.3,109.2h0.01 M362.3,118.8h0.01 M362.3,128.5h0.01 M362.3,138.1h0.01 M362.3,147.8h0.01 M362.3,157.5h0.01 M362.3,167.1h0.01 M362.3,176.8h0.01 M362.3,186.5h0.01 M362.3,196.1h0.01 M362.3,205.8h0.01 M362.3,215.4h0.01 M362.3,225.1h0.01 M362.3,234.8h0.01 M362.3,244.4h0.01 M362.3,254.1h0.01 M362.3,263.8h0.01 M362.3,273.4h0.01 M362.3,283.1h0.01 M362.3,292.7h0.01 M362.3,302.4h0.01 M362.3,312.1h0.01 M362.3,321.7h0.01 M362.3,331.4h0.01 M362.3,341.1h0.01 M362.3,350.7h0.01 M362.3,360.4h0.01 M362.3,370.0h0.01 M362.3,379.7h0.01 M362.3,389.4h0.01 M372.0,99.5h0.01 M372.0,109.2h0.01 M372.0,118.8h0.01 M372.0,128.5h0.01 M372.0,138.1h0.01 M372.0,147.8h0.01 M372.0,157.5h0.01 M372.0,167.1h0.01 M372.0,176.8h0.01 M372.0,186.5h0.01 M372.0,196.1h0.01 M372.0,205.8h0.01 M372.0,215.4h0.01 M372.0,225.1h0.01 M372.0,234.8h0.01 M372.0,244.4h0.01 M372.0,254.1h0.01 M372.0,263.8h0.01 M372.0,273.4h0.01 M372.0,283.1h0.01 M372.0,292.7h0.01 M372.0,302.4h0.01 M372.0,312.1h0.01 M372.0,321.7h0.01 M372.0,331.4h0.01 M372.0,341.1h0.01 M372.0,350.7h0.01 M372.0,360.4h0.01 M372.0,370.0h0.01 M372.0,379.7h0.01 M372.0,389.4h0.01 M381.7,99.5h0.01 M381.7,109.2h0.01 M381.7,118.8h0.01 M381.7,128.5h0.01 M381.7,138.1h0.01 M381.7,147.8h0.01 M381.7,157.5h0.01 M381.7,167.1h0.01 M381.7,176.8h0.01 M381.7,186.5h0.01 M381.7,196.1h0.01 M381.7,205.8h0.01 M381.7,215.4h0.01 M381.7,225.1h0.01 M381.7,234.8h0.01 M381.7,244.4h0.01 M381.7,254.1h0.01 M381.7,263.8h0.01 M381.7,273.4h0.01 M381.7,283.1h0.01 M381.7,292.7h0.01 M381.7,302.4h0.01 M381.7,312.1h0.01 M381.7,321.7h0.01 M381.7,331.4h0.01 M381.7,341.1h0.01 M381.7,350.7h0.01 M381.7,360.4h0.01 M381.7,370.0h0.01 M381.7,379.7h0.01 M381.7,389.4h0.01 M391.3,99.5h0.01 M391.3,109.2h0.01 M391.3,118.8h0.01 M391.3,128.5h0.01 M391.3,138.1h0.01 M391.3,147.8h0.01 M391.3,157.5h0.01 M391.3,167.1h0.01 M391.3,176.8h0.01 M391.3,186.5h0.01 M391.3,196.1h0.01 M391.3,205.8h0.01 M391.3,215.4h0.01 M391.3,225.1h0.01 M391.3,234.8h0.01 M391.3,244.4h0.01 M391.3,254.1h0.01 M391.3,263.8h0.01 M391.3,273.4h0.01 M391.3,283.1h0.01 M391.3,292.7h0.01 M391.3,302.4h0.01 M391.3,312.1h0.01 M391.3,321.7h0.01 M391.3,331.4h0.01 M391.3,341.1h0.01 M391.3,350.7h0.01 M391.3,360.4h0.01 M391.3,370.0h0.01 M391.3,379.7h0.01 M391.3,389.4h0.01 M401.0,99.5h0.01 M401.0,109.2h0.01 M401.0,118.8h0.01 M401.0,128.5h0.01 M401.0,138.1h0.01 M401.0,147.8h0.01 M401.0,157.5h0.01 M401.0,167.1h0.01 M401.0,176.8h0.01 M401.0,186.5h0.01 M401.0,196.1h0.01 M401.0,205.8h0.01 M401.0,215.4h0.01 M401.0,225.1h0.01 M401.0,234.8h0.01 M401.0,244.4h0.01 M401.0,254.1h0.01 M401.0,263.8h0.01 M401.0,273.4h0.01 M401.0,283.1h0.01 M401.0,292.7h0.01 M401.0,302.4h0.01 M401.0,312.1h0.01 M401.0,321.7h0.01 M401.0,331.4h0.01 M401.0,341.1h0.01 M401.0,350.7h0.01 M401.0,360.4h0.01 M401.0,370.0h0.01 M401.0,379.7h0.01 M401.0,389.4h0.01 M410.6,99.5h0.01 M410.6,109.2h0.01 M410.6,118.8h0.01 M410.6,128.5h0.01 M410.6,138.1h0.01 M410.6,147.8h0.01 M410.6,157.5h0.01 M410.6,167.1h0.01 M410.6,176.8h0.01 M410.6,186.5h0.01 M410.6,196.1h0.01 M410.6,205.8h0.01 M410.6,215.4h0.01 M410.6,225.1h0.01 M410.6,234.8h0.01 M410.6,244.4h0.01 M410.6,254.1h0.01 M410.6,263.8h0.01 M410.6,273.4h0.01 M410.6,283.1h0.01 M410.6,292.7h0.01 M410.6,302.4h0.01 M410.6,312.1h0.01 M410.6,321.7h0.01 M410.6,331.4h0.01 M410.6,341.1h0.01 M410.6,350.7h0.01 M410.6,360.4h0.01 M410.6,370.0h0.01 M410.6,379.7h0.01 M410.6,389.4h0.01 M420.3,99.5h0.01 M420.3,109.2h0.01 M420.3,118.8h0.01 M420.3,128.5h0.01 M420.3,138.1h0.01 M420.3,147.8h0.01 M420.3,157.5h0.01 M420.3,167.1h0.01 M420.3,176.8h0.01 M420.3,186.5h0.01 M420.3,196.1h0.01 M420.3,205.8h0.01 M420.3,215.4h0.01 M420.3,225.1h0.01 M420.3,234.8h0.01 M420.3,244.4h0.01 M420.3,254.1h0.01 M420.3,263.8h0.01 M420.3,273.4h0.01 M420.3,283.1h0.01 M420.3,292.7h0.01 M420.3,302.4h0.01 M420.3,312.1h0.01 M420.3,321.7h0.01 M420.3,331.4h0.01 M420.3,341.1h0.01 M420.3,350.7h0.01 M420.3,360.4h0.01 M420.3,370.0h0.01 M420.3,379.7h0.01 M420.3,389.4h0.01 M430.0,99.5h0.01 M430.0,109.2h0.01 M430.0,118.8h0.01 M430.0,128.5h0.01 M430.0,138.1h0.01 M430.0,147.8h0.01 M430.0,157.5h0.01 M430.0,167.1h0.01 M430.0,176.8h0.01 M430.0,186.5h0.01 M430.0,196.1h0.01 M430.0,205.8h0.01 M430.0,215.4h0.01 M430.0,225.1h0.01 M430.0,234.8h0.01 M430.0,244.4h0.01 M430.0,254.1h0.01 M430.0,263.8h0.01 M430.0,273.4h0.01 M430.0,283.1h0.01 M430.0,292.7h0.01 M430.0,302.4h0.01 M430.0,312.1h0.01 M430.0,321.7h0.01 M430.0,331.4h0.01 M430.0,341.1h0.01 M430.0,350.7h0.01 M430.0,360.4h0.01 M430.0,370.0h0.01 M430.0,379.7h0.01 M430.0,389.4h0.01 M439.6,99.5h0.01 M439.6,109.2h0.01 M439.6,118.8h0.01 M439.6,128.5h0.01 M439.6,138.1h0.01 M439.6,147.8h0.01 M439.6,157.5h0.01 M439.6,167.1h0.01 M439.6,176.8h0.01 M439.6,186.5h0.01 M439.6,196.1h0.01 M439.6,205.8h0.01 M439.6,215.4h0.01 M439.6,225.1h0.01 M439.6,234.8h0.01 M439.6,244.4h0.01 M439.6,254.1h0.01 M439.6,263.8h0.01 M439.6,273.4h0.01 M439.6,283.1h0.01 M439.6,292.7h0.01 M439.6,302.4h0.01 M439.6,312.1h0.01 M439.6,321.7h0.01 M439.6,331.4h0.01 M439.6,341.1h0.01 M439.6,350.7h0.01 M439.6,360.4h0.01 M439.6,370.0h0.01 M439.6,379.7h0.01 M439.6,389.4h0.01 M449.3,99.5h0.01 M449.3,109.2h0.01 M449.3,118.8h0.01 M449.3,128.5h0.01 M449.3,138.1h0.01 M449.3,147.8h0.01 M449.3,157.5h0.01 M449.3,167.1h0.01 M449.3,176.8h0.01 M449.3,186.5h0.01 M449.3,196.1h0.01 M449.3,205.8h0.01 M449.3,215.4h0.01 M449.3,225.1h0.01 M449.3,234.8h0.01 M449.3,244.4h0.01 M449.3,254.1h0.01 M449.3,263.8h0.01 M449.3,273.4h0.01 M449.3,283.1h0.01 M449.3,292.7h0.01 M449.3,302.4h0.01 M449.3,312.1h0.01 M449.3,321.7h0.01 M449.3,331.4h0.01 M449.3,341.1h0.01 M449.3,350.7h0.01 M449.3,360.4h0.01 M449.3,370.0h0.01 M449.3,379.7h0.01 M449.3,389.4h0.01 M459.0,99.5h0.01 M459.0,109.2h0.01 M459.0,118.8h0.01 M459.0,128.5h0.01 M459.0,138.1h0.01 M459.0,147.8h0.01 M459.0,157.5h0.01 M459.0,167.1h0.01 M459.0,176.8h0.01 M459.0,186.5h0.01 M459.0,196.1h0.01 M459.0,205.8h0.01 M459.0,215.4h0.01 M459.0,225.1h0.01 M459.0,234.8h0.01 M459.0,244.4h0.01 M459.0,254.1h0.01 M459.0,263.8h0.01 M459.0,273.4h0.01 M459.0,283.1h0.01 M459.0,292.7h0.01 M459.0,302.4h0.01 M459.0,312.1h0.01 M459.0,321.7h0.01 M459.0,331.4h0.01 M459.0,341.1h0.01 M459.0,350.7h0.01 M459.0,360.4h0.01 M459.0,370.0h0.01 M459.0,379.7h0.01 M459.0,389.4h0.01 M468.6,99.5h0.01 M468.6,109.2h0.01 M468.6,118.8h0.01 M468.6,128.5h0.01 M468.6,138.1h0.01 M468.6,147.8h0.01 M468.6,157.5h0.01 M468.6,167.1h0.01 M468.6,176.8h0.01 M468.6,186.5h0.01 M468.6,196.1h0.01 M468.6,205.8h0.01 M468.6,215.4h0.01 M468.6,225.1h0.01 M468.6,234.8h0.01 M468.6,244.4h0.01 M468.6,254.1h0.01 M468.6,263.8h0.01 M468.6,273.4h0.01 M468.6,283.1h0.01 M468.6,292.7h0.01 M468.6,302.4h0.01 M468.6,312.1h0.01 M468.6,321.7h0.01 M468.6,331.4h0.01 M468.6,341.1h0.01 M468.6,350.7h0.01 M468.6,360.4h0.01 M468.6,370.0h0.01 M468.6,379.7h0.01 M468.6,389.4h0.01 M478.3,99.5h0.01 M478.3,109.2h0.01 M478.3,118.8h0.01 M478.3,128.5h0.01 M478.3,138.1h0.01 M478.3,147.8h0.01 M478.3,157.5h0.01 M478.3,167.1h0.01 M478.3,176.8h0.01 M478.3,186.5h0.01 M478.3,196.1h0.01 M478.3,205.8h0.01 M478.3,215.4h0.01 M478.3,225.1h0.01 M478.3,234.8h0.01 M478.3,244.4h0.01 M478.3,254.1h0.01 M478.3,263.8h0.01 M478.3,273.4h0.01 M478.3,283.1h0.01 M478.3,292.7h0.01 M478.3,302.4h0.01 M478.3,312.1h0.01 M478.3,321.7h0.01 M478.3,331.4h0.01 M478.3,341.1h0.01 M478.3,350.7h0.01 M478.3,360.4h0.01 M478.3,370.0h0.01 M478.3,379.7h0.01 M478.3,389.4h0.01 M487.9,99.5h0.01 M487.9,109.2h0.01 M487.9,118.8h0.01 M487.9,128.5h0.01 M487.9,138.1h0.01 M487.9,147.8h0.01 M487.9,157.5h0.01 M487.9,167.1h0.01 M487.9,176.8h0.01 M487.9,186.5h0.01 M487.9,196.1h0.01 M487.9,205.8h0.01 M487.9,215.4h0.01 M487.9,225.1h0.01 M487.9,234.8h0.01 M487.9,244.4h0.01 M487.9,254.1h0.01 M487.9,263.8h0.01 M487.9,273.4h0.01 M487.9,283.1h0.01 M487.9,292.7h0.01 M487.9,302.4h0.01 M487.9,312.1h0.01 M487.9,321.7h0.01 M487.9,331.4h0.01 M487.9,341.1h0.01 M487.9,350.7h0.01 M487.9,360.4h0.01 M487.9,370.0h0.01 M487.9,379.7h0.01 M487.9,389.4h0.01 M497.6,99.5h0.01 M497.6,109.2h0.01 M497.6,118.8h0.01 M497.6,128.5h0.01 M497.6,138.1h0.01 M497.6,147.8h0.01 M497.6,157.5h0.01 M497.6,167.1h0.01 M497.6,176.8h0.01 M497.6,186.5h0.01 M497.6,196.1h0.01 M497.6,205.8h0.01 M497.6,215.4h0.01 M497.6,225.1h0.01 M497.6,234.8h0.01 M497.6,244.4h0.01 M497.6,254.1h0.01 M497.6,263.8h0.01 M497.6,273.4h0.01 M497.6,283.1h0.01 M497.6,292.7h0.01 M497.6,302.4h0.01 M497.6,312.1h0.01 M497.6,321.7h0.01 M497.6,331.4h0.01 M497.6,341.1h0.01 M497.6,350.7h0.01 M497.6,360.4h0.01 M497.6,370.0h0.01 M497.6,379.7h0.01 M497.6,389.4h0.01 M507.3,99.5h0.01 M507.3,109.2h0.01 M507.3,118.8h0.01 M507.3,128.5h0.01 M507.3,138.1h0.01 M507.3,147.8h0.01 M507.3,157.5h0.01 M507.3,167.1h0.01 M507.3,176.8h0.01 M507.3,186.5h0.01 M507.3,196.1h0.01 M507.3,205.8h0.01 M507.3,215.4h0.01 M507.3,225.1h0.01 M507.3,234.8h0.01 M507.3,244.4h0.01 M507.3,254.1h0.01 M507.3,263.8h0.01 M507.3,273.4h0.01 M507.3,283.1h0.01 M507.3,292.7h0.01 M507.3,302.4h0.01 M507.3,312.1h0.01 M507.3,321.7h0.01 M507.3,331.4h0.01 M507.3,341.1h0.01 M507.3,350.7h0.01 M507.3,360.4h0.01 M507.3,370.0h0.01 M507.3,379.7h0.01 M507.3,389.4h0.01 M516.9,99.5h0.01 M516.9,109.2h0.01 M516.9,118.8h0.01 M516.9,128.5h0.01 M516.9,138.1h0.01 M516.9,147.8h0.01 M516.9,157.5h0.01 M516.9,167.1h0.01 M516.9,176.8h0.01 M516.9,186.5h0.01 M516.9,196.1h0.01 M516.9,205.8h0.01 M516.9,215.4h0.01 M516.9,225.1h0.01 M516.9,234.8h0.01 M516.9,244.4h0.01 M516.9,254.1h0.01 M516.9,263.8h0.01 M516.9,273.4h0.01 M516.9,283.1h0.01 M516.9,292.7h0.01 M516.9,302.4h0.01 M516.9,312.1h0.01 M516.9,321.7h0.01 M516.9,331.4h0.01 M516.9,341.1h0.01 M516.9,350.7h0.01 M516.9,360.4h0.01 M516.9,370.0h0.01 M516.9,379.7h0.01 M516.9,389.4h0.01 M526.6,99.5h0.01 M526.6,109.2h0.01 M526.6,118.8h0.01 M526.6,128.5h0.01 M526.6,138.1h0.01 M526.6,147.8h0.01 M526.6,157.5h0.01 M526.6,167.1h0.01 M526.6,176.8h0.01 M526.6,186.5h0.01 M526.6,196.1h0.01 M526.6,205.8h0.01 M526.6,215.4h0.01 M526.6,225.1h0.01 M526.6,234.8h0.01 M526.6,244.4h0.01 M526.6,254.1h0.01 M526.6,263.8h0.01 M526.6,273.4h0.01 M526.6,283.1h0.01 M526.6,292.7h0.01 M526.6,302.4h0.01 M526.6,312.1h0.01 M526.6,321.7h0.01 M526.6,331.4h0.01 M526.6,341.1h0.01 M526.6,350.7h0.01 M526.6,360.4h0.01 M526.6,370.0h0.01 M526.6,379.7h0.01 M526.6,389.4h0.01 M536.2,99.5h0.01 M536.2,109.2h0.01 M536.2,118.8h0.01 M536.2,128.5h0.01 M536.2,138.1h0.01 M536.2,147.8h0.01 M536.2,157.5h0.01 M536.2,167.1h0.01 M536.2,176.8h0.01 M536.2,186.5h0.01 M536.2,196.1h0.01 M536.2,205.8h0.01 M536.2,215.4h0.01 M536.2,225.1h0.01 M536.2,234.8h0.01 M536.2,244.4h0.01 M536.2,254.1h0.01 M536.2,263.8h0.01 M536.2,273.4h0.01 M536.2,283.1h0.01 M536.2,292.7h0.01 M536.2,302.4h0.01 M536.2,312.1h0.01 M536.2,321.7h0.01 M536.2,331.4h0.01 M536.2,341.1h0.01 M536.2,350.7h0.01 M536.2,360.4h0.01 M536.2,370.0h0.01 M536.2,379.7h0.01 M536.2,389.4h0.01 M545.9,99.5h0.01 M545.9,109.2h0.01 M545.9,118.8h0.01 M545.9,128.5h0.01 M545.9,138.1h0.01 M545.9,147.8h0.01 M545.9,157.5h0.01 M545.9,167.1h0.01 M545.9,176.8h0.01 M545.9,186.5h0.01 M545.9,196.1h0.01 M545.9,205.8h0.01 M545.9,215.4h0.01 M545.9,225.1h0.01 M545.9,234.8h0.01 M545.9,244.4h0.01 M545.9,254.1h0.01 M545.9,263.8h0.01 M545.9,273.4h0.01 M545.9,283.1h0.01 M545.9,292.7h0.01 M545.9,302.4h0.01 M545.9,312.1h0.01 M545.9,321.7h0.01 M545.9,331.4h0.01 M545.9,341.1h0.01 M545.9,350.7h0.01 M545.9,360.4h0.01 M545.9,370.0h0.01 M545.9,379.7h0.01 M545.9,389.4h0.01 M555.6,99.5h0.01 M555.6,109.2h0.01 M555.6,118.8h0.01 M555.6,128.5h0.01 M555.6,138.1h0.01 M555.6,147.8h0.01 M555.6,157.5h0.01 M555.6,167.1h0.01 M555.6,176.8h0.01 M555.6,186.5h0.01 M555.6,196.1h0.01 M555.6,205.8h0.01 M555.6,215.4h0.01 M555.6,225.1h0.01 M555.6,234.8h0.01 M555.6,244.4h0.01 M555.6,254.1h0.01 M555.6,263.8h0.01 M555.6,273.4h0.01 M555.6,283.1h0.01 M555.6,292.7h0.01 M555.6,302.4h0.01 M555.6,312.1h0.01 M555.6,321.7h0.01 M555.6,331.4h0.01 M555.6,341.1h0.01 M555.6,350.7h0.01 M555.6,360.4h0.01 M555.6,370.0h0.01 M555.6,379.7h0.01 M555.6,389.4h0.01 M565.2,99.5h0.01 M565.2,109.2h0.01 M565.2,118.8h0.01 M565.2,128.5h0.01 M565.2,138.1h0.01 M565.2,147.8h0.01 M565.2,157.5h0.01 M565.2,167.1h0.01 M565.2,176.8h0.01 M565.2,186.5h0.01 M565.2,196.1h0.01 M565.2,205.8h0.01 M565.2,215.4h0.01 M565.2,225.1h0.01 M565.2,234.8h0.01 M565.2,244.4h0.01 M565.2,254.1h0.01 M565.2,263.8h0.01 M565.2,273.4h0.01 M565.2,283.1h0.01 M565.2,292.7h0.01 M565.2,302.4h0.01 M565.2,312.1h0.01 M565.2,321.7h0.01 M565.2,331.4h0.01 M565.2,341.1h0.01 M565.2,350.7h0.01 M565.2,360.4h0.01 M565.2,370.0h0.01 M565.2,379.7h0.01 M565.2,389.4h0.01 M574.9,99.5h0.01 M574.9,109.2h0.01 M574.9,118.8h0.01 M574.9,128.5h0.01 M574.9,138.1h0.01 M574.9,147.8h0.01 M574.9,157.5h0.01 M574.9,167.1h0.01 M574.9,176.8h0.01 M574.9,186.5h0.01 M574.9,196.1h0.01 M574.9,205.8h0.01 M574.9,215.4h0.01 M574.9,225.1h0.01 M574.9,234.8h0.01 M574.9,244.4h0.01 M574.9,254.1h0.01 M574.9,263.8h0.01 M574.9,273.4h0.01 M574.9,283.1h0.01 M574.9,292.7h0.01 M574.9,302.4h0.01 M574.9,312.1h0.01 M574.9,321.7h0.01 M574.9,331.4h0.01 M574.9,341.1h0.01 M574.9,350.7h0.01 M574.9,360.4h0.01 M574.9,370.0h0.01 M574.9,379.7h0.01 M574.9,389.4h0.01 M584.6,99.5h0.01 M584.6,109.2h0.01 M584.6,118.8h0.01 M584.6,128.5h0.01 M584.6,138.1h0.01 M584.6,147.8h0.01 M584.6,157.5h0.01 M584.6,167.1h0.01 M584.6,176.8h0.01 M584.6,186.5h0.01 M584.6,196.1h0.01 M584.6,205.8h0.01 M584.6,215.4h0.01 M584.6,225.1h0.01 M584.6,234.8h0.01 M584.6,244.4h0.01 M584.6,254.1h0.01 M584.6,263.8h0.01 M584.6,273.4h0.01 M584.6,283.1h0.01 M584.6,292.7h0.01 M584.6,302.4h0.01 M584.6,312.1h0.01 M584.6,321.7h0.01 M584.6,331.4h0.01 M584.6,341.1h0.01 M584.6,350.7h0.01 M584.6,360.4h0.01 M584.6,370.0h0.01 M584.6,379.7h0.01 M584.6,389.4h0.01 M594.2,99.5h0.01 M594.2,109.2h0.01 M594.2,118.8h0.01 M594.2,128.5h0.01 M594.2,138.1h0.01 M594.2,147.8h0.01 M594.2,157.5h0.01 M594.2,167.1h0.01 M594.2,176.8h0.01 M594.2,186.5h0.01 M594.2,196.1h0.01 M594.2,205.8h0.01 M594.2,215.4h0.01 M594.2,225.1h0.01 M594.2,234.8h0.01 M594.2,244.4h0.01 M594.2,254.1h0.01 M594.2,263.8h0.01 M594.2,273.4h0.01 M594.2,283.1h0.01 M594.2,292.7h0.01 M594.2,302.4h0.01 M594.2,312.1h0.01 M594.2,321.7h0.01 M594.2,331.4h0.01 M594.2,341.1h0.01 M594.2,350.7h0.01 M594.2,360.4h0.01 M594.2,370.0h0.01 M594.2,379.7h0.01 M594.2,389.4h0.01 M603.9,99.5h0.01 M603.9,109.2h0.01 M603.9,118.8h0.01 M603.9,128.5h0.01 M603.9,138.1h0.01 M603.9,147.8h0.01 M603.9,157.5h0.01 M603.9,167.1h0.01 M603.9,176.8h0.01 M603.9,186.5h0.01 M603.9,196.1h0.01 M603.9,205.8h0.01 M603.9,215.4h0.01 M603.9,225.1h0.01 M603.9,234.8h0.01 M603.9,244.4h0.01 M603.9,254.1h0.01 M603.9,263.8h0.01 M603.9,273.4h0.01 M603.9,283.1h0.01 M603.9,292.7h0.01 M603.9,302.4h0.01 M603.9,312.1h0.01 M603.9,321.7h0.01 M603.9,331.4h0.01 M603.9,341.1h0.01 M603.9,350.7h0.01 M603.9,360.4h0.01 M603.9,370.0h0.01 M603.9,379.7h0.01 M603.9,389.4h0.01 M613.5,99.5h0.01 M613.5,109.2h0.01 M613.5,118.8h0.01 M613.5,128.5h0.01 M613.5,138.1h0.01 M613.5,147.8h0.01 M613.5,157.5h0.01 M613.5,167.1h0.01 M613.5,176.8h0.01 M613.5,186.5h0.01 M613.5,196.1h0.01 M613.5,205.8h0.01 M613.5,215.4h0.01 M613.5,225.1h0.01 M613.5,234.8h0.01 M613.5,244.4h0.01 M613.5,254.1h0.01 M613.5,263.8h0.01 M613.5,273.4h0.01 M613.5,283.1h0.01 M613.5,292.7h0.01 M613.5,302.4h0.01 M613.5,312.1h0.01 M613.5,321.7h0.01 M613.5,331.4h0.01 M613.5,341.1h0.01 M613.5,350.7h0.01 M613.5,360.4h0.01 M613.5,370.0h0.01 M613.5,379.7h0.01 M613.5,389.4h0.01 M623.2,99.5h0.01 M623.2,109.2h0.01 M623.2,118.8h0.01 M623.2,128.5h0.01 M623.2,138.1h0.01 M623.2,147.8h0.01 M623.2,157.5h0.01 M623.2,167.1h0.01 M623.2,176.8h0.01 M623.2,186.5h0.01 M623.2,196.1h0.01 M623.2,205.8h0.01 M623.2,215.4h0.01 M623.2,225.1h0.01 M623.2,234.8h0.01 M623.2,244.4h0.01 M623.2,254.1h0.01 M623.2,263.8h0.01 M623.2,273.4h0.01 M623.2,283.1h0.01 M623.2,292.7h0.01 M623.2,302.4h0.01 M623.2,312.1h0.01 M623.2,321.7h0.01 M623.2,331.4h0.01 M623.2,341.1h0.01 M623.2,350.7h0.01 M623.2,360.4h0.01 M623.2,370.0h0.01 M623.2,379.7h0.01 M623.2,389.4h0.01 M632.9,99.5h0.01 M632.9,109.2h0.01 M632.9,118.8h0.01 M632.9,128.5h0.01 M632.9,138.1h0.01 M632.9,147.8h0.01 M632.9,157.5h0.01 M632.9,167.1h0.01 M632.9,176.8h0.01 M632.9,186.5h0.01 M632.9,196.1h0.01 M632.9,205.8h0.01 M632.9,215.4h0.01 M632.9,225.1h0.01 M632.9,234.8h0.01 M632.9,244.4h0.01 M632.9,254.1h0.01 M632.9,263.8h0.01 M632.9,273.4h0.01 M632.9,283.1h0.01 M632.9,292.7h0.01 M632.9,302.4h0.01 M632.9,312.1h0.01 M632.9,321.7h0.01 M632.9,331.4h0.01 M632.9,341.1h0.01 M632.9,350.7h0.01 M632.9,360.4h0.01 M632.9,370.0h0.01 M632.9,379.7h0.01 M632.9,389.4h0.01 M642.5,99.5h0.01 M642.5,109.2h0.01 M642.5,118.8h0.01 M642.5,128.5h0.01 M642.5,138.1h0.01 M642.5,147.8h0.01 M642.5,157.5h0.01 M642.5,167.1h0.01 M642.5,176.8h0.01 M642.5,186.5h0.01 M642.5,196.1h0.01 M642.5,205.8h0.01 M642.5,215.4h0.01 M642.5,225.1h0.01 M642.5,234.8h0.01 M642.5,244.4h0.01 M642.5,254.1h0.01 M642.5,263.8h0.01 M642.5,273.4h0.01 M642.5,283.1h0.01 M642.5,292.7h0.01 M642.5,302.4h0.01 M642.5,312.1h0.01 M642.5,321.7h0.01 M642.5,331.4h0.01 M642.5,341.1h0.01 M642.5,350.7h0.01 M642.5,360.4h0.01 M642.5,370.0h0.01 M642.5,379.7h0.01 M642.5,389.4h0.01 M652.2,99.5h0.01 M652.2,109.2h0.01 M652.2,118.8h0.01 M652.2,128.5h0.01 M652.2,138.1h0.01 M652.2,147.8h0.01 M652.2,157.5h0.01 M652.2,167.1h0.01 M652.2,176.8h0.01 M652.2,186.5h0.01 M652.2,196.1h0.01 M652.2,205.8h0.01 M652.2,215.4h0.01 M652.2,225.1h0.01 M652.2,234.8h0.01 M652.2,244.4h0.01 M652.2,254.1h0.01 M652.2,263.8h0.01 M652.2,273.4h0.01 M652.2,283.1h0.01 M652.2,292.7h0.01 M652.2,302.4h0.01 M652.2,312.1h0.01 M652.2,321.7h0.01 M652.2,331.4h0.01 M652.2,341.1h0.01 M652.2,350.7h0.01 M652.2,360.4h0.01 M652.2,370.0h0.01 M652.2,379.7h0.01 M652.2,389.4h0.01 M661.9,99.5h0.01 M661.9,109.2h0.01 M661.9,118.8h0.01 M661.9,128.5h0.01 M661.9,138.1h0.01 M661.9,147.8h0.01 M661.9,157.5h0.01 M661.9,167.1h0.01 M661.9,176.8h0.01 M661.9,186.5h0.01 M661.9,196.1h0.01 M661.9,205.8h0.01 M661.9,215.4h0.01 M661.9,225.1h0.01 M661.9,234.8h0.01 M661.9,244.4h0.01 M661.9,254.1h0.01 M661.9,263.8h0.01 M661.9,273.4h0.01 M661.9,283.1h0.01 M661.9,292.7h0.01 M661.9,302.4h0.01 M661.9,312.1h0.01 M661.9,321.7h0.01 M661.9,331.4h0.01 M661.9,341.1h0.01 M661.9,350.7h0.01 M661.9,360.4h0.01 M661.9,370.0h0.01 M661.9,379.7h0.01 M661.9,389.4h0.01" stroke="#d6d6d6" stroke-width="1" stroke-linecap="round"/>
<g stroke="#1a1a1a" stroke-width="0.85" fill="#1a1a1a">
<line x1="405.8" y1="204.4" x2="391.4" y2="172.7"/><polygon points="390.3,170.2 392.9,172.6 390.4,173.7"/>
<line x1="410.7" y1="206.0" x2="410.7" y2="172.1"/><polygon points="410.7,169.4 412.1,172.6 409.3,172.6"/>
<line x1="420.5" y1="208.3" x2="430.3" y2="172.0"/><polygon points="431.0,169.4 431.5,172.8 428.9,172.1"/>
<line x1="402.7" y1="207.5" x2="375.4" y2="176.1"/><polygon points="373.6,174.1 376.7,175.6 374.7,177.4"/>
<line x1="395.0" y1="211.0" x2="358.8" y2="183.5"/><polygon points="356.7,181.9 360.1,182.8 358.4,184.9"/>
<line x1="393.3" y1="219.7" x2="336.8" y2="192.4"/><polygon points="334.4,191.2 337.9,191.4 336.7,193.8"/>
<line x1="395.0" y1="233.0" x2="330.5" y2="208.0"/><polygon points="328.0,207.0 331.5,206.9 330.5,209.4"/>
<line x1="390.0" y1="241.0" x2="309.6" y2="217.2"/><polygon points="307.0,216.4 310.5,216.0 309.7,218.6"/>
<line x1="383.0" y1="245.6" x2="307.6" y2="228.6"/><polygon points="305.0,228.0 308.4,227.4 307.8,230.0"/>
<line x1="375.0" y1="256.4" x2="291.7" y2="243.4"/><polygon points="289.0,243.0 292.4,242.2 292.0,244.8"/>
<line x1="372.0" y1="265.6" x2="288.7" y2="258.8"/><polygon points="286.0,258.6 289.3,257.5 289.1,260.2"/>
<line x1="370.0" y1="278.0" x2="297.7" y2="276.1"/><polygon points="295.0,276.0 298.2,274.7 298.2,277.4"/>
<line x1="367.4" y1="290.3" x2="294.3" y2="295.0"/><polygon points="291.6,295.2 294.7,293.6 294.9,296.3"/>
<line x1="388.0" y1="310.0" x2="297.9" y2="318.7"/><polygon points="295.2,319.0 298.3,317.3 298.5,320.0"/>
<line x1="387.4" y1="330.9" x2="302.7" y2="339.1"/><polygon points="300.0,339.4 303.1,337.7 303.3,340.4"/>
<line x1="384.0" y1="343.0" x2="315.7" y2="352.0"/><polygon points="313.0,352.4 316.0,350.6 316.3,353.3"/>
<line x1="378.4" y1="350.4" x2="326.4" y2="363.7"/><polygon points="323.8,364.4 326.6,362.3 327.2,364.9"/>
<line x1="372.2" y1="362.6" x2="349.1" y2="372.5"/><polygon points="346.6,373.6 349.0,371.1 350.1,373.6"/>
<line x1="395.0" y1="365.0" x2="391.3" y2="371.6"/><polygon points="390.0,374.0 390.4,370.5 392.7,371.9"/>
<line x1="432.2" y1="363.1" x2="432.2" y2="372.2"/><polygon points="432.2,374.9 430.8,371.7 433.6,371.7"/>
<line x1="435.2" y1="344.0" x2="464.0" y2="370.6"/><polygon points="466.0,372.4 462.7,371.2 464.6,369.2"/>
<line x1="433.4" y1="327.0" x2="484.9" y2="356.5"/><polygon points="487.2,357.8 483.8,357.4 485.1,355.0"/>
<line x1="434.2" y1="311.3" x2="492.9" y2="343.5"/><polygon points="495.3,344.8 491.8,344.4 493.1,342.1"/>
<line x1="447.4" y1="305.7" x2="495.7" y2="325.0"/><polygon points="498.2,326.0 494.7,326.1 495.7,323.6"/>
<line x1="451.8" y1="295.9" x2="498.1" y2="307.4"/><polygon points="500.7,308.1 497.3,308.6 497.9,306.0"/>
<line x1="449.8" y1="283.7" x2="500.4" y2="291.3"/><polygon points="503.1,291.7 499.7,292.6 500.1,289.9"/>
<line x1="447.8" y1="275.6" x2="507.3" y2="273.0"/><polygon points="510.0,272.9 506.9,274.4 506.7,271.7"/>
<line x1="445.6" y1="267.3" x2="508.1" y2="253.9"/><polygon points="510.7,253.3 507.9,255.3 507.3,252.7"/>
<line x1="442.2" y1="256.2" x2="497.9" y2="234.3"/><polygon points="500.4,233.3 497.9,235.7 496.9,233.2"/>
<line x1="440.0" y1="245.7" x2="485.5" y2="217.0"/><polygon points="487.8,215.6 485.8,218.4 484.4,216.2"/>
<line x1="430.7" y1="237.7" x2="474.6" y2="203.8"/><polygon points="476.7,202.2 475.0,205.2 473.3,203.1"/>
<line x1="426.7" y1="227.7" x2="462.2" y2="193.1"/><polygon points="464.1,191.2 462.8,194.4 460.9,192.5"/>
<line x1="427.5" y1="216.9" x2="450.8" y2="184.1"/><polygon points="452.4,181.9 451.6,185.3 449.4,183.7"/>
</g>
<g font-family='"Liberation Sans", sans-serif' font-size="5.35" fill="#222" stroke="#222" stroke-width="0.08" text-anchor="middle">
<text x="385" y="163.3">Geld</text>
<text x="365" y="170.70000000000002">Beweging</text>
<text x="347.6" y="178.70000000000002">Kinderen</text>
<text x="324.5" y="189.20000000000002">E-mails</text>
<text x="308.4" y="203.8">Social media</text>
<text x="297.8" y="212.70000000000002">TV</text>
<text x="292.5" y="226.3">Vrienden</text>
<text x="282" y="241.3">Ex</text>
<text x="276.2" y="256.7">Buren</text>
<text x="273.1" y="274.3">Schoonouders</text>
<text x="278.4" y="294.0">Gezicht</text>
<text x="282.4" y="319.7">Lichaam</text>
<text x="291.6" y="339.8">Pijn</text>
<text x="302.5" y="353.7">Eten</text>
<text x="313.9" y="367.1">Ziekte</text>
<text x="344.7" y="377.2">Afspraken</text>
<text x="388.5" y="379.3">Ouders</text>
<text x="435.7" y="380.6">Vijanden</text>
<text x="470.4" y="376.40000000000003">Baas</text>
<text x="497.8" y="363.0">Problemen</text>
<text x="504.6" y="346.3">Nieuws</text>
<text x="506.8" y="327.5">Weer</text>
<text x="512.6" y="310.40000000000003">Kleding</text>
<text x="530.6" y="293.3">Onrust in de wereld</text>
<text x="519.7" y="273.3">Huis</text>
<text x="519.7" y="252.3">Auto</text>
<text x="514.2" y="231.9">Hobby</text>
<text x="503.8" y="213.9">Huisdieren</text>
<text x="490" y="202.3">Collega's</text>
<text x="469.9" y="189.9">Werk</text>
<text x="460" y="179.8">Partner</text>
<text x="436.4" y="163.3">Toekomst</text>
<text x="411.8" y="163.3">Verleden</text>
</g>
<g stroke="#1a1a1a" stroke-width="0.8" fill="none" stroke-linejoin="round">
<path d="M399,235.5 C398,239 390,241 385,245 C379,250 376,255 374,262 C372,275 371,286 369,294 L365.8,300.5 C365,303 367,304 368,302.5 C368.5,304.5 370,304.5 370.5,302.6 C371,304.5 373,304.5 373.2,302.4 C373.8,304 376.2,304 376.3,301.5 L376.6,298 C377,290 381,272 384,261 C385,256.5 389,256.5 390,260 C392,275 392,320 391,335 C390,345 388,350 385,352 C372,354 368,359 376,360 L395,360.5 M424,359.5 L442,362 C450,360 448,355 436,352 C432,347 429,330 428,300 C427,285 426,272 427,260 C428,255.5 432,255.5 433,260 C436,272 440,285 444,297 L441.5,299.5 C441.5,301.5 443.2,302 443.8,300 C444,302.5 446,302.5 446.3,300.3 C446.8,302.5 448.8,302 448.6,299.6 C449.6,299.6 451,298.6 450.3,296.5 L450,294.5 C447,284 444,268 441,258 C438,250 434,245 429,242 C425,240 420,239 419,235.5"/>
<path d="M410,207.2 C420,207 427,214 426.7,222 C426.5,231 419,236.7 410,236.7 C401,236.7 393.5,230 393.5,221.5 C393.5,213 400,207.4 410,207.2 Z"/>
<path d="M411,208.5 C419,208.5 425,214.5 425,222.5 C425,230 419,235 411.5,235.2 C403,235.4 395.5,229.5 395.2,221 C395,213.5 402,208.5 411,208.5" stroke-width="0.6"/>
<path d="M412.9,233.4 Q410.5,237.7 408.1,233.4 Q405.7,229.1 400.9,228.2 Q396.0,227.2 399.4,223.6 Q402.7,220.0 402.1,215.1 Q401.6,210.2 406.0,212.3 Q410.5,214.3 415.0,212.3 Q419.4,210.2 418.9,215.1 Q418.3,220.0 421.6,223.6 Q425.0,227.2 420.1,228.2 Q415.3,229.1 412.9,233.4Z" stroke-width="0.65"/>
<path d="M403,233 C406,230.5 414,230.5 418,233" stroke-width="0.6"/>
<circle cx="411" cy="223" r="2.6" stroke-width="0.7"/>
<path d="M414.6,223.0 L417.2,223.0 M413.8,225.3 L415.7,227.0 M411.6,226.5 L412.1,229.1 M409.2,226.1 L407.9,228.4 M407.6,224.2 L405.2,225.1 M407.6,221.8 L405.2,220.9 M409.2,219.9 L407.9,217.6 M411.6,219.5 L412.1,216.9 M413.8,220.7 L415.7,219.0 " stroke-width="0.7"/>
<path d="M402,219 H406 M401.5,222 H405.5 M402,225 H406 M403,228 H407" stroke-width="0.6"/>
<path d="M407.5,261.5 Q410.0,257.0 412.5,261.5 Q415.1,266.0 420.1,267.0 Q425.2,268.1 421.7,271.9 Q418.2,275.7 418.8,280.8 Q419.4,285.9 414.7,283.8 Q410.0,281.6 405.3,283.8 Q400.6,285.9 401.2,280.8 Q401.8,275.7 398.3,271.9 Q394.8,268.1 399.9,267.0 Q404.9,266.0 407.5,261.5Z"/>
<path d="M407.9,263.9 Q410.0,260.0 412.1,263.9 Q414.2,267.8 418.6,268.6 Q422.9,269.4 419.9,272.6 Q416.8,275.8 417.4,280.2 Q418.0,284.6 414.0,282.7 Q410.0,280.8 406.0,282.7 Q402.0,284.6 402.6,280.2 Q403.2,275.8 400.1,272.6 Q397.1,269.4 401.4,268.6 Q405.8,267.8 407.9,263.9Z" stroke-width="0.55"/>
<path d="M406.8,274.0 Q408.4,274.8 411.6,268.1 Q404.0,277.7 407.0,270.2 Q416.1,273.1 414.2,273.2 Q411.7,269.2 411.7,278.1 Q410.3,276.5 412.1,268.1 Q413.2,274.6 407.5,267.7 Q414.5,273.2 412.7,278.2 Q412.7,278.7 408.7,277.2 Q409.3,278.9 414.7,268.5 Q405.5,270.0 415.8,272.7 Q411.6,271.0 410.1,272.1 Q408.2,274.6 411.0,278.5 Q412.3,278.8 414.4,279.6 Q412.1,269.3 414.5,279.3 Q415.0,274.4 412.7,269.9 Q414.1,274.4 407.3,268.1 Q414.4,279.6 404.9,277.2 Q408.9,269.2 407.4,276.8 Q414.6,267.8 411.4,267.9 Q412.7,271.4 414.7,279.5 Q410.1,279.7 407.6,268.3" stroke-width="0.75"/>
<path d="M407.5,288.0 Q410.0,283.5 412.5,288.0 Q415.1,292.5 420.1,293.5 Q425.2,294.6 421.7,298.4 Q418.2,302.2 418.8,307.3 Q419.4,312.4 414.7,310.3 Q410.0,308.1 405.3,310.3 Q400.6,312.4 401.2,307.3 Q401.8,302.2 398.3,298.4 Q394.8,294.6 399.9,293.5 Q404.9,292.5 407.5,288.0Z"/>
<path d="M407.9,290.4 Q410.0,286.5 412.1,290.4 Q414.2,294.3 418.6,295.1 Q422.9,295.9 419.9,299.1 Q416.8,302.3 417.4,306.7 Q418.0,311.1 414.0,309.2 Q410.0,307.3 406.0,309.2 Q402.0,311.1 402.6,306.7 Q403.2,302.3 400.1,299.1 Q397.1,295.9 401.4,295.1 Q405.8,294.3 407.9,290.4Z" stroke-width="0.55"/>
<path d="M406.7,295.1 Q408.7,295.7 404.6,298.8 Q415.2,303.7 413.3,296.6 Q410.5,297.2 405.9,295.1 Q406.5,305.3 414.1,303.8 Q413.7,296.2 407.6,301.6 Q412.9,304.4 414.7,294.9 Q411.3,302.1 410.1,296.0 Q409.7,294.9 415.4,304.5 Q410.6,297.5 415.1,300.9 Q414.7,304.3 410.1,298.9 Q411.2,299.1 405.8,297.6 Q413.9,294.3 404.4,301.6 Q407.3,300.4 409.6,298.1 Q416.2,296.2 408.9,296.3 Q411.6,297.2 408.2,303.1 Q407.8,300.7 415.0,295.1 Q404.6,296.6 413.3,301.4 Q406.7,297.9 406.0,299.5 Q404.3,302.4 414.9,305.6 Q412.9,305.7 404.0,297.4 Q415.8,303.4 408.9,305.5" stroke-width="0.75"/>
<path d="M407.5,311.5 Q410.0,307.0 412.5,311.5 Q415.1,316.0 420.1,317.0 Q425.2,318.1 421.7,321.9 Q418.2,325.7 418.8,330.8 Q419.4,335.9 414.7,333.8 Q410.0,331.6 405.3,333.8 Q400.6,335.9 401.2,330.8 Q401.8,325.7 398.3,321.9 Q394.8,318.1 399.9,317.0 Q404.9,316.0 407.5,311.5Z"/>
<path d="M407.9,313.9 Q410.0,310.0 412.1,313.9 Q414.2,317.8 418.6,318.6 Q422.9,319.4 419.9,322.6 Q416.8,325.8 417.4,330.2 Q418.0,334.6 414.0,332.7 Q410.0,330.8 406.0,332.7 Q402.0,334.6 402.6,330.2 Q403.2,325.8 400.1,322.6 Q397.1,319.4 401.4,318.6 Q405.8,317.8 407.9,313.9Z" stroke-width="0.55"/>
<path d="M411.5,326.5 Q413.7,329.0 413.0,328.7 Q404.2,323.1 415.5,325.3 Q415.0,318.7 409.6,320.4 Q410.5,324.4 404.0,320.0 Q407.3,328.7 413.3,319.3 Q413.7,319.0 411.5,318.9 Q403.8,328.1 406.4,320.0 Q416.0,328.1 407.4,329.2 Q410.5,325.7 406.3,329.0 Q412.4,329.3 414.9,321.0 Q408.3,319.4 405.6,318.1 Q407.5,324.8 403.8,325.7 Q408.0,321.1 413.9,323.3 Q407.7,323.3 412.5,318.0 Q415.9,317.6 413.1,327.8 Q404.0,327.1 408.3,324.5 Q403.9,317.9 406.0,329.1 Q406.2,326.7 415.3,329.0 Q408.1,321.7 410.3,326.9 Q405.1,326.6 413.7,328.0 Q404.3,329.0 404.9,321.5" stroke-width="0.75"/>
<path d="M407.5,338.5 Q410.0,334.0 412.5,338.5 Q415.1,343.0 420.1,344.0 Q425.2,345.1 421.7,348.9 Q418.2,352.7 418.8,357.8 Q419.4,362.9 414.7,360.8 Q410.0,358.6 405.3,360.8 Q400.6,362.9 401.2,357.8 Q401.8,352.7 398.3,348.9 Q394.8,345.1 399.9,344.0 Q404.9,343.0 407.5,338.5Z"/>
<path d="M407.9,340.9 Q410.0,337.0 412.1,340.9 Q414.2,344.8 418.6,345.6 Q422.9,346.4 419.9,349.6 Q416.8,352.8 417.4,357.2 Q418.0,361.6 414.0,359.7 Q410.0,357.8 406.0,359.7 Q402.0,361.6 402.6,357.2 Q403.2,352.8 400.1,349.6 Q397.1,346.4 401.4,345.6 Q405.8,344.8 407.9,340.9Z" stroke-width="0.55"/>
<path d="M413.6,354.5 Q409.8,347.5 403.8,352.5 Q409.6,353.7 408.4,353.8 Q407.2,354.2 412.8,349.4 Q410.5,352.8 406.2,351.2 Q413.8,347.6 413.8,352.8 Q414.3,348.5 405.0,354.2 Q413.8,349.8 405.0,346.7 Q411.7,347.9 415.6,351.6 Q406.3,352.4 408.3,355.9 Q415.1,350.7 411.8,353.0 Q413.8,356.4 404.2,348.8 Q411.3,348.1 411.1,345.4 Q414.7,350.8 405.2,352.5 Q407.7,346.7 409.8,346.0 Q406.4,355.0 412.5,344.5 Q413.4,344.5 407.9,355.5 Q411.5,348.1 408.5,349.1 Q405.4,356.7 404.5,349.5 Q413.1,349.2 416.0,347.3 Q415.9,355.4 412.1,355.3 Q409.3,354.6 413.7,350.7" stroke-width="0.75"/>
</g>
<g font-family='"Liberation Sans", sans-serif' font-size="4" fill="#333" text-anchor="middle"><text x="404.7" y="243">Innerlijke wereld van</text><text x="408.3" y="247">gedachten en gevoelens</text></g>
<g font-family='"Liberation Sans", sans-serif' font-weight="bold" font-size="7.6" fill="#161616" stroke="#161616" stroke-width="0.12">
<text x="501" y="121.3">Met als gevolg:</text>
<text x="501" y="135.7">Je innerlijke wereld wordt uit het lood</text>
<text x="501" y="145.1">geslagen.</text>
<text x="501" y="159.6">Je wordt slachtoffer van je leven i.p.v.</text>
<text x="501" y="168.3">schepper van het leven.</text>
</g>
<g stroke="#2a2a2a" stroke-width="0.6" fill="none" stroke-linecap="round">
<path d="M539,162.6 C544,162 549,160 553,158.8 L553.4,155.8 M553,158.8 C556,161.5 559,162.2 563,161.8 C567,161.4 570,160.6 574,160.2"/>
<path d="M500.6,166.5 L503.2,167.6"/>
</g>
<path d="M500.50,170.80 L500.40,170.84 L500.31,170.97 L500.22,171.18 L500.14,171.47 L500.07,171.83 L500.02,172.26 L499.99,172.76 L499.98,173.30 L499.99,173.89 L500.02,174.51 L500.08,175.15 L500.16,175.80 L500.27,176.45 L500.41,177.09 L500.57,177.71 L500.75,178.30 L500.96,178.84 L501.18,179.34 L501.43,179.77 L501.69,180.13 L501.96,180.42 L502.24,180.63 L502.53,180.76 L502.82,180.80 L503.12,180.76 L503.41,180.63 L503.69,180.42 L503.96,180.13 L504.22,179.77 L504.47,179.34 L504.69,178.84 L504.90,178.30 L505.08,177.71 L505.24,177.09 L505.38,176.45 L505.49,175.80 L505.57,175.15 L505.63,174.51 L505.66,173.89 L505.67,173.30 L505.66,172.76 L505.63,172.26 L505.58,171.83 L505.51,171.47 L505.43,171.18 L505.34,170.97 L505.25,170.84 L505.15,170.80 L505.05,170.84 L504.96,170.97 L504.87,171.18 L504.79,171.47 L504.72,171.83 L504.67,172.26 L504.64,172.76 L504.63,173.30 L504.64,173.89 L504.67,174.51 L504.73,175.15 L504.81,175.80 L504.92,176.45 L505.06,177.09 L505.22,177.71 L505.40,178.30 L505.61,178.84 L505.83,179.34 L506.08,179.77 L506.34,180.13 L506.61,180.42 L506.89,180.63 L507.18,180.76 L507.47,180.80 L507.77,180.76 L508.06,180.63 L508.34,180.42 L508.61,180.13 L508.87,179.77 L509.12,179.34 L509.34,178.84 L509.55,178.30 L509.73,177.71 L509.89,177.09 L510.03,176.45 L510.14,175.80 L510.22,175.15 L510.28,174.51 L510.31,173.89 L510.32,173.30 L510.31,172.76 L510.28,172.26 L510.23,171.83 L510.16,171.47 L510.08,171.18 L509.99,170.97 L509.90,170.84 L509.80,170.80 L509.70,170.84 L509.60,170.97 L509.52,171.18 L509.44,171.47 L509.37,171.83 L509.32,172.26 L509.29,172.76 L509.28,173.30 L509.29,173.89 L509.32,174.51 L509.38,175.15 L509.46,175.80 L509.57,176.45 L509.71,177.09 L509.87,177.71 L510.05,178.30 L510.26,178.84 L510.48,179.34 L510.73,179.77 L510.99,180.13 L511.26,180.42 L511.54,180.63 L511.83,180.76 L512.12,180.80 L512.42,180.76 L512.71,180.63 L512.99,180.42 L513.26,180.13 L513.52,179.77 L513.77,179.34 L513.99,178.84 L514.20,178.30 L514.38,177.71 L514.54,177.09 L514.68,176.45 L514.79,175.80 L514.87,175.15 L514.93,174.51 L514.96,173.89 L514.97,173.30 L514.96,172.76 L514.93,172.26 L514.88,171.83 L514.81,171.47 L514.73,171.18 L514.64,170.97 L514.55,170.84 L514.45,170.80 L514.35,170.84 L514.25,170.97 L514.17,171.18 L514.09,171.47 L514.02,171.83 L513.97,172.26 L513.94,172.76 L513.92,173.30 L513.93,173.89 L513.97,174.51 L514.03,175.15 L514.11,175.80 L514.22,176.45 L514.36,177.09 L514.52,177.71 L514.70,178.30 L514.91,178.84 L515.13,179.34 L515.38,179.77 L515.64,180.13 L515.91,180.42 L516.19,180.63 L516.48,180.76 L516.77,180.80 L517.07,180.76 L517.36,180.63 L517.64,180.42 L517.91,180.13 L518.17,179.77 L518.42,179.34 L518.64,178.84 L518.85,178.30 L519.03,177.71 L519.19,177.09 L519.33,176.45 L519.44,175.80 L519.52,175.15 L519.58,174.51 L519.61,173.89 L519.62,173.30 L519.61,172.76 L519.58,172.26 L519.53,171.83 L519.46,171.47 L519.38,171.18 L519.29,170.97 L519.20,170.84 L519.10,170.80 L519.00,170.84 L518.90,170.97 L518.81,171.18 L518.74,171.47 L518.67,171.83 L518.62,172.26 L518.59,172.76 L518.57,173.30 L518.58,173.89 L518.62,174.51 L518.68,175.15 L518.76,175.80 L518.87,176.45 L519.01,177.09 L519.17,177.71 L519.35,178.30 L519.55,178.84 L519.78,179.34 L520.03,179.77 L520.29,180.13 L520.56,180.42 L520.84,180.63 L521.13,180.76 L521.42,180.80 L521.72,180.76 L522.00,180.63 L522.29,180.42 L522.56,180.13 L522.82,179.77 L523.06,179.34 L523.29,178.84 L523.50,178.30 L523.68,177.71 L523.84,177.09 L523.98,176.45 L524.09,175.80 L524.17,175.15 L524.23,174.51 L524.26,173.89 L524.27,173.30 L524.26,172.76 L524.23,172.26 L524.18,171.83 L524.11,171.47 L524.03,171.18 L523.94,170.97 L523.85,170.84 L523.75,170.80 L523.65,170.84 L523.55,170.97 L523.46,171.18 L523.39,171.47 L523.32,171.83 L523.27,172.26 L523.24,172.76 L523.22,173.30 L523.23,173.89 L523.27,174.51 L523.33,175.15 L523.41,175.80 L523.52,176.45 L523.66,177.09 L523.81,177.71 L524.00,178.30 L524.20,178.84 L524.43,179.34 L524.68,179.77 L524.94,180.13 L525.21,180.42 L525.49,180.63 L525.78,180.76 L526.07,180.80 L526.37,180.76 L526.65,180.63 L526.94,180.42 L527.21,180.13 L527.47,179.77 L527.71,179.34 L527.94,178.84 L528.15,178.30 L528.33,177.71 L528.49,177.09 L528.63,176.45 L528.73,175.80 L528.82,175.15 L528.88,174.51 L528.91,173.89 L528.92,173.30 L528.91,172.76 L528.88,172.26 L528.83,171.83 L528.76,171.47 L528.68,171.18 L528.59,170.97 L528.50,170.84 L528.40,170.80 L528.30,170.84 L528.20,170.97 L528.11,171.18 L528.03,171.47 L527.97,171.83 L527.92,172.26 L527.89,172.76 L527.87,173.30 L527.88,173.89 L527.92,174.51 L527.98,175.15 L528.06,175.80 L528.17,176.45 L528.30,177.09 L528.46,177.71 L528.65,178.30 L528.85,178.84 L529.08,179.34 L529.32,179.77 L529.58,180.13 L529.86,180.42 L530.14,180.63 L530.43,180.76 L530.72,180.80 L531.01,180.76 L531.30,180.63 L531.59,180.42 L531.86,180.13 L532.12,179.77 L532.36,179.34 L532.59,178.84 L532.80,178.30 L532.98,177.71 L533.14,177.09 L533.27,176.45 L533.38,175.80 L533.47,175.15 L533.53,174.51 L533.56,173.89 L533.57,173.30 L533.56,172.76 L533.53,172.26 L533.48,171.83 L533.41,171.47 L533.33,171.18 L533.24,170.97 L533.15,170.84 L533.05,170.80" stroke="#2a2a2a" stroke-width="0.6" fill="none"/>
</svg>

<svg width="800" height="52" viewBox="0 0 800 52">
<rect x="484" y="27.3" width="10.8" height="8.4" fill="#dfe9f6" stroke="#6a8cc0" stroke-width="0.6"/>
<path d="M484.5,35.2 L487.5,31 L490,33.5 L492,31.5 L494.5,35.2 Z" fill="#3a64a0"/>
<path d="M497,31.4 L497.9,32.2 L498.8,31.4" fill="none" stroke="#555" stroke-width="0.5"/>
<path d="M478.5,26 V47.5" stroke="#d6d4d3" stroke-width="0.5"/>
<path d="M450,28 L456,28 L453,32 Z M459,28 H466" stroke="#999" stroke-width="0.5" fill="none"/>
</svg>
<div class="t rb" style="left:481.4px;top:40.1px">Afbeelding</div>
<div class="t rg" style="left:447px;top:39.3px;color:#888">Converteren</div>
<div class="t rg" style="left:445px;top:44px;color:#888">naar SmartArt</div>
<!-- esc overlay -->
<div class="a" style="left:297.5px;top:23px;width:204.5px;height:24px;background:rgba(66,70,75,0.88)"></div>
<div class="t" style="left:317.8px;top:31.4px;font-size:7.5px;color:#f2f2f2;-webkit-text-stroke:0.12px #f2f2f2">Druk op</div>
<div class="a" style="left:348.3px;top:25.8px;width:16.6px;height:17.5px;border:0.8px solid #b8b8b8;border-radius:1.3px"></div>
<div class="t" style="left:351.4px;top:31.6px;font-size:7px;color:#f2f2f2;-webkit-text-stroke:0.1px #f2f2f2">Esc</div>
<div class="t" style="left:367.8px;top:31.4px;font-size:7.5px;color:#f2f2f2;-webkit-text-stroke:0.12px #f2f2f2">om het volledige scherm te sluiten</div>

<!-- notes -->
<div id="notes" class="a"></div>
<div class="a" style="left:139px;top:418.2px;width:573px;height:0.6px;background:#d3d2d1"></div>
<div class="t" style="left:141.5px;top:423.6px;font-size:4.85px;color:#1e1e1e;-webkit-text-stroke:0.1px #1e1e1e">Klik om notities toe te voegen</div>

<!-- status bar -->
<div id="status" class="a"></div>
<div class="t sb" style="left:96.7px">Dia 10 van 44</div>
<div class="t sb" style="left:133.7px">Nederlands (standaard)</div>
<div class="t sb" style="left:198px">Toegankelijkheid: onderzoeken</div>
<div class="t sb" style="left:527.5px">Notities</div>
<div class="t sb" style="left:557.7px">Opmerkingen</div>
<div class="a" style="left:592.5px;top:441.2px;width:10.8px;height:8.8px;background:#c6c5c4"></div>
<svg width="800" height="450" viewBox="0 0 800 450"><g fill="none" stroke="#666" stroke-width="0.55">
<path d="M191.2,443.2 L193.2,442.6 L195.2,443.2 M193.2,443 V446 L191.8,448 M193.2,446 L194.6,448 M191.6,444.4 H194.8"/>
<path d="M520.8,447.5 L521.4,445.6 L524,443 L525,444 L522.4,446.6 Z"/>
<path d="M551.2,443.4 H555.4 V446.4 H553 L551.8,447.4 V446.4 H551.2 Z" fill="#555" stroke="none"/>
<path d="M595.6,443.2 H599.8 V447.4 H595.6 Z M595.6,444.6 H599.8" stroke="#555"/>
<path d="M609.4,443.2 h1.6 v1.6 h-1.6 Z M612,443.2 h1.6 v1.6 h-1.6 Z M609.4,445.8 h1.6 v1.6 h-1.6 Z M612,445.8 h1.6 v1.6 h-1.6 Z" fill="#555" stroke="none"/>
<path d="M622.8,443.2 H627 V447.4 H622.8 Z M624.9,443.2 V447.4"/>
<path d="M636.2,443.2 H640.6 V446.2 H636.2 Z M638.4,446.2 V447.6 M637.4,447.6 H639.4"/>
<path d="M648,445.6 H650.2 M653,445.6 H691 M694.2,445.6 H697 M695.6,444.2 V447" stroke="#555"/>
</g>
<circle cx="675" cy="445.6" r="2.3" fill="#fff" stroke="#bbb" stroke-width="0.3"/>
</svg>
<div class="t sb" style="left:700.5px">161%</div>

<!-- right black side -->
<div class="a" style="left:712px;top:0;width:88px;height:450px;background:#000"></div>
<svg width="800" height="450" viewBox="0 0 800 450">
<path d="M766,437.5 H768.5 L771.5,435 V446 L768.5,443.5 H766 Z M773,438 Q775,440.5 773,443" fill="#1c1c1c" stroke="#1c1c1c" stroke-width="0.6"/>
<circle cx="790" cy="440.5" r="3.4" fill="none" stroke="#1c1c1c" stroke-width="2.2" stroke-dasharray="1.4 1"/>
<circle cx="790" cy="440.5" r="2.4" fill="none" stroke="#1c1c1c" stroke-width="1"/>
</svg>

<!-- webcam -->
<svg width="800" height="450" viewBox="0 0 800 450">
<defs><filter id="wb" x="-10%" y="-10%" width="120%" height="120%"><feGaussianBlur stdDeviation="0.7"/></filter>
<filter id="wb2" x="-20%" y="-20%" width="140%" height="140%"><feGaussianBlur stdDeviation="1.4"/></filter>
<clipPath id="wc"><rect x="723.7" y="0" width="76.3" height="42.8"/></clipPath>
<linearGradient id="wall" x1="0" y1="0" x2="1" y2="0"><stop offset="0" stop-color="#aba7a1"/><stop offset="0.3" stop-color="#bfbbb5"/><stop offset="0.6" stop-color="#cbc8c3"/><stop offset="1" stop-color="#b9b6b1"/></linearGradient>
</defs>
<g clip-path="url(#wc)">
<rect x="723.7" y="0" width="76.3" height="43" fill="url(#wall)"/>
<g filter="url(#wb2)">
<path d="M752,0 L800,30 L800,40 L745,0 Z" fill="#d6d3cf" opacity="0.8"/>
<rect x="737" y="0" width="6" height="43" fill="#a8a49e" opacity="0.8"/>
<rect x="786" y="25" width="14" height="18" fill="#c4c0bb"/>
</g>
<rect x="723.7" y="0" width="13" height="24" fill="#2a221b"/>
<rect x="723.7" y="24" width="13" height="19" fill="#b9b0a2"/>
<g filter="url(#wb)">
<circle cx="727" cy="5" r="1.3" fill="#c09860"/>
<circle cx="729" cy="8" r="1.1" fill="#a07840"/>
<circle cx="729" cy="14.5" r="2.4" fill="#e8dcc0"/>
<circle cx="726" cy="15" r="1.8" fill="#a8a048"/>
<circle cx="731" cy="19" r="1.5" fill="#d8c8a8"/>
<rect x="749" y="23.5" width="6" height="8" rx="1.5" fill="#e6e2dc"/>
<path d="M754.5,37 Q753.5,12 762,8.3 Q771,8 771.5,20 Q772,30 773,38 L754,40 Z" fill="#bfae90"/>
<path d="M757,12 Q762,7.5 768,11 Q766,9.5 762,9.5 Q758,10 757,12 Z" fill="#8a7660"/>
<path d="M747,43 Q746.5,30 755,27.8 L769,27.8 Q777.5,29 777.5,43 Z" fill="#d8b09c"/>
<path d="M757.3,14.5 Q757.5,11 762,11 Q766.8,11 766.8,15 L766.6,22.5 Q766,27.5 762,28 Q758.2,27.5 757.5,22.5 Z" fill="#dcb6a6"/>
<path d="M755,15 Q756,10.5 760,12 L757,27 Z" fill="#c8b494"/>
<path d="M770.5,14 Q769,11 765,11.5 L768,27 L771.5,31 Z" fill="#ccb89a"/>
<path d="M759,43 L766,37 L779,35 L781,43 Z" fill="#1a1b20"/>
<path d="M800,12.5 L784,16.5 L784,21.5 L800,18.5 Z" fill="#161616"/>
<ellipse cx="780.5" cy="19.5" rx="4" ry="3.6" fill="#131313"/>
<rect x="779.3" y="21" width="4.6" height="22" fill="#141414"/>
<path d="M777.5,22 Q775.5,27 777.5,32 Q776,36 778.5,40" stroke="#505050" stroke-width="0.7" fill="none"/>
</g>
<g fill="none" stroke="#4c50c4" stroke-width="0.65">
<rect x="757.3" y="17.3" width="4.5" height="2.8" rx="0.8"/><rect x="762.4" y="17.3" width="4.5" height="2.8" rx="0.8"/>
</g>
<rect x="723.7" y="35.6" width="31" height="7.2" fill="#181818" opacity="0.75"/>
</g>
</svg>
<div class="t" style="left:724.8px;top:37.3px;font-size:4.3px;color:#e4e4e4">Daniëlle Lauwerier</div>
</div></body></html>
